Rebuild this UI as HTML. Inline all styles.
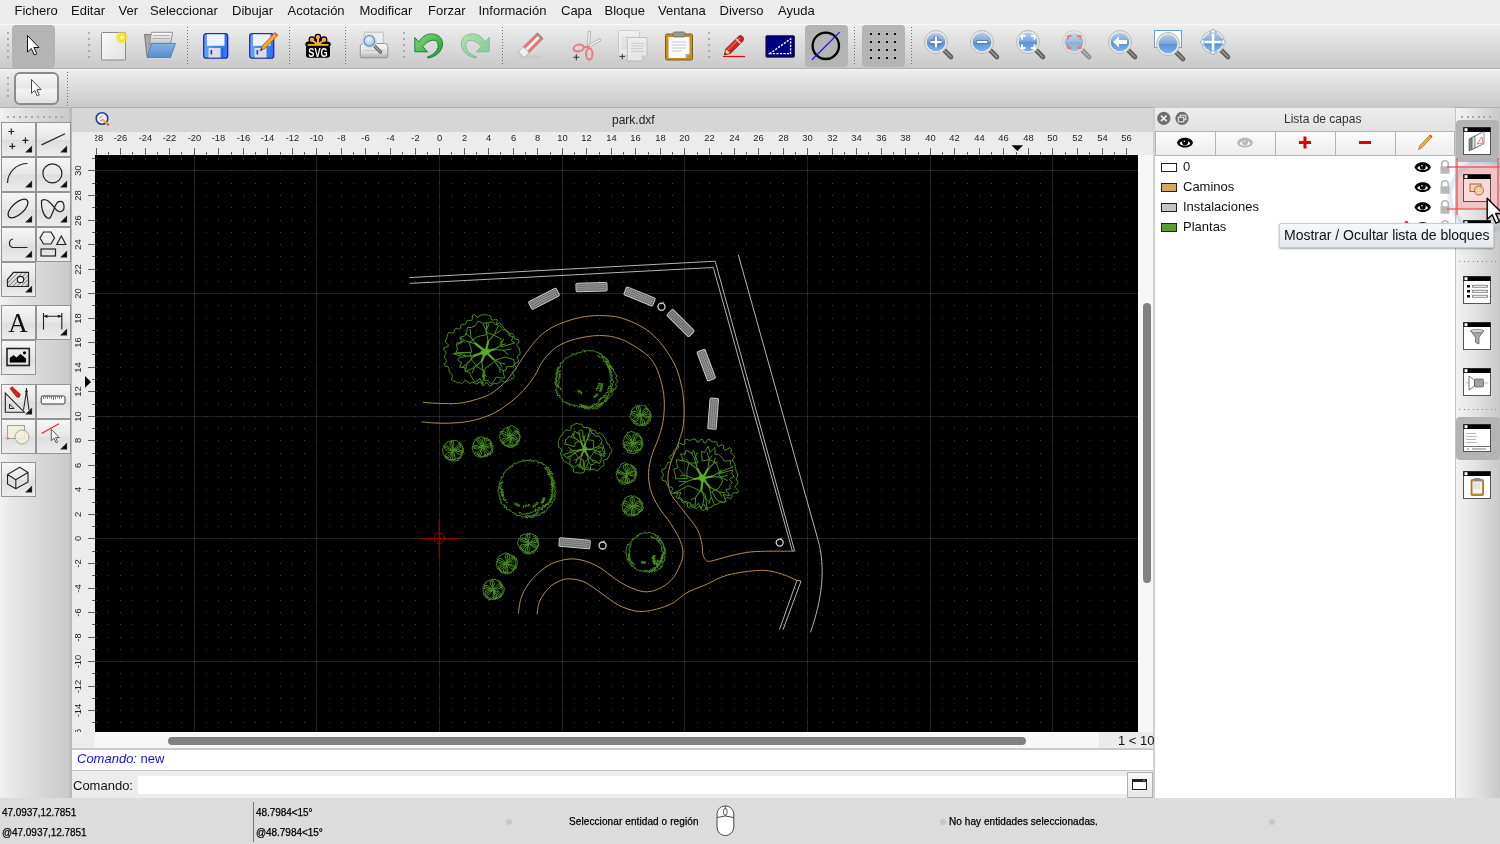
<!DOCTYPE html><html><head><meta charset="utf-8"><style>
*{margin:0;padding:0;box-sizing:border-box}
html,body{width:1500px;height:844px;overflow:hidden;background:#ececec;font-family:"Liberation Sans",sans-serif;color:#222;-webkit-font-smoothing:antialiased}
body{will-change:transform}
.a{position:absolute}
svg{position:absolute;overflow:visible}
.menu{left:0;top:0;width:1500px;height:24px;background:#ececec}
.menu span{position:absolute;top:3px;font-size:13px;line-height:16px;color:#111}
.tb1{left:0;top:24px;width:1500px;height:45px;background:linear-gradient(#eeeeee,#dedede 40%,#c9c9c9);border-top:1px solid #f8f8f8;border-bottom:1px solid #b0b0b0}
.tb2{left:0;top:69px;width:1500px;height:39px;background:linear-gradient(#eeeeee,#dedede 40%,#cacaca);border-top:1px solid #f4f4f4;border-bottom:1px solid #b4b4b4}
.tool{left:0;top:108px;width:72px;height:690px;background:linear-gradient(90deg,#f2f2f2,#e8e8e8 15%,#d8d8d8 55%,#cacaca 96%,#bababa 97%)}
.tbtn{position:absolute;width:35px;height:35px;border:1px solid #949494;background:linear-gradient(#f6f6f6,#e6e6e6 50%,#dedede 52%,#ececec)}
.title{left:72px;top:108px;width:1083px;height:24px;background:#d6d6d6}
.rul{background:#ececec}
.canvas{left:95px;top:155px;width:1043px;height:577px;background:#000;overflow:hidden}
.layers{left:1155px;top:108px;width:300px;height:690px;background:#fff}
.status{left:0;top:798px;width:1500px;height:46px;background:#dcdcdc}
.st{position:absolute;font-size:10px;line-height:12px;color:#000;letter-spacing:-0.05px;white-space:nowrap;-webkit-text-stroke:0.25px #000}
</style></head><body>
<div class="a menu">
<span style="left:14.5px">Fichero</span>
<span style="left:71px">Editar</span>
<span style="left:118.5px">Ver</span>
<span style="left:150px">Seleccionar</span>
<span style="left:232px">Dibujar</span>
<span style="left:287.5px">Acotación</span>
<span style="left:359.5px">Modificar</span>
<span style="left:428px">Forzar</span>
<span style="left:478.5px">Información</span>
<span style="left:561px">Capa</span>
<span style="left:604.5px">Bloque</span>
<span style="left:658px">Ventana</span>
<span style="left:719.5px">Diverso</span>
<span style="left:778px">Ayuda</span>
</div>
<div class="a tb1"></div>
<div class="a tb2"></div>
<div class="a" style="left:7px;top:32px;width:2px;height:2px;background:#9a9a9a;border-radius:1px"></div><div class="a" style="left:7px;top:38px;width:2px;height:2px;background:#9a9a9a;border-radius:1px"></div><div class="a" style="left:7px;top:44px;width:2px;height:2px;background:#9a9a9a;border-radius:1px"></div><div class="a" style="left:7px;top:50px;width:2px;height:2px;background:#9a9a9a;border-radius:1px"></div><div class="a" style="left:7px;top:56px;width:2px;height:2px;background:#9a9a9a;border-radius:1px"></div>
<div class="a" style="left:12px;top:25px;width:43px;height:43px;background:#b4b4b4;border-radius:4px"></div>
<svg class="a" style="left:27px;top:35px" width="14" height="22"><path d="M0 0L0 16.5L3.8 13L6.8 19.5L9.3 18.3L6.4 12L11.5 12z" transform="translate(0.5 0.5)" fill="#fff" stroke="#111" stroke-width="1"/></svg>
<div class="a" style="left:88px;top:32px;width:2px;height:2px;background:#9a9a9a;border-radius:1px"></div><div class="a" style="left:88px;top:38px;width:2px;height:2px;background:#9a9a9a;border-radius:1px"></div><div class="a" style="left:88px;top:44px;width:2px;height:2px;background:#9a9a9a;border-radius:1px"></div><div class="a" style="left:88px;top:50px;width:2px;height:2px;background:#9a9a9a;border-radius:1px"></div><div class="a" style="left:88px;top:56px;width:2px;height:2px;background:#9a9a9a;border-radius:1px"></div>
<svg class="a" style="left:100px;top:30px" width="30" height="32"><defs><linearGradient id="gp" x1="0" y1="0" x2="1" y2="1"><stop offset="0" stop-color="#fafafa"/><stop offset="1" stop-color="#e2e2e2"/></linearGradient><radialGradient id="gy"><stop offset="0" stop-color="#fffbd0"/><stop offset=".45" stop-color="#f2e21a"/><stop offset="1" stop-color="#f2e21a" stop-opacity="0"/></radialGradient></defs><rect x="1.5" y="2.5" width="24" height="27.5" rx="1" fill="url(#gp)" stroke="#8a8a8a"/><circle cx="21.8" cy="7.5" r="7" fill="url(#gy)"/></svg>
<svg class="a" style="left:140px;top:28px" width="40" height="34"><defs><linearGradient id="gf" x1="0" y1="0" x2="0" y2="1"><stop offset="0" stop-color="#86b2e2"/><stop offset="1" stop-color="#5a8ed0"/></linearGradient><linearGradient id="gpp" x1="0" y1="0" x2="0" y2="1"><stop offset="0" stop-color="#fafafa"/><stop offset="1" stop-color="#c4c4c4"/></linearGradient></defs><path d="M4.5 6.5H12.5L10 28.5H7z" fill="#a8a8a8" stroke="#6e6e6e" stroke-width="0.9"/><path d="M11.5 4.3H32.7L30.5 16H9.5z" fill="url(#gpp)" stroke="#8a8a8a" stroke-width="0.9"/><path d="M13 7.5H30M12.5 10.5H29.5" stroke="#b0b0b0" stroke-width="1.2"/><path d="M11.4 15.4H35.5L30.5 29.4H7C9 25 10 19 11.4 15.4z" fill="url(#gf)" stroke="#4a7cc0" stroke-width="0.9"/></svg>
<div class="a" style="left:187px;top:27px;width:1px;height:39px;background:linear-gradient(#707070 50%,transparent 50%);background-size:1px 3px"></div>
<svg class="a" style="left:203px;top:33px" width="26" height="26"><defs><linearGradient id="gs" x1="0" x2="1"><stop offset="0" stop-color="#69a6f8"/><stop offset=".5" stop-color="#3f85ef"/><stop offset="1" stop-color="#2f74f2"/></linearGradient></defs><rect x="0.7" y="0.7" width="24" height="24.5" rx="2.5" fill="url(#gs)" stroke="#2626a6" stroke-width="1.3"/><rect x="4" y="1.3" width="17.5" height="11.5" fill="#eef2ff"/><rect x="5.5" y="15" width="12" height="9.5" fill="#dcdce4"/><rect x="7.5" y="17" width="1.7" height="4.5" fill="#1a3ad8"/><rect x="18.5" y="15" width="2" height="9.5" fill="#1f5ef0"/></svg>
<svg class="a" style="left:249px;top:31px" width="30" height="29"><rect x="0.7" y="2.7" width="24" height="24.5" rx="2.5" fill="url(#gs)" stroke="#2626a6" stroke-width="1.3"/><rect x="4" y="3.3" width="17.5" height="11.5" fill="#eef2ff"/><rect x="5.5" y="17" width="12" height="9.5" fill="#dcdce4"/><rect x="7.5" y="19" width="1.7" height="4.5" fill="#1a3ad8"/><path d="M11 20l3-6 12-12.5 2.8 2.8L16.5 17z" fill="#f5a623" stroke="#b05a10" stroke-width="0.8"/><path d="M25 2.5l2.8 2.8 1-1-2.8-2.8z" fill="#e05050"/><path d="M11 20l1.5-3 1.5 1.5z" fill="#333"/></svg>
<div class="a" style="left:289px;top:27px;width:1px;height:39px;background:linear-gradient(#707070 50%,transparent 50%);background-size:1px 3px"></div>
<svg class="a" style="left:300px;top:28px" width="40" height="34"><g stroke="#000" stroke-width="2.2" stroke-linecap="round"><path d="M18 17L11.9 11.7M18 17V9.1M18 17L24 11.7M18 17L8 16.2M18 17L28 16.2" stroke-width="5.5"/></g><circle cx="11.9" cy="11.7" r="3.4" fill="#000"/><circle cx="17.9" cy="9.1" r="3.4" fill="#000"/><circle cx="24" cy="11.7" r="3.4" fill="#000"/><g stroke="#f7ac2f" stroke-linecap="round"><path d="M18 17L11.9 11.7M18 17V9.1M18 17L24 11.7" stroke-width="2"/><path d="M8.5 16.8H27.5" stroke-width="1.8"/></g><circle cx="11.9" cy="11.7" r="2.2" fill="#f7ac2f"/><circle cx="17.9" cy="9.1" r="2.2" fill="#f7ac2f"/><circle cx="24" cy="11.7" r="2.2" fill="#f7ac2f"/><rect x="6" y="17.5" width="24" height="12.3" rx="2.8" fill="#000"/><path d="M7.5 17H28.5" stroke="#f7ac2f" stroke-width="1.4"/><text transform="translate(18 29) scale(0.68 1)" text-anchor="middle" font-family="Liberation Sans" font-weight="bold" font-size="13.5" fill="#fff">SVG</text></svg>
<div class="a" style="left:345px;top:27px;width:1px;height:39px;background:linear-gradient(#707070 50%,transparent 50%);background-size:1px 3px"></div>
<svg class="a" style="left:355px;top:26px" width="40" height="38"><defs><linearGradient id="gpr" x1="0" y1="0" x2="0" y2="1"><stop offset="0" stop-color="#fafafa"/><stop offset=".6" stop-color="#e0e0e0"/><stop offset="1" stop-color="#b0b0b0"/></linearGradient><radialGradient id="glens" cx=".45" cy=".35" r=".7"><stop offset="0" stop-color="#eef4fb"/><stop offset="1" stop-color="#9ab8d8"/></radialGradient></defs><rect x="9.3" y="6.2" width="19" height="13" rx="1" fill="#ececec" stroke="#b8b8b8" stroke-width="0.9"/><path d="M5.3 20.5Q5.3 17.5 8.3 17.5H29.8Q32.8 17.5 32.8 20.5V30.5Q32.8 31.8 31.5 31.8H6.6Q5.3 31.8 5.3 30.5z" fill="url(#gpr)" stroke="#8c8c8c" stroke-width="0.9"/><path d="M8 24.5H30" stroke="#c8c8c8" stroke-width="1.2"/><path d="M19 19.5L25.5 26" stroke="#555" stroke-width="3.2" stroke-linecap="round"/><path d="M19 19.5L25.5 26" stroke="#aaa" stroke-width="1.4" stroke-linecap="round"/><circle cx="14.4" cy="14.9" r="6.8" fill="#f4f4f4" stroke="#c8c8c8" stroke-width="0.7"/><circle cx="14.4" cy="14.9" r="5.4" fill="url(#glens)" stroke="#4a80c8" stroke-width="1.1"/></svg>
<div class="a" style="left:403px;top:32px;width:2px;height:2px;background:#9a9a9a;border-radius:1px"></div><div class="a" style="left:403px;top:38px;width:2px;height:2px;background:#9a9a9a;border-radius:1px"></div><div class="a" style="left:403px;top:44px;width:2px;height:2px;background:#9a9a9a;border-radius:1px"></div><div class="a" style="left:403px;top:50px;width:2px;height:2px;background:#9a9a9a;border-radius:1px"></div><div class="a" style="left:403px;top:56px;width:2px;height:2px;background:#9a9a9a;border-radius:1px"></div>
<svg class="a" style="left:0;top:0" width="500" height="70"><defs><linearGradient id="gu" x1="0" y1="0" x2="1" y2="1"><stop offset="0" stop-color="#8ad67a"/><stop offset="1" stop-color="#22983a"/></linearGradient><linearGradient id="gr" x1="1" y1="0" x2="0" y2="1"><stop offset="0" stop-color="#b8e2b0"/><stop offset="1" stop-color="#80c49a"/></linearGradient></defs><path d="M414.7 37.4L414.9 51.8L427.6 51.8L422.7 46.5C426 43 429 40.3 433.8 40.3C438 40.5 438.5 45 437.9 47.6C437 52 432 55.5 427.4 57L428 58C436 57 442.6 51 442.6 43.8C442.6 37 437 33.9 431.5 33.9C426 33.9 421.5 37 418.9 42.1Z" fill="url(#gu)" stroke="#0b7a2a" stroke-width="0.9" stroke-linejoin="round"/><path d="M414.7 37.4L414.9 51.8L427.6 51.8L422.7 46.5C426 43 429 40.3 433.8 40.3C438 40.5 438.5 45 437.9 47.6C437 52 432 55.5 427.4 57L428 58C436 57 442.6 51 442.6 43.8C442.6 37 437 33.9 431.5 33.9C426 33.9 421.5 37 418.9 42.1Z" transform="translate(904 0) scale(-1 1)" fill="url(#gr)" stroke="#7ab890" stroke-width="0.9" stroke-linejoin="round"/></svg>
<div class="a" style="left:502px;top:27px;width:1px;height:39px;background:linear-gradient(#707070 50%,transparent 50%);background-size:1px 3px"></div>
<svg class="a" style="left:512px;top:26px" width="36" height="36"><ellipse cx="19" cy="31" rx="12" ry="1.6" fill="#c4c4c4" opacity="0.7"/><g transform="translate(18.8 19.2) rotate(-45)"><rect x="-13.5" y="-4.2" width="27" height="8.4" rx="1" fill="#e07c7c" stroke="#b86a6a" stroke-width="0.6"/><rect x="-13.5" y="-1.4" width="25" height="2.8" fill="#f2f2f2"/><rect x="-13.5" y="-4.2" width="7" height="8.4" fill="#f0f0f0" stroke="#a8a8a8" stroke-width="0.6"/><rect x="11.5" y="-4.2" width="2" height="8.4" fill="#909090"/></g></svg>
<svg class="a" style="left:570px;top:28px" width="34" height="34"><path d="M17.5 17.5L18.3 3L20.8 3.3L19.5 18.5z" fill="#f2f2f2" stroke="#a0a0a0" stroke-width="0.7"/><path d="M18.5 17L30 10.5L30.7 12.8L19.5 19z" fill="#f2f2f2" stroke="#a0a0a0" stroke-width="0.7"/><ellipse cx="8.7" cy="20" rx="5.2" ry="3.3" fill="none" stroke="#e68080" stroke-width="2.1" transform="rotate(-12 8.7 20)"/><ellipse cx="19.3" cy="26" rx="3.2" ry="5.6" fill="none" stroke="#e68080" stroke-width="2.1"/><path d="M13.5 19.5L18 18.5L19 21" fill="none" stroke="#e68080" stroke-width="2"/><path d="M3.3 29.3H9.3M6.3 26.3V32.3" stroke="#333" stroke-width="1.1"/></svg>
<svg class="a" style="left:612px;top:26px" width="40" height="38"><g opacity="0.6"><rect x="6.5" y="4.5" width="21" height="25" rx="1.2" fill="#f4f4f4" stroke="#b4b4b4" stroke-width="0.8"/><path d="M10 11.3h13M10 14h13M10 16.7h13M10 19.4h13M10 22h13" stroke="#c8c8c8" stroke-width="0.9"/><path d="M15.3 11.5H35V29.5L29.5 35H15.3z" fill="#f6f6f6" stroke="#a0a0a0" stroke-width="0.8"/><path d="M19 17.3h13.5M19 20h13M19 22.7h12M19 25.4h13.5" stroke="#b8b8b8" stroke-width="0.9"/><path d="M29.5 35V29.5H35z" fill="#c8c8c8"/></g><path d="M7.5 30.5H13M10.3 27.7V33.3" stroke="#444" stroke-width="1.1"/></svg>
<svg class="a" style="left:664px;top:31px" width="30" height="30"><rect x="1.5" y="3" width="27" height="26" rx="1.5" fill="#c98a2a" stroke="#8a5a10"/><path d="M4.5 6h21v17l-4 4h-17z" fill="#fafafa"/><path d="M8 11h14M8 14h14M8 17h14M8 20h10" stroke="#c8c8c8"/><path d="M21.5 27l4-4h-4z" fill="#a8a8a8"/><rect x="9" y="1" width="12" height="5" rx="1.5" fill="#9a9a8a" stroke="#6a6a5a" stroke-width="0.8"/></svg>
<div class="a" style="left:708px;top:32px;width:2px;height:2px;background:#9a9a9a;border-radius:1px"></div><div class="a" style="left:708px;top:38px;width:2px;height:2px;background:#9a9a9a;border-radius:1px"></div><div class="a" style="left:708px;top:44px;width:2px;height:2px;background:#9a9a9a;border-radius:1px"></div><div class="a" style="left:708px;top:50px;width:2px;height:2px;background:#9a9a9a;border-radius:1px"></div><div class="a" style="left:708px;top:56px;width:2px;height:2px;background:#9a9a9a;border-radius:1px"></div>
<svg class="a" style="left:716px;top:26px" width="36" height="36"><g transform="translate(8.5 28.8) rotate(-45)"><path d="M0 0L5.5 -3.2H22.5A3.2 3.2 0 0 1 22.5 3.2H5.5z" fill="#d8202a" stroke="#6a3410" stroke-width="0.8"/><path d="M5.5 -1H22.5" stroke="#f07070" stroke-width="1"/><rect x="18.5" y="-3.2" width="1.8" height="6.4" fill="#c8c8c8"/><path d="M0 0L5.5 -3.2V3.2z" fill="#f0d0a0" stroke="#6a3410" stroke-width="0.6"/><path d="M0 0L2 -1.2V1.2z" fill="#222"/></g><path d="M7 30.5H29" stroke="#f00000" stroke-width="1.2"/></svg>
<svg class="a" style="left:765px;top:35px" width="31" height="24"><rect x="0.9" y="0.7" width="28.5" height="21.5" rx="1" fill="#00007e" stroke="#1a1a1a" stroke-width="0.9"/><path d="M4.6 18.7L25.6 3.9V18.7z" fill="none" stroke="#ffffff" stroke-width="1.3" stroke-dasharray="2.2 1.3"/></svg>
<div class="a" style="left:805px;top:25px;width:43px;height:42px;background:#b4b4b4;border-radius:4px"></div>
<svg class="a" style="left:805px;top:25px" width="43" height="42"><circle cx="20.8" cy="20.8" r="13.2" fill="none" stroke="#000" stroke-width="2.3"/><path d="M7 34.75L34.7 7.1" stroke="#1010f0" stroke-width="1.1"/></svg>
<div class="a" style="left:854px;top:27px;width:1px;height:39px;background:linear-gradient(#707070 50%,transparent 50%);background-size:1px 3px"></div>
<div class="a" style="left:862px;top:25px;width:43px;height:42px;background:#b4b4b4;border-radius:4px"></div>
<svg class="a" style="left:0;top:0" width="1" height="1"><rect x="870" y="33" width="2" height="2" fill="#111"/><rect x="870" y="41" width="2" height="2" fill="#111"/><rect x="870" y="49" width="2" height="2" fill="#111"/><rect x="870" y="57" width="2" height="2" fill="#111"/><rect x="878" y="33" width="2" height="2" fill="#111"/><rect x="878" y="41" width="2" height="2" fill="#111"/><rect x="878" y="49" width="2" height="2" fill="#111"/><rect x="878" y="57" width="2" height="2" fill="#111"/><rect x="886" y="33" width="2" height="2" fill="#111"/><rect x="886" y="41" width="2" height="2" fill="#111"/><rect x="886" y="49" width="2" height="2" fill="#111"/><rect x="886" y="57" width="2" height="2" fill="#111"/><rect x="894" y="33" width="2" height="2" fill="#111"/><rect x="894" y="41" width="2" height="2" fill="#111"/><rect x="894" y="49" width="2" height="2" fill="#111"/><rect x="894" y="57" width="2" height="2" fill="#111"/></svg>
<div class="a" style="left:911px;top:27px;width:1px;height:39px;background:linear-gradient(#707070 50%,transparent 50%);background-size:1px 3px"></div>
<svg class="a" width="0" height="0"><defs><linearGradient id="gmag" x1="0" y1="0" x2="0" y2="1"><stop offset="0" stop-color="#b4cdea"/><stop offset=".48" stop-color="#7aa4d8"/><stop offset=".52" stop-color="#5b8fd2"/><stop offset="1" stop-color="#7ab4ee"/></linearGradient></defs></svg>
<svg class="a" style="left:921px;top:27px" width="34" height="34"><path d="M23 23L30 30" stroke="#5e5e5e" stroke-width="4.6" stroke-linecap="round"/><path d="M23 23L30 30" stroke="#9a9a9a" stroke-width="1.4" stroke-linecap="round"/><circle cx="15" cy="15" r="11.5" fill="#e8e8e2" stroke="#b8b8b0" stroke-width="1"/><circle cx="15" cy="15" r="9.3" fill="url(#gmag)"/><path d="M15 9.5v11M9.5 15h11" stroke="#2a5aa0" stroke-width="4.4"/><path d="M15 9.5v11M9.5 15h11" stroke="#fff" stroke-width="2.6"/></svg>
<svg class="a" style="left:966.5px;top:27px" width="34" height="34"><path d="M23 23L30 30" stroke="#5e5e5e" stroke-width="4.6" stroke-linecap="round"/><path d="M23 23L30 30" stroke="#9a9a9a" stroke-width="1.4" stroke-linecap="round"/><circle cx="15" cy="15" r="11.5" fill="#e8e8e2" stroke="#b8b8b0" stroke-width="1"/><circle cx="15" cy="15" r="9.3" fill="url(#gmag)"/><path d="M9.5 15h11" stroke="#2a5aa0" stroke-width="4"/><path d="M9.8 15h10.4" stroke="#fff" stroke-width="2.4"/></svg>
<svg class="a" style="left:1013px;top:27px" width="34" height="34"><path d="M23 23L30 30" stroke="#5e5e5e" stroke-width="4.6" stroke-linecap="round"/><path d="M23 23L30 30" stroke="#9a9a9a" stroke-width="1.4" stroke-linecap="round"/><circle cx="15" cy="15" r="11.5" fill="#e8e8e2" stroke="#b8b8b0" stroke-width="1"/><circle cx="15" cy="15" r="9.3" fill="url(#gmag)"/><path d="M9 12.5V9h3.5M18 9h3.5v3.5M21.5 17.5V21h-3.5M12.5 21H9v-3.5" fill="none" stroke="#fff" stroke-width="2"/></svg>
<svg class="a" style="left:1059px;top:27px" width="34" height="34" opacity="0.6"><path d="M23 23L30 30" stroke="#5e5e5e" stroke-width="4.6" stroke-linecap="round"/><path d="M23 23L30 30" stroke="#9a9a9a" stroke-width="1.4" stroke-linecap="round"/><circle cx="15" cy="15" r="11.5" fill="#e8e8e2" stroke="#b8b8b0" stroke-width="1"/><circle cx="15" cy="15" r="9.3" fill="url(#gmag)"/><path d="M9 12.5V9h3.5M18 9h3.5v3.5M21.5 17.5V21h-3.5M12.5 21H9v-3.5" fill="none" stroke="#e84040" stroke-width="2"/></svg>
<svg class="a" style="left:1105px;top:27px" width="34" height="34"><path d="M23 23L30 30" stroke="#5e5e5e" stroke-width="4.6" stroke-linecap="round"/><path d="M23 23L30 30" stroke="#9a9a9a" stroke-width="1.4" stroke-linecap="round"/><circle cx="15" cy="15" r="11.5" fill="#e8e8e2" stroke="#b8b8b0" stroke-width="1"/><circle cx="15" cy="15" r="9.3" fill="url(#gmag)"/><path d="M8 15l6-5.5v3.5h8v4h-8v3.5z" fill="#fff"/></svg>
<div class="a" style="left:1154px;top:30px;width:28px;height:18px;background:#fff;border:1px solid #6a9ad8"></div>
<svg class="a" style="left:1153px;top:29px" width="34" height="34"><path d="M23 23L30 30" stroke="#5e5e5e" stroke-width="4.6" stroke-linecap="round"/><path d="M23 23L30 30" stroke="#9a9a9a" stroke-width="1.4" stroke-linecap="round"/><circle cx="15" cy="15" r="11.5" fill="#e8e8e2" stroke="#b8b8b0" stroke-width="1"/><circle cx="15" cy="15" r="9.3" fill="url(#gmag)"/></svg>
<svg class="a" style="left:1198px;top:27px" width="34" height="34"><path d="M23 23L30 30" stroke="#5e5e5e" stroke-width="4.6" stroke-linecap="round"/><path d="M23 23L30 30" stroke="#9a9a9a" stroke-width="1.4" stroke-linecap="round"/><circle cx="15" cy="15" r="11.5" fill="#e8e8e2" stroke="#b8b8b0" stroke-width="1"/><circle cx="15" cy="15" r="9.3" fill="url(#gmag)"/><path d="M15 4v22M4 15h22" stroke="#fff" stroke-width="2.5"/><path d="M15 2l-3.5 4h7zM15 28l-3.5-4h7zM2 15l4-3.5v7zM28 15l-4-3.5v7z" fill="#fff" stroke="#4a80d0" stroke-width="0.6"/></svg>
<div class="a" style="left:7px;top:77px;width:2px;height:2px;background:#9a9a9a;border-radius:1px"></div><div class="a" style="left:7px;top:83px;width:2px;height:2px;background:#9a9a9a;border-radius:1px"></div><div class="a" style="left:7px;top:89px;width:2px;height:2px;background:#9a9a9a;border-radius:1px"></div><div class="a" style="left:7px;top:95px;width:2px;height:2px;background:#9a9a9a;border-radius:1px"></div>
<div class="a" style="left:14px;top:72px;width:45px;height:33px;border:2px solid #8c8c8c;border-radius:6px;background:linear-gradient(#f8f8f8,#e6e6e6 45%,#f4f4f4 55%,#e2e2e2)"></div>
<svg class="a" style="left:31px;top:79px" width="12" height="19"><path d="M0 0L0 13.8L3.2 10.9L5.7 16.4L7.8 15.4L5.4 10.1L9.6 10.1z" transform="translate(0.5 0.5)" fill="#fff" stroke="#333" stroke-width="0.9"/></svg>
<div class="a" style="left:67px;top:72px;width:1px;height:34px;background:linear-gradient(#707070 50%,transparent 50%);background-size:1px 3px"></div>
<div class="a tool"></div>
<div class="a" style="left:7px;top:116px;width:2px;height:2px;background:#a8a8a8"></div><div class="a" style="left:13px;top:116px;width:2px;height:2px;background:#a8a8a8"></div><div class="a" style="left:19px;top:116px;width:2px;height:2px;background:#a8a8a8"></div><div class="a" style="left:25px;top:116px;width:2px;height:2px;background:#a8a8a8"></div><div class="a" style="left:31px;top:116px;width:2px;height:2px;background:#a8a8a8"></div><div class="a" style="left:37px;top:116px;width:2px;height:2px;background:#a8a8a8"></div><div class="a" style="left:43px;top:116px;width:2px;height:2px;background:#a8a8a8"></div><div class="a" style="left:49px;top:116px;width:2px;height:2px;background:#a8a8a8"></div><div class="a" style="left:55px;top:116px;width:2px;height:2px;background:#a8a8a8"></div><div class="a" style="left:61px;top:116px;width:2px;height:2px;background:#a8a8a8"></div>
<div class="tbtn" style="left:1px;top:122px"></div>
<div class="tbtn" style="left:36px;top:122px"></div>
<div class="tbtn" style="left:1px;top:157px"></div>
<div class="tbtn" style="left:36px;top:157px"></div>
<div class="tbtn" style="left:1px;top:192px"></div>
<div class="tbtn" style="left:36px;top:192px"></div>
<div class="tbtn" style="left:1px;top:227px"></div>
<div class="tbtn" style="left:36px;top:227px"></div>
<div class="tbtn" style="left:1px;top:262px"></div>
<div class="tbtn" style="left:1px;top:305px"></div>
<div class="tbtn" style="left:36px;top:305px"></div>
<div class="tbtn" style="left:1px;top:340px"></div>
<div class="tbtn" style="left:1px;top:384px"></div>
<div class="tbtn" style="left:36px;top:384px"></div>
<div class="tbtn" style="left:1px;top:419px"></div>
<div class="tbtn" style="left:36px;top:419px"></div>
<div class="tbtn" style="left:1px;top:462px"></div>
<svg class="a" style="left:0;top:0" width="72" height="500" fill="none" stroke="#222" stroke-width="1.2"><path d="M8.3 131.5h6M11.3 128.5v6M22.4 140.4h6M25.4 137.4v6M9.3 146.3h6M12.3 143.3v6"/><path d="M26.5 152h5v-5z" fill="#000"/><path d="M61.5 152h5v-5z" fill="#000"/><path d="M41.5 144.9L65 133.8"/><path d="M7.5 183A20 20 0 0 1 27.5 163.5"/><circle cx="52.4" cy="173.4" r="9.5"/><path d="M26.5 187h5v-5z" fill="#000"/><path d="M61.5 187h5v-5z" fill="#000"/><ellipse cx="18" cy="208.5" rx="12.3" ry="5.8" transform="rotate(-42 18 208.5)"/><path d="M41.5 200.5C47 197 52 205 56 209.5C60 214 64.5 211 64 206C63.5 200 58 200 55.5 205.5C52 213 51 220 47.5 218C43 215.5 41 207 41.5 200.5z"/><path d="M26.5 222h5v-5z" fill="#000"/><path d="M61.5 222h5v-5z" fill="#000"/><path d="M13.2 239A4.3 4.3 0 0 0 13 247.5H27.5"/><path d="M43.5 232h7.5l3.5 6-3.5 6h-7.5l-3.5-6z"/><path d="M61.3 236l4.5 8.5h-9z"/><rect x="41" y="249" width="14.5" height="7"/><path d="M26.5 257h5v-5z" fill="#000"/><path d="M61.5 257h5v-5z" fill="#000"/><defs><pattern id="hp" width="3" height="3" patternUnits="userSpaceOnUse" patternTransform="rotate(-45)"><path d="M0 1.5h3" stroke="#666" stroke-width="0.7"/></pattern></defs><path d="M7.5 286.5V279.5L13.5 272.3H28.5V286.5z" fill="url(#hp)"/><circle cx="20.5" cy="279.5" r="3.2" fill="#eee"/><path d="M26.5 292h5v-5z" fill="#000"/><text x="18" y="331.5" font-family="Liberation Serif" font-size="27" fill="#111" stroke="none" text-anchor="middle">A</text><path d="M43.5 313V329.5M61.8 313V329.5M43.5 316.3H61.8" stroke-width="1.1"/><path d="M43.5 316.3l4-1.8v3.6zM61.8 316.3l-4-1.8v3.6z" fill="#222" stroke="none"/><path d="M61.5 335h5v-5z" fill="#000"/><rect x="7" y="348.5" width="22.3" height="17" stroke-width="1.6"/><path d="M9.8 362.5V358L13.5 355l3 2.5 4-3.5 5.5 4.5v4z" fill="#000" stroke="none"/><circle cx="24.5" cy="352.8" r="1.6" fill="#000" stroke="none"/><path d="M5.3 393V412.2H24.3z" stroke-width="1.1"/><path d="M9.5 404V408.5H14z" stroke-width="1"/><path d="M10 388.5L12 386.5L20.5 394.5L19 397.5L16.5 397z" fill="#d82020" stroke="#801010" stroke-width="0.5"/><path d="M26.5 388V391M26.5 391L23.5 410M26.5 391L29 410" stroke-width="1.1"/><circle cx="26.5" cy="391.5" r="1.3" fill="#222" stroke="none"/><path d="M26.5 414h5v-5z" fill="#000"/><rect x="41.2" y="396" width="23.8" height="8" rx="1.5" fill="#fafafa" stroke="#333" stroke-width="1"/><path d="M43.5 396.5v2.5M45.5 396.5v1.8M47.5 396.5v2.5M49.5 396.5v1.8M51.5 396.5v2.5M53.5 396.5v3.5M55.5 396.5v2.5M57.5 396.5v1.8M59.5 396.5v2.5M61.5 396.5v1.8" stroke-width="0.6"/><rect x="7.5" y="425.5" width="17" height="13" fill="#f2efdc" stroke="#a0a0a0" stroke-width="1"/><circle cx="22" cy="437" r="7" fill="#f2efdc" fill-opacity="0.85" stroke="#a8a8a0" stroke-width="1"/><circle cx="7.8" cy="438.2" r="1.3" fill="#f07070" stroke="none"/><path d="M41.5 433.5L59 423.8" stroke="#e82020" stroke-width="1.1"/><path d="M51.3 429.2v11.5l2.7-2.5l2 4.5l1.6-0.8l-2-4.3h3.6z" fill="#fff" stroke="#333" stroke-width="0.8"/><path d="M61.5 449h5v-5z" fill="#000"/><path d="M7.5 474.5L19.7 467.3L28 472.5L15.8 479.8zM7.5 474.5V484L15.8 488.7V479.8M28 472.5V482L15.8 488.7" stroke-width="1.1" stroke-linejoin="round"/><path d="M26.5 492h5v-5z" fill="#000"/></svg>
<div class="a title"></div>
<div class="a" style="left:72px;top:132px;width:1083px;height:23px;background:#ececec"></div>
<div class="a" style="left:72px;top:155px;width:23px;height:593px;background:#ececec"></div>
<div class="a" style="left:95px;top:732px;width:1060px;height:16px;background:#f7f7f7"></div>
<div class="a" style="left:1138px;top:155px;width:17px;height:577px;background:#f7f7f7"></div>
<div class="a" style="left:1099px;top:732px;width:55px;height:16px;background:#ebebeb"></div>
<div class="a canvas"></div>
<svg class="a" style="left:95px;top:155px" width="1043" height="577" viewBox="95 155 1043 577">
<path stroke="#202020" stroke-width="1" fill="none" d="M194.5 155V732M316.5 155V732M439.5 155V732M562.5 155V732M684.5 155V732M807.5 155V732M930.5 155V732M1052.5 155V732M95 661.5H1138M95 538.5H1138M95 416.5H1138M95 293.5H1138M95 170.5H1138"/>
<path fill="#404040" d="M96 722h1v1h-1zM96 710h1v1h-1zM96 698h1v1h-1zM96 686h1v1h-1zM96 673h1v1h-1zM96 661h1v1h-1zM96 649h1v1h-1zM96 637h1v1h-1zM96 624h1v1h-1zM96 612h1v1h-1zM96 600h1v1h-1zM96 588h1v1h-1zM96 575h1v1h-1zM96 563h1v1h-1zM96 551h1v1h-1zM96 538h1v1h-1zM96 526h1v1h-1zM96 514h1v1h-1zM96 502h1v1h-1zM96 489h1v1h-1zM96 477h1v1h-1zM96 465h1v1h-1zM96 453h1v1h-1zM96 440h1v1h-1zM96 428h1v1h-1zM96 416h1v1h-1zM96 404h1v1h-1zM96 391h1v1h-1zM96 379h1v1h-1zM96 367h1v1h-1zM96 354h1v1h-1zM96 342h1v1h-1zM96 330h1v1h-1zM96 318h1v1h-1zM96 305h1v1h-1zM96 293h1v1h-1zM96 281h1v1h-1zM96 269h1v1h-1zM96 256h1v1h-1zM96 244h1v1h-1zM96 232h1v1h-1zM96 220h1v1h-1zM96 207h1v1h-1zM96 195h1v1h-1zM96 183h1v1h-1zM96 170h1v1h-1zM96 158h1v1h-1zM108 722h1v1h-1zM108 710h1v1h-1zM108 698h1v1h-1zM108 686h1v1h-1zM108 673h1v1h-1zM108 661h1v1h-1zM108 649h1v1h-1zM108 637h1v1h-1zM108 624h1v1h-1zM108 612h1v1h-1zM108 600h1v1h-1zM108 588h1v1h-1zM108 575h1v1h-1zM108 563h1v1h-1zM108 551h1v1h-1zM108 538h1v1h-1zM108 526h1v1h-1zM108 514h1v1h-1zM108 502h1v1h-1zM108 489h1v1h-1zM108 477h1v1h-1zM108 465h1v1h-1zM108 453h1v1h-1zM108 440h1v1h-1zM108 428h1v1h-1zM108 416h1v1h-1zM108 404h1v1h-1zM108 391h1v1h-1zM108 379h1v1h-1zM108 367h1v1h-1zM108 354h1v1h-1zM108 342h1v1h-1zM108 330h1v1h-1zM108 318h1v1h-1zM108 305h1v1h-1zM108 293h1v1h-1zM108 281h1v1h-1zM108 269h1v1h-1zM108 256h1v1h-1zM108 244h1v1h-1zM108 232h1v1h-1zM108 220h1v1h-1zM108 207h1v1h-1zM108 195h1v1h-1zM108 183h1v1h-1zM108 170h1v1h-1zM108 158h1v1h-1zM120 722h1v1h-1zM120 710h1v1h-1zM120 698h1v1h-1zM120 686h1v1h-1zM120 673h1v1h-1zM120 661h1v1h-1zM120 649h1v1h-1zM120 637h1v1h-1zM120 624h1v1h-1zM120 612h1v1h-1zM120 600h1v1h-1zM120 588h1v1h-1zM120 575h1v1h-1zM120 563h1v1h-1zM120 551h1v1h-1zM120 538h1v1h-1zM120 526h1v1h-1zM120 514h1v1h-1zM120 502h1v1h-1zM120 489h1v1h-1zM120 477h1v1h-1zM120 465h1v1h-1zM120 453h1v1h-1zM120 440h1v1h-1zM120 428h1v1h-1zM120 416h1v1h-1zM120 404h1v1h-1zM120 391h1v1h-1zM120 379h1v1h-1zM120 367h1v1h-1zM120 354h1v1h-1zM120 342h1v1h-1zM120 330h1v1h-1zM120 318h1v1h-1zM120 305h1v1h-1zM120 293h1v1h-1zM120 281h1v1h-1zM120 269h1v1h-1zM120 256h1v1h-1zM120 244h1v1h-1zM120 232h1v1h-1zM120 220h1v1h-1zM120 207h1v1h-1zM120 195h1v1h-1zM120 183h1v1h-1zM120 170h1v1h-1zM120 158h1v1h-1zM132 722h1v1h-1zM132 710h1v1h-1zM132 698h1v1h-1zM132 686h1v1h-1zM132 673h1v1h-1zM132 661h1v1h-1zM132 649h1v1h-1zM132 637h1v1h-1zM132 624h1v1h-1zM132 612h1v1h-1zM132 600h1v1h-1zM132 588h1v1h-1zM132 575h1v1h-1zM132 563h1v1h-1zM132 551h1v1h-1zM132 538h1v1h-1zM132 526h1v1h-1zM132 514h1v1h-1zM132 502h1v1h-1zM132 489h1v1h-1zM132 477h1v1h-1zM132 465h1v1h-1zM132 453h1v1h-1zM132 440h1v1h-1zM132 428h1v1h-1zM132 416h1v1h-1zM132 404h1v1h-1zM132 391h1v1h-1zM132 379h1v1h-1zM132 367h1v1h-1zM132 354h1v1h-1zM132 342h1v1h-1zM132 330h1v1h-1zM132 318h1v1h-1zM132 305h1v1h-1zM132 293h1v1h-1zM132 281h1v1h-1zM132 269h1v1h-1zM132 256h1v1h-1zM132 244h1v1h-1zM132 232h1v1h-1zM132 220h1v1h-1zM132 207h1v1h-1zM132 195h1v1h-1zM132 183h1v1h-1zM132 170h1v1h-1zM132 158h1v1h-1zM145 722h1v1h-1zM145 710h1v1h-1zM145 698h1v1h-1zM145 686h1v1h-1zM145 673h1v1h-1zM145 661h1v1h-1zM145 649h1v1h-1zM145 637h1v1h-1zM145 624h1v1h-1zM145 612h1v1h-1zM145 600h1v1h-1zM145 588h1v1h-1zM145 575h1v1h-1zM145 563h1v1h-1zM145 551h1v1h-1zM145 538h1v1h-1zM145 526h1v1h-1zM145 514h1v1h-1zM145 502h1v1h-1zM145 489h1v1h-1zM145 477h1v1h-1zM145 465h1v1h-1zM145 453h1v1h-1zM145 440h1v1h-1zM145 428h1v1h-1zM145 416h1v1h-1zM145 404h1v1h-1zM145 391h1v1h-1zM145 379h1v1h-1zM145 367h1v1h-1zM145 354h1v1h-1zM145 342h1v1h-1zM145 330h1v1h-1zM145 318h1v1h-1zM145 305h1v1h-1zM145 293h1v1h-1zM145 281h1v1h-1zM145 269h1v1h-1zM145 256h1v1h-1zM145 244h1v1h-1zM145 232h1v1h-1zM145 220h1v1h-1zM145 207h1v1h-1zM145 195h1v1h-1zM145 183h1v1h-1zM145 170h1v1h-1zM145 158h1v1h-1zM157 722h1v1h-1zM157 710h1v1h-1zM157 698h1v1h-1zM157 686h1v1h-1zM157 673h1v1h-1zM157 661h1v1h-1zM157 649h1v1h-1zM157 637h1v1h-1zM157 624h1v1h-1zM157 612h1v1h-1zM157 600h1v1h-1zM157 588h1v1h-1zM157 575h1v1h-1zM157 563h1v1h-1zM157 551h1v1h-1zM157 538h1v1h-1zM157 526h1v1h-1zM157 514h1v1h-1zM157 502h1v1h-1zM157 489h1v1h-1zM157 477h1v1h-1zM157 465h1v1h-1zM157 453h1v1h-1zM157 440h1v1h-1zM157 428h1v1h-1zM157 416h1v1h-1zM157 404h1v1h-1zM157 391h1v1h-1zM157 379h1v1h-1zM157 367h1v1h-1zM157 354h1v1h-1zM157 342h1v1h-1zM157 330h1v1h-1zM157 318h1v1h-1zM157 305h1v1h-1zM157 293h1v1h-1zM157 281h1v1h-1zM157 269h1v1h-1zM157 256h1v1h-1zM157 244h1v1h-1zM157 232h1v1h-1zM157 220h1v1h-1zM157 207h1v1h-1zM157 195h1v1h-1zM157 183h1v1h-1zM157 170h1v1h-1zM157 158h1v1h-1zM169 722h1v1h-1zM169 710h1v1h-1zM169 698h1v1h-1zM169 686h1v1h-1zM169 673h1v1h-1zM169 661h1v1h-1zM169 649h1v1h-1zM169 637h1v1h-1zM169 624h1v1h-1zM169 612h1v1h-1zM169 600h1v1h-1zM169 588h1v1h-1zM169 575h1v1h-1zM169 563h1v1h-1zM169 551h1v1h-1zM169 538h1v1h-1zM169 526h1v1h-1zM169 514h1v1h-1zM169 502h1v1h-1zM169 489h1v1h-1zM169 477h1v1h-1zM169 465h1v1h-1zM169 453h1v1h-1zM169 440h1v1h-1zM169 428h1v1h-1zM169 416h1v1h-1zM169 404h1v1h-1zM169 391h1v1h-1zM169 379h1v1h-1zM169 367h1v1h-1zM169 354h1v1h-1zM169 342h1v1h-1zM169 330h1v1h-1zM169 318h1v1h-1zM169 305h1v1h-1zM169 293h1v1h-1zM169 281h1v1h-1zM169 269h1v1h-1zM169 256h1v1h-1zM169 244h1v1h-1zM169 232h1v1h-1zM169 220h1v1h-1zM169 207h1v1h-1zM169 195h1v1h-1zM169 183h1v1h-1zM169 170h1v1h-1zM169 158h1v1h-1zM181 722h1v1h-1zM181 710h1v1h-1zM181 698h1v1h-1zM181 686h1v1h-1zM181 673h1v1h-1zM181 661h1v1h-1zM181 649h1v1h-1zM181 637h1v1h-1zM181 624h1v1h-1zM181 612h1v1h-1zM181 600h1v1h-1zM181 588h1v1h-1zM181 575h1v1h-1zM181 563h1v1h-1zM181 551h1v1h-1zM181 538h1v1h-1zM181 526h1v1h-1zM181 514h1v1h-1zM181 502h1v1h-1zM181 489h1v1h-1zM181 477h1v1h-1zM181 465h1v1h-1zM181 453h1v1h-1zM181 440h1v1h-1zM181 428h1v1h-1zM181 416h1v1h-1zM181 404h1v1h-1zM181 391h1v1h-1zM181 379h1v1h-1zM181 367h1v1h-1zM181 354h1v1h-1zM181 342h1v1h-1zM181 330h1v1h-1zM181 318h1v1h-1zM181 305h1v1h-1zM181 293h1v1h-1zM181 281h1v1h-1zM181 269h1v1h-1zM181 256h1v1h-1zM181 244h1v1h-1zM181 232h1v1h-1zM181 220h1v1h-1zM181 207h1v1h-1zM181 195h1v1h-1zM181 183h1v1h-1zM181 170h1v1h-1zM181 158h1v1h-1zM194 722h1v1h-1zM194 710h1v1h-1zM194 698h1v1h-1zM194 686h1v1h-1zM194 673h1v1h-1zM194 661h1v1h-1zM194 649h1v1h-1zM194 637h1v1h-1zM194 624h1v1h-1zM194 612h1v1h-1zM194 600h1v1h-1zM194 588h1v1h-1zM194 575h1v1h-1zM194 563h1v1h-1zM194 551h1v1h-1zM194 538h1v1h-1zM194 526h1v1h-1zM194 514h1v1h-1zM194 502h1v1h-1zM194 489h1v1h-1zM194 477h1v1h-1zM194 465h1v1h-1zM194 453h1v1h-1zM194 440h1v1h-1zM194 428h1v1h-1zM194 416h1v1h-1zM194 404h1v1h-1zM194 391h1v1h-1zM194 379h1v1h-1zM194 367h1v1h-1zM194 354h1v1h-1zM194 342h1v1h-1zM194 330h1v1h-1zM194 318h1v1h-1zM194 305h1v1h-1zM194 293h1v1h-1zM194 281h1v1h-1zM194 269h1v1h-1zM194 256h1v1h-1zM194 244h1v1h-1zM194 232h1v1h-1zM194 220h1v1h-1zM194 207h1v1h-1zM194 195h1v1h-1zM194 183h1v1h-1zM194 170h1v1h-1zM194 158h1v1h-1zM206 722h1v1h-1zM206 710h1v1h-1zM206 698h1v1h-1zM206 686h1v1h-1zM206 673h1v1h-1zM206 661h1v1h-1zM206 649h1v1h-1zM206 637h1v1h-1zM206 624h1v1h-1zM206 612h1v1h-1zM206 600h1v1h-1zM206 588h1v1h-1zM206 575h1v1h-1zM206 563h1v1h-1zM206 551h1v1h-1zM206 538h1v1h-1zM206 526h1v1h-1zM206 514h1v1h-1zM206 502h1v1h-1zM206 489h1v1h-1zM206 477h1v1h-1zM206 465h1v1h-1zM206 453h1v1h-1zM206 440h1v1h-1zM206 428h1v1h-1zM206 416h1v1h-1zM206 404h1v1h-1zM206 391h1v1h-1zM206 379h1v1h-1zM206 367h1v1h-1zM206 354h1v1h-1zM206 342h1v1h-1zM206 330h1v1h-1zM206 318h1v1h-1zM206 305h1v1h-1zM206 293h1v1h-1zM206 281h1v1h-1zM206 269h1v1h-1zM206 256h1v1h-1zM206 244h1v1h-1zM206 232h1v1h-1zM206 220h1v1h-1zM206 207h1v1h-1zM206 195h1v1h-1zM206 183h1v1h-1zM206 170h1v1h-1zM206 158h1v1h-1zM218 722h1v1h-1zM218 710h1v1h-1zM218 698h1v1h-1zM218 686h1v1h-1zM218 673h1v1h-1zM218 661h1v1h-1zM218 649h1v1h-1zM218 637h1v1h-1zM218 624h1v1h-1zM218 612h1v1h-1zM218 600h1v1h-1zM218 588h1v1h-1zM218 575h1v1h-1zM218 563h1v1h-1zM218 551h1v1h-1zM218 538h1v1h-1zM218 526h1v1h-1zM218 514h1v1h-1zM218 502h1v1h-1zM218 489h1v1h-1zM218 477h1v1h-1zM218 465h1v1h-1zM218 453h1v1h-1zM218 440h1v1h-1zM218 428h1v1h-1zM218 416h1v1h-1zM218 404h1v1h-1zM218 391h1v1h-1zM218 379h1v1h-1zM218 367h1v1h-1zM218 354h1v1h-1zM218 342h1v1h-1zM218 330h1v1h-1zM218 318h1v1h-1zM218 305h1v1h-1zM218 293h1v1h-1zM218 281h1v1h-1zM218 269h1v1h-1zM218 256h1v1h-1zM218 244h1v1h-1zM218 232h1v1h-1zM218 220h1v1h-1zM218 207h1v1h-1zM218 195h1v1h-1zM218 183h1v1h-1zM218 170h1v1h-1zM218 158h1v1h-1zM231 722h1v1h-1zM231 710h1v1h-1zM231 698h1v1h-1zM231 686h1v1h-1zM231 673h1v1h-1zM231 661h1v1h-1zM231 649h1v1h-1zM231 637h1v1h-1zM231 624h1v1h-1zM231 612h1v1h-1zM231 600h1v1h-1zM231 588h1v1h-1zM231 575h1v1h-1zM231 563h1v1h-1zM231 551h1v1h-1zM231 538h1v1h-1zM231 526h1v1h-1zM231 514h1v1h-1zM231 502h1v1h-1zM231 489h1v1h-1zM231 477h1v1h-1zM231 465h1v1h-1zM231 453h1v1h-1zM231 440h1v1h-1zM231 428h1v1h-1zM231 416h1v1h-1zM231 404h1v1h-1zM231 391h1v1h-1zM231 379h1v1h-1zM231 367h1v1h-1zM231 354h1v1h-1zM231 342h1v1h-1zM231 330h1v1h-1zM231 318h1v1h-1zM231 305h1v1h-1zM231 293h1v1h-1zM231 281h1v1h-1zM231 269h1v1h-1zM231 256h1v1h-1zM231 244h1v1h-1zM231 232h1v1h-1zM231 220h1v1h-1zM231 207h1v1h-1zM231 195h1v1h-1zM231 183h1v1h-1zM231 170h1v1h-1zM231 158h1v1h-1zM243 722h1v1h-1zM243 710h1v1h-1zM243 698h1v1h-1zM243 686h1v1h-1zM243 673h1v1h-1zM243 661h1v1h-1zM243 649h1v1h-1zM243 637h1v1h-1zM243 624h1v1h-1zM243 612h1v1h-1zM243 600h1v1h-1zM243 588h1v1h-1zM243 575h1v1h-1zM243 563h1v1h-1zM243 551h1v1h-1zM243 538h1v1h-1zM243 526h1v1h-1zM243 514h1v1h-1zM243 502h1v1h-1zM243 489h1v1h-1zM243 477h1v1h-1zM243 465h1v1h-1zM243 453h1v1h-1zM243 440h1v1h-1zM243 428h1v1h-1zM243 416h1v1h-1zM243 404h1v1h-1zM243 391h1v1h-1zM243 379h1v1h-1zM243 367h1v1h-1zM243 354h1v1h-1zM243 342h1v1h-1zM243 330h1v1h-1zM243 318h1v1h-1zM243 305h1v1h-1zM243 293h1v1h-1zM243 281h1v1h-1zM243 269h1v1h-1zM243 256h1v1h-1zM243 244h1v1h-1zM243 232h1v1h-1zM243 220h1v1h-1zM243 207h1v1h-1zM243 195h1v1h-1zM243 183h1v1h-1zM243 170h1v1h-1zM243 158h1v1h-1zM255 722h1v1h-1zM255 710h1v1h-1zM255 698h1v1h-1zM255 686h1v1h-1zM255 673h1v1h-1zM255 661h1v1h-1zM255 649h1v1h-1zM255 637h1v1h-1zM255 624h1v1h-1zM255 612h1v1h-1zM255 600h1v1h-1zM255 588h1v1h-1zM255 575h1v1h-1zM255 563h1v1h-1zM255 551h1v1h-1zM255 538h1v1h-1zM255 526h1v1h-1zM255 514h1v1h-1zM255 502h1v1h-1zM255 489h1v1h-1zM255 477h1v1h-1zM255 465h1v1h-1zM255 453h1v1h-1zM255 440h1v1h-1zM255 428h1v1h-1zM255 416h1v1h-1zM255 404h1v1h-1zM255 391h1v1h-1zM255 379h1v1h-1zM255 367h1v1h-1zM255 354h1v1h-1zM255 342h1v1h-1zM255 330h1v1h-1zM255 318h1v1h-1zM255 305h1v1h-1zM255 293h1v1h-1zM255 281h1v1h-1zM255 269h1v1h-1zM255 256h1v1h-1zM255 244h1v1h-1zM255 232h1v1h-1zM255 220h1v1h-1zM255 207h1v1h-1zM255 195h1v1h-1zM255 183h1v1h-1zM255 170h1v1h-1zM255 158h1v1h-1zM267 722h1v1h-1zM267 710h1v1h-1zM267 698h1v1h-1zM267 686h1v1h-1zM267 673h1v1h-1zM267 661h1v1h-1zM267 649h1v1h-1zM267 637h1v1h-1zM267 624h1v1h-1zM267 612h1v1h-1zM267 600h1v1h-1zM267 588h1v1h-1zM267 575h1v1h-1zM267 563h1v1h-1zM267 551h1v1h-1zM267 538h1v1h-1zM267 526h1v1h-1zM267 514h1v1h-1zM267 502h1v1h-1zM267 489h1v1h-1zM267 477h1v1h-1zM267 465h1v1h-1zM267 453h1v1h-1zM267 440h1v1h-1zM267 428h1v1h-1zM267 416h1v1h-1zM267 404h1v1h-1zM267 391h1v1h-1zM267 379h1v1h-1zM267 367h1v1h-1zM267 354h1v1h-1zM267 342h1v1h-1zM267 330h1v1h-1zM267 318h1v1h-1zM267 305h1v1h-1zM267 293h1v1h-1zM267 281h1v1h-1zM267 269h1v1h-1zM267 256h1v1h-1zM267 244h1v1h-1zM267 232h1v1h-1zM267 220h1v1h-1zM267 207h1v1h-1zM267 195h1v1h-1zM267 183h1v1h-1zM267 170h1v1h-1zM267 158h1v1h-1zM280 722h1v1h-1zM280 710h1v1h-1zM280 698h1v1h-1zM280 686h1v1h-1zM280 673h1v1h-1zM280 661h1v1h-1zM280 649h1v1h-1zM280 637h1v1h-1zM280 624h1v1h-1zM280 612h1v1h-1zM280 600h1v1h-1zM280 588h1v1h-1zM280 575h1v1h-1zM280 563h1v1h-1zM280 551h1v1h-1zM280 538h1v1h-1zM280 526h1v1h-1zM280 514h1v1h-1zM280 502h1v1h-1zM280 489h1v1h-1zM280 477h1v1h-1zM280 465h1v1h-1zM280 453h1v1h-1zM280 440h1v1h-1zM280 428h1v1h-1zM280 416h1v1h-1zM280 404h1v1h-1zM280 391h1v1h-1zM280 379h1v1h-1zM280 367h1v1h-1zM280 354h1v1h-1zM280 342h1v1h-1zM280 330h1v1h-1zM280 318h1v1h-1zM280 305h1v1h-1zM280 293h1v1h-1zM280 281h1v1h-1zM280 269h1v1h-1zM280 256h1v1h-1zM280 244h1v1h-1zM280 232h1v1h-1zM280 220h1v1h-1zM280 207h1v1h-1zM280 195h1v1h-1zM280 183h1v1h-1zM280 170h1v1h-1zM280 158h1v1h-1zM292 722h1v1h-1zM292 710h1v1h-1zM292 698h1v1h-1zM292 686h1v1h-1zM292 673h1v1h-1zM292 661h1v1h-1zM292 649h1v1h-1zM292 637h1v1h-1zM292 624h1v1h-1zM292 612h1v1h-1zM292 600h1v1h-1zM292 588h1v1h-1zM292 575h1v1h-1zM292 563h1v1h-1zM292 551h1v1h-1zM292 538h1v1h-1zM292 526h1v1h-1zM292 514h1v1h-1zM292 502h1v1h-1zM292 489h1v1h-1zM292 477h1v1h-1zM292 465h1v1h-1zM292 453h1v1h-1zM292 440h1v1h-1zM292 428h1v1h-1zM292 416h1v1h-1zM292 404h1v1h-1zM292 391h1v1h-1zM292 379h1v1h-1zM292 367h1v1h-1zM292 354h1v1h-1zM292 342h1v1h-1zM292 330h1v1h-1zM292 318h1v1h-1zM292 305h1v1h-1zM292 293h1v1h-1zM292 281h1v1h-1zM292 269h1v1h-1zM292 256h1v1h-1zM292 244h1v1h-1zM292 232h1v1h-1zM292 220h1v1h-1zM292 207h1v1h-1zM292 195h1v1h-1zM292 183h1v1h-1zM292 170h1v1h-1zM292 158h1v1h-1zM304 722h1v1h-1zM304 710h1v1h-1zM304 698h1v1h-1zM304 686h1v1h-1zM304 673h1v1h-1zM304 661h1v1h-1zM304 649h1v1h-1zM304 637h1v1h-1zM304 624h1v1h-1zM304 612h1v1h-1zM304 600h1v1h-1zM304 588h1v1h-1zM304 575h1v1h-1zM304 563h1v1h-1zM304 551h1v1h-1zM304 538h1v1h-1zM304 526h1v1h-1zM304 514h1v1h-1zM304 502h1v1h-1zM304 489h1v1h-1zM304 477h1v1h-1zM304 465h1v1h-1zM304 453h1v1h-1zM304 440h1v1h-1zM304 428h1v1h-1zM304 416h1v1h-1zM304 404h1v1h-1zM304 391h1v1h-1zM304 379h1v1h-1zM304 367h1v1h-1zM304 354h1v1h-1zM304 342h1v1h-1zM304 330h1v1h-1zM304 318h1v1h-1zM304 305h1v1h-1zM304 293h1v1h-1zM304 281h1v1h-1zM304 269h1v1h-1zM304 256h1v1h-1zM304 244h1v1h-1zM304 232h1v1h-1zM304 220h1v1h-1zM304 207h1v1h-1zM304 195h1v1h-1zM304 183h1v1h-1zM304 170h1v1h-1zM304 158h1v1h-1zM316 722h1v1h-1zM316 710h1v1h-1zM316 698h1v1h-1zM316 686h1v1h-1zM316 673h1v1h-1zM316 661h1v1h-1zM316 649h1v1h-1zM316 637h1v1h-1zM316 624h1v1h-1zM316 612h1v1h-1zM316 600h1v1h-1zM316 588h1v1h-1zM316 575h1v1h-1zM316 563h1v1h-1zM316 551h1v1h-1zM316 538h1v1h-1zM316 526h1v1h-1zM316 514h1v1h-1zM316 502h1v1h-1zM316 489h1v1h-1zM316 477h1v1h-1zM316 465h1v1h-1zM316 453h1v1h-1zM316 440h1v1h-1zM316 428h1v1h-1zM316 416h1v1h-1zM316 404h1v1h-1zM316 391h1v1h-1zM316 379h1v1h-1zM316 367h1v1h-1zM316 354h1v1h-1zM316 342h1v1h-1zM316 330h1v1h-1zM316 318h1v1h-1zM316 305h1v1h-1zM316 293h1v1h-1zM316 281h1v1h-1zM316 269h1v1h-1zM316 256h1v1h-1zM316 244h1v1h-1zM316 232h1v1h-1zM316 220h1v1h-1zM316 207h1v1h-1zM316 195h1v1h-1zM316 183h1v1h-1zM316 170h1v1h-1zM316 158h1v1h-1zM329 722h1v1h-1zM329 710h1v1h-1zM329 698h1v1h-1zM329 686h1v1h-1zM329 673h1v1h-1zM329 661h1v1h-1zM329 649h1v1h-1zM329 637h1v1h-1zM329 624h1v1h-1zM329 612h1v1h-1zM329 600h1v1h-1zM329 588h1v1h-1zM329 575h1v1h-1zM329 563h1v1h-1zM329 551h1v1h-1zM329 538h1v1h-1zM329 526h1v1h-1zM329 514h1v1h-1zM329 502h1v1h-1zM329 489h1v1h-1zM329 477h1v1h-1zM329 465h1v1h-1zM329 453h1v1h-1zM329 440h1v1h-1zM329 428h1v1h-1zM329 416h1v1h-1zM329 404h1v1h-1zM329 391h1v1h-1zM329 379h1v1h-1zM329 367h1v1h-1zM329 354h1v1h-1zM329 342h1v1h-1zM329 330h1v1h-1zM329 318h1v1h-1zM329 305h1v1h-1zM329 293h1v1h-1zM329 281h1v1h-1zM329 269h1v1h-1zM329 256h1v1h-1zM329 244h1v1h-1zM329 232h1v1h-1zM329 220h1v1h-1zM329 207h1v1h-1zM329 195h1v1h-1zM329 183h1v1h-1zM329 170h1v1h-1zM329 158h1v1h-1zM341 722h1v1h-1zM341 710h1v1h-1zM341 698h1v1h-1zM341 686h1v1h-1zM341 673h1v1h-1zM341 661h1v1h-1zM341 649h1v1h-1zM341 637h1v1h-1zM341 624h1v1h-1zM341 612h1v1h-1zM341 600h1v1h-1zM341 588h1v1h-1zM341 575h1v1h-1zM341 563h1v1h-1zM341 551h1v1h-1zM341 538h1v1h-1zM341 526h1v1h-1zM341 514h1v1h-1zM341 502h1v1h-1zM341 489h1v1h-1zM341 477h1v1h-1zM341 465h1v1h-1zM341 453h1v1h-1zM341 440h1v1h-1zM341 428h1v1h-1zM341 416h1v1h-1zM341 404h1v1h-1zM341 391h1v1h-1zM341 379h1v1h-1zM341 367h1v1h-1zM341 354h1v1h-1zM341 342h1v1h-1zM341 330h1v1h-1zM341 318h1v1h-1zM341 305h1v1h-1zM341 293h1v1h-1zM341 281h1v1h-1zM341 269h1v1h-1zM341 256h1v1h-1zM341 244h1v1h-1zM341 232h1v1h-1zM341 220h1v1h-1zM341 207h1v1h-1zM341 195h1v1h-1zM341 183h1v1h-1zM341 170h1v1h-1zM341 158h1v1h-1zM353 722h1v1h-1zM353 710h1v1h-1zM353 698h1v1h-1zM353 686h1v1h-1zM353 673h1v1h-1zM353 661h1v1h-1zM353 649h1v1h-1zM353 637h1v1h-1zM353 624h1v1h-1zM353 612h1v1h-1zM353 600h1v1h-1zM353 588h1v1h-1zM353 575h1v1h-1zM353 563h1v1h-1zM353 551h1v1h-1zM353 538h1v1h-1zM353 526h1v1h-1zM353 514h1v1h-1zM353 502h1v1h-1zM353 489h1v1h-1zM353 477h1v1h-1zM353 465h1v1h-1zM353 453h1v1h-1zM353 440h1v1h-1zM353 428h1v1h-1zM353 416h1v1h-1zM353 404h1v1h-1zM353 391h1v1h-1zM353 379h1v1h-1zM353 367h1v1h-1zM353 354h1v1h-1zM353 342h1v1h-1zM353 330h1v1h-1zM353 318h1v1h-1zM353 305h1v1h-1zM353 293h1v1h-1zM353 281h1v1h-1zM353 269h1v1h-1zM353 256h1v1h-1zM353 244h1v1h-1zM353 232h1v1h-1zM353 220h1v1h-1zM353 207h1v1h-1zM353 195h1v1h-1zM353 183h1v1h-1zM353 170h1v1h-1zM353 158h1v1h-1zM365 722h1v1h-1zM365 710h1v1h-1zM365 698h1v1h-1zM365 686h1v1h-1zM365 673h1v1h-1zM365 661h1v1h-1zM365 649h1v1h-1zM365 637h1v1h-1zM365 624h1v1h-1zM365 612h1v1h-1zM365 600h1v1h-1zM365 588h1v1h-1zM365 575h1v1h-1zM365 563h1v1h-1zM365 551h1v1h-1zM365 538h1v1h-1zM365 526h1v1h-1zM365 514h1v1h-1zM365 502h1v1h-1zM365 489h1v1h-1zM365 477h1v1h-1zM365 465h1v1h-1zM365 453h1v1h-1zM365 440h1v1h-1zM365 428h1v1h-1zM365 416h1v1h-1zM365 404h1v1h-1zM365 391h1v1h-1zM365 379h1v1h-1zM365 367h1v1h-1zM365 354h1v1h-1zM365 342h1v1h-1zM365 330h1v1h-1zM365 318h1v1h-1zM365 305h1v1h-1zM365 293h1v1h-1zM365 281h1v1h-1zM365 269h1v1h-1zM365 256h1v1h-1zM365 244h1v1h-1zM365 232h1v1h-1zM365 220h1v1h-1zM365 207h1v1h-1zM365 195h1v1h-1zM365 183h1v1h-1zM365 170h1v1h-1zM365 158h1v1h-1zM378 722h1v1h-1zM378 710h1v1h-1zM378 698h1v1h-1zM378 686h1v1h-1zM378 673h1v1h-1zM378 661h1v1h-1zM378 649h1v1h-1zM378 637h1v1h-1zM378 624h1v1h-1zM378 612h1v1h-1zM378 600h1v1h-1zM378 588h1v1h-1zM378 575h1v1h-1zM378 563h1v1h-1zM378 551h1v1h-1zM378 538h1v1h-1zM378 526h1v1h-1zM378 514h1v1h-1zM378 502h1v1h-1zM378 489h1v1h-1zM378 477h1v1h-1zM378 465h1v1h-1zM378 453h1v1h-1zM378 440h1v1h-1zM378 428h1v1h-1zM378 416h1v1h-1zM378 404h1v1h-1zM378 391h1v1h-1zM378 379h1v1h-1zM378 367h1v1h-1zM378 354h1v1h-1zM378 342h1v1h-1zM378 330h1v1h-1zM378 318h1v1h-1zM378 305h1v1h-1zM378 293h1v1h-1zM378 281h1v1h-1zM378 269h1v1h-1zM378 256h1v1h-1zM378 244h1v1h-1zM378 232h1v1h-1zM378 220h1v1h-1zM378 207h1v1h-1zM378 195h1v1h-1zM378 183h1v1h-1zM378 170h1v1h-1zM378 158h1v1h-1zM390 722h1v1h-1zM390 710h1v1h-1zM390 698h1v1h-1zM390 686h1v1h-1zM390 673h1v1h-1zM390 661h1v1h-1zM390 649h1v1h-1zM390 637h1v1h-1zM390 624h1v1h-1zM390 612h1v1h-1zM390 600h1v1h-1zM390 588h1v1h-1zM390 575h1v1h-1zM390 563h1v1h-1zM390 551h1v1h-1zM390 538h1v1h-1zM390 526h1v1h-1zM390 514h1v1h-1zM390 502h1v1h-1zM390 489h1v1h-1zM390 477h1v1h-1zM390 465h1v1h-1zM390 453h1v1h-1zM390 440h1v1h-1zM390 428h1v1h-1zM390 416h1v1h-1zM390 404h1v1h-1zM390 391h1v1h-1zM390 379h1v1h-1zM390 367h1v1h-1zM390 354h1v1h-1zM390 342h1v1h-1zM390 330h1v1h-1zM390 318h1v1h-1zM390 305h1v1h-1zM390 293h1v1h-1zM390 281h1v1h-1zM390 269h1v1h-1zM390 256h1v1h-1zM390 244h1v1h-1zM390 232h1v1h-1zM390 220h1v1h-1zM390 207h1v1h-1zM390 195h1v1h-1zM390 183h1v1h-1zM390 170h1v1h-1zM390 158h1v1h-1zM402 722h1v1h-1zM402 710h1v1h-1zM402 698h1v1h-1zM402 686h1v1h-1zM402 673h1v1h-1zM402 661h1v1h-1zM402 649h1v1h-1zM402 637h1v1h-1zM402 624h1v1h-1zM402 612h1v1h-1zM402 600h1v1h-1zM402 588h1v1h-1zM402 575h1v1h-1zM402 563h1v1h-1zM402 551h1v1h-1zM402 538h1v1h-1zM402 526h1v1h-1zM402 514h1v1h-1zM402 502h1v1h-1zM402 489h1v1h-1zM402 477h1v1h-1zM402 465h1v1h-1zM402 453h1v1h-1zM402 440h1v1h-1zM402 428h1v1h-1zM402 416h1v1h-1zM402 404h1v1h-1zM402 391h1v1h-1zM402 379h1v1h-1zM402 367h1v1h-1zM402 354h1v1h-1zM402 342h1v1h-1zM402 330h1v1h-1zM402 318h1v1h-1zM402 305h1v1h-1zM402 293h1v1h-1zM402 281h1v1h-1zM402 269h1v1h-1zM402 256h1v1h-1zM402 244h1v1h-1zM402 232h1v1h-1zM402 220h1v1h-1zM402 207h1v1h-1zM402 195h1v1h-1zM402 183h1v1h-1zM402 170h1v1h-1zM402 158h1v1h-1zM415 722h1v1h-1zM415 710h1v1h-1zM415 698h1v1h-1zM415 686h1v1h-1zM415 673h1v1h-1zM415 661h1v1h-1zM415 649h1v1h-1zM415 637h1v1h-1zM415 624h1v1h-1zM415 612h1v1h-1zM415 600h1v1h-1zM415 588h1v1h-1zM415 575h1v1h-1zM415 563h1v1h-1zM415 551h1v1h-1zM415 538h1v1h-1zM415 526h1v1h-1zM415 514h1v1h-1zM415 502h1v1h-1zM415 489h1v1h-1zM415 477h1v1h-1zM415 465h1v1h-1zM415 453h1v1h-1zM415 440h1v1h-1zM415 428h1v1h-1zM415 416h1v1h-1zM415 404h1v1h-1zM415 391h1v1h-1zM415 379h1v1h-1zM415 367h1v1h-1zM415 354h1v1h-1zM415 342h1v1h-1zM415 330h1v1h-1zM415 318h1v1h-1zM415 305h1v1h-1zM415 293h1v1h-1zM415 281h1v1h-1zM415 269h1v1h-1zM415 256h1v1h-1zM415 244h1v1h-1zM415 232h1v1h-1zM415 220h1v1h-1zM415 207h1v1h-1zM415 195h1v1h-1zM415 183h1v1h-1zM415 170h1v1h-1zM415 158h1v1h-1zM427 722h1v1h-1zM427 710h1v1h-1zM427 698h1v1h-1zM427 686h1v1h-1zM427 673h1v1h-1zM427 661h1v1h-1zM427 649h1v1h-1zM427 637h1v1h-1zM427 624h1v1h-1zM427 612h1v1h-1zM427 600h1v1h-1zM427 588h1v1h-1zM427 575h1v1h-1zM427 563h1v1h-1zM427 551h1v1h-1zM427 538h1v1h-1zM427 526h1v1h-1zM427 514h1v1h-1zM427 502h1v1h-1zM427 489h1v1h-1zM427 477h1v1h-1zM427 465h1v1h-1zM427 453h1v1h-1zM427 440h1v1h-1zM427 428h1v1h-1zM427 416h1v1h-1zM427 404h1v1h-1zM427 391h1v1h-1zM427 379h1v1h-1zM427 367h1v1h-1zM427 354h1v1h-1zM427 342h1v1h-1zM427 330h1v1h-1zM427 318h1v1h-1zM427 305h1v1h-1zM427 293h1v1h-1zM427 281h1v1h-1zM427 269h1v1h-1zM427 256h1v1h-1zM427 244h1v1h-1zM427 232h1v1h-1zM427 220h1v1h-1zM427 207h1v1h-1zM427 195h1v1h-1zM427 183h1v1h-1zM427 170h1v1h-1zM427 158h1v1h-1zM439 722h1v1h-1zM439 710h1v1h-1zM439 698h1v1h-1zM439 686h1v1h-1zM439 673h1v1h-1zM439 661h1v1h-1zM439 649h1v1h-1zM439 637h1v1h-1zM439 624h1v1h-1zM439 612h1v1h-1zM439 600h1v1h-1zM439 588h1v1h-1zM439 575h1v1h-1zM439 563h1v1h-1zM439 551h1v1h-1zM439 538h1v1h-1zM439 526h1v1h-1zM439 514h1v1h-1zM439 502h1v1h-1zM439 489h1v1h-1zM439 477h1v1h-1zM439 465h1v1h-1zM439 453h1v1h-1zM439 440h1v1h-1zM439 428h1v1h-1zM439 416h1v1h-1zM439 404h1v1h-1zM439 391h1v1h-1zM439 379h1v1h-1zM439 367h1v1h-1zM439 354h1v1h-1zM439 342h1v1h-1zM439 330h1v1h-1zM439 318h1v1h-1zM439 305h1v1h-1zM439 293h1v1h-1zM439 281h1v1h-1zM439 269h1v1h-1zM439 256h1v1h-1zM439 244h1v1h-1zM439 232h1v1h-1zM439 220h1v1h-1zM439 207h1v1h-1zM439 195h1v1h-1zM439 183h1v1h-1zM439 170h1v1h-1zM439 158h1v1h-1zM451 722h1v1h-1zM451 710h1v1h-1zM451 698h1v1h-1zM451 686h1v1h-1zM451 673h1v1h-1zM451 661h1v1h-1zM451 649h1v1h-1zM451 637h1v1h-1zM451 624h1v1h-1zM451 612h1v1h-1zM451 600h1v1h-1zM451 588h1v1h-1zM451 575h1v1h-1zM451 563h1v1h-1zM451 551h1v1h-1zM451 538h1v1h-1zM451 526h1v1h-1zM451 514h1v1h-1zM451 502h1v1h-1zM451 489h1v1h-1zM451 477h1v1h-1zM451 465h1v1h-1zM451 453h1v1h-1zM451 440h1v1h-1zM451 428h1v1h-1zM451 416h1v1h-1zM451 404h1v1h-1zM451 391h1v1h-1zM451 379h1v1h-1zM451 367h1v1h-1zM451 354h1v1h-1zM451 342h1v1h-1zM451 330h1v1h-1zM451 318h1v1h-1zM451 305h1v1h-1zM451 293h1v1h-1zM451 281h1v1h-1zM451 269h1v1h-1zM451 256h1v1h-1zM451 244h1v1h-1zM451 232h1v1h-1zM451 220h1v1h-1zM451 207h1v1h-1zM451 195h1v1h-1zM451 183h1v1h-1zM451 170h1v1h-1zM451 158h1v1h-1zM464 722h1v1h-1zM464 710h1v1h-1zM464 698h1v1h-1zM464 686h1v1h-1zM464 673h1v1h-1zM464 661h1v1h-1zM464 649h1v1h-1zM464 637h1v1h-1zM464 624h1v1h-1zM464 612h1v1h-1zM464 600h1v1h-1zM464 588h1v1h-1zM464 575h1v1h-1zM464 563h1v1h-1zM464 551h1v1h-1zM464 538h1v1h-1zM464 526h1v1h-1zM464 514h1v1h-1zM464 502h1v1h-1zM464 489h1v1h-1zM464 477h1v1h-1zM464 465h1v1h-1zM464 453h1v1h-1zM464 440h1v1h-1zM464 428h1v1h-1zM464 416h1v1h-1zM464 404h1v1h-1zM464 391h1v1h-1zM464 379h1v1h-1zM464 367h1v1h-1zM464 354h1v1h-1zM464 342h1v1h-1zM464 330h1v1h-1zM464 318h1v1h-1zM464 305h1v1h-1zM464 293h1v1h-1zM464 281h1v1h-1zM464 269h1v1h-1zM464 256h1v1h-1zM464 244h1v1h-1zM464 232h1v1h-1zM464 220h1v1h-1zM464 207h1v1h-1zM464 195h1v1h-1zM464 183h1v1h-1zM464 170h1v1h-1zM464 158h1v1h-1zM476 722h1v1h-1zM476 710h1v1h-1zM476 698h1v1h-1zM476 686h1v1h-1zM476 673h1v1h-1zM476 661h1v1h-1zM476 649h1v1h-1zM476 637h1v1h-1zM476 624h1v1h-1zM476 612h1v1h-1zM476 600h1v1h-1zM476 588h1v1h-1zM476 575h1v1h-1zM476 563h1v1h-1zM476 551h1v1h-1zM476 538h1v1h-1zM476 526h1v1h-1zM476 514h1v1h-1zM476 502h1v1h-1zM476 489h1v1h-1zM476 477h1v1h-1zM476 465h1v1h-1zM476 453h1v1h-1zM476 440h1v1h-1zM476 428h1v1h-1zM476 416h1v1h-1zM476 404h1v1h-1zM476 391h1v1h-1zM476 379h1v1h-1zM476 367h1v1h-1zM476 354h1v1h-1zM476 342h1v1h-1zM476 330h1v1h-1zM476 318h1v1h-1zM476 305h1v1h-1zM476 293h1v1h-1zM476 281h1v1h-1zM476 269h1v1h-1zM476 256h1v1h-1zM476 244h1v1h-1zM476 232h1v1h-1zM476 220h1v1h-1zM476 207h1v1h-1zM476 195h1v1h-1zM476 183h1v1h-1zM476 170h1v1h-1zM476 158h1v1h-1zM488 722h1v1h-1zM488 710h1v1h-1zM488 698h1v1h-1zM488 686h1v1h-1zM488 673h1v1h-1zM488 661h1v1h-1zM488 649h1v1h-1zM488 637h1v1h-1zM488 624h1v1h-1zM488 612h1v1h-1zM488 600h1v1h-1zM488 588h1v1h-1zM488 575h1v1h-1zM488 563h1v1h-1zM488 551h1v1h-1zM488 538h1v1h-1zM488 526h1v1h-1zM488 514h1v1h-1zM488 502h1v1h-1zM488 489h1v1h-1zM488 477h1v1h-1zM488 465h1v1h-1zM488 453h1v1h-1zM488 440h1v1h-1zM488 428h1v1h-1zM488 416h1v1h-1zM488 404h1v1h-1zM488 391h1v1h-1zM488 379h1v1h-1zM488 367h1v1h-1zM488 354h1v1h-1zM488 342h1v1h-1zM488 330h1v1h-1zM488 318h1v1h-1zM488 305h1v1h-1zM488 293h1v1h-1zM488 281h1v1h-1zM488 269h1v1h-1zM488 256h1v1h-1zM488 244h1v1h-1zM488 232h1v1h-1zM488 220h1v1h-1zM488 207h1v1h-1zM488 195h1v1h-1zM488 183h1v1h-1zM488 170h1v1h-1zM488 158h1v1h-1zM500 722h1v1h-1zM500 710h1v1h-1zM500 698h1v1h-1zM500 686h1v1h-1zM500 673h1v1h-1zM500 661h1v1h-1zM500 649h1v1h-1zM500 637h1v1h-1zM500 624h1v1h-1zM500 612h1v1h-1zM500 600h1v1h-1zM500 588h1v1h-1zM500 575h1v1h-1zM500 563h1v1h-1zM500 551h1v1h-1zM500 538h1v1h-1zM500 526h1v1h-1zM500 514h1v1h-1zM500 502h1v1h-1zM500 489h1v1h-1zM500 477h1v1h-1zM500 465h1v1h-1zM500 453h1v1h-1zM500 440h1v1h-1zM500 428h1v1h-1zM500 416h1v1h-1zM500 404h1v1h-1zM500 391h1v1h-1zM500 379h1v1h-1zM500 367h1v1h-1zM500 354h1v1h-1zM500 342h1v1h-1zM500 330h1v1h-1zM500 318h1v1h-1zM500 305h1v1h-1zM500 293h1v1h-1zM500 281h1v1h-1zM500 269h1v1h-1zM500 256h1v1h-1zM500 244h1v1h-1zM500 232h1v1h-1zM500 220h1v1h-1zM500 207h1v1h-1zM500 195h1v1h-1zM500 183h1v1h-1zM500 170h1v1h-1zM500 158h1v1h-1zM513 722h1v1h-1zM513 710h1v1h-1zM513 698h1v1h-1zM513 686h1v1h-1zM513 673h1v1h-1zM513 661h1v1h-1zM513 649h1v1h-1zM513 637h1v1h-1zM513 624h1v1h-1zM513 612h1v1h-1zM513 600h1v1h-1zM513 588h1v1h-1zM513 575h1v1h-1zM513 563h1v1h-1zM513 551h1v1h-1zM513 538h1v1h-1zM513 526h1v1h-1zM513 514h1v1h-1zM513 502h1v1h-1zM513 489h1v1h-1zM513 477h1v1h-1zM513 465h1v1h-1zM513 453h1v1h-1zM513 440h1v1h-1zM513 428h1v1h-1zM513 416h1v1h-1zM513 404h1v1h-1zM513 391h1v1h-1zM513 379h1v1h-1zM513 367h1v1h-1zM513 354h1v1h-1zM513 342h1v1h-1zM513 330h1v1h-1zM513 318h1v1h-1zM513 305h1v1h-1zM513 293h1v1h-1zM513 281h1v1h-1zM513 269h1v1h-1zM513 256h1v1h-1zM513 244h1v1h-1zM513 232h1v1h-1zM513 220h1v1h-1zM513 207h1v1h-1zM513 195h1v1h-1zM513 183h1v1h-1zM513 170h1v1h-1zM513 158h1v1h-1zM525 722h1v1h-1zM525 710h1v1h-1zM525 698h1v1h-1zM525 686h1v1h-1zM525 673h1v1h-1zM525 661h1v1h-1zM525 649h1v1h-1zM525 637h1v1h-1zM525 624h1v1h-1zM525 612h1v1h-1zM525 600h1v1h-1zM525 588h1v1h-1zM525 575h1v1h-1zM525 563h1v1h-1zM525 551h1v1h-1zM525 538h1v1h-1zM525 526h1v1h-1zM525 514h1v1h-1zM525 502h1v1h-1zM525 489h1v1h-1zM525 477h1v1h-1zM525 465h1v1h-1zM525 453h1v1h-1zM525 440h1v1h-1zM525 428h1v1h-1zM525 416h1v1h-1zM525 404h1v1h-1zM525 391h1v1h-1zM525 379h1v1h-1zM525 367h1v1h-1zM525 354h1v1h-1zM525 342h1v1h-1zM525 330h1v1h-1zM525 318h1v1h-1zM525 305h1v1h-1zM525 293h1v1h-1zM525 281h1v1h-1zM525 269h1v1h-1zM525 256h1v1h-1zM525 244h1v1h-1zM525 232h1v1h-1zM525 220h1v1h-1zM525 207h1v1h-1zM525 195h1v1h-1zM525 183h1v1h-1zM525 170h1v1h-1zM525 158h1v1h-1zM537 722h1v1h-1zM537 710h1v1h-1zM537 698h1v1h-1zM537 686h1v1h-1zM537 673h1v1h-1zM537 661h1v1h-1zM537 649h1v1h-1zM537 637h1v1h-1zM537 624h1v1h-1zM537 612h1v1h-1zM537 600h1v1h-1zM537 588h1v1h-1zM537 575h1v1h-1zM537 563h1v1h-1zM537 551h1v1h-1zM537 538h1v1h-1zM537 526h1v1h-1zM537 514h1v1h-1zM537 502h1v1h-1zM537 489h1v1h-1zM537 477h1v1h-1zM537 465h1v1h-1zM537 453h1v1h-1zM537 440h1v1h-1zM537 428h1v1h-1zM537 416h1v1h-1zM537 404h1v1h-1zM537 391h1v1h-1zM537 379h1v1h-1zM537 367h1v1h-1zM537 354h1v1h-1zM537 342h1v1h-1zM537 330h1v1h-1zM537 318h1v1h-1zM537 305h1v1h-1zM537 293h1v1h-1zM537 281h1v1h-1zM537 269h1v1h-1zM537 256h1v1h-1zM537 244h1v1h-1zM537 232h1v1h-1zM537 220h1v1h-1zM537 207h1v1h-1zM537 195h1v1h-1zM537 183h1v1h-1zM537 170h1v1h-1zM537 158h1v1h-1zM550 722h1v1h-1zM550 710h1v1h-1zM550 698h1v1h-1zM550 686h1v1h-1zM550 673h1v1h-1zM550 661h1v1h-1zM550 649h1v1h-1zM550 637h1v1h-1zM550 624h1v1h-1zM550 612h1v1h-1zM550 600h1v1h-1zM550 588h1v1h-1zM550 575h1v1h-1zM550 563h1v1h-1zM550 551h1v1h-1zM550 538h1v1h-1zM550 526h1v1h-1zM550 514h1v1h-1zM550 502h1v1h-1zM550 489h1v1h-1zM550 477h1v1h-1zM550 465h1v1h-1zM550 453h1v1h-1zM550 440h1v1h-1zM550 428h1v1h-1zM550 416h1v1h-1zM550 404h1v1h-1zM550 391h1v1h-1zM550 379h1v1h-1zM550 367h1v1h-1zM550 354h1v1h-1zM550 342h1v1h-1zM550 330h1v1h-1zM550 318h1v1h-1zM550 305h1v1h-1zM550 293h1v1h-1zM550 281h1v1h-1zM550 269h1v1h-1zM550 256h1v1h-1zM550 244h1v1h-1zM550 232h1v1h-1zM550 220h1v1h-1zM550 207h1v1h-1zM550 195h1v1h-1zM550 183h1v1h-1zM550 170h1v1h-1zM550 158h1v1h-1zM562 722h1v1h-1zM562 710h1v1h-1zM562 698h1v1h-1zM562 686h1v1h-1zM562 673h1v1h-1zM562 661h1v1h-1zM562 649h1v1h-1zM562 637h1v1h-1zM562 624h1v1h-1zM562 612h1v1h-1zM562 600h1v1h-1zM562 588h1v1h-1zM562 575h1v1h-1zM562 563h1v1h-1zM562 551h1v1h-1zM562 538h1v1h-1zM562 526h1v1h-1zM562 514h1v1h-1zM562 502h1v1h-1zM562 489h1v1h-1zM562 477h1v1h-1zM562 465h1v1h-1zM562 453h1v1h-1zM562 440h1v1h-1zM562 428h1v1h-1zM562 416h1v1h-1zM562 404h1v1h-1zM562 391h1v1h-1zM562 379h1v1h-1zM562 367h1v1h-1zM562 354h1v1h-1zM562 342h1v1h-1zM562 330h1v1h-1zM562 318h1v1h-1zM562 305h1v1h-1zM562 293h1v1h-1zM562 281h1v1h-1zM562 269h1v1h-1zM562 256h1v1h-1zM562 244h1v1h-1zM562 232h1v1h-1zM562 220h1v1h-1zM562 207h1v1h-1zM562 195h1v1h-1zM562 183h1v1h-1zM562 170h1v1h-1zM562 158h1v1h-1zM574 722h1v1h-1zM574 710h1v1h-1zM574 698h1v1h-1zM574 686h1v1h-1zM574 673h1v1h-1zM574 661h1v1h-1zM574 649h1v1h-1zM574 637h1v1h-1zM574 624h1v1h-1zM574 612h1v1h-1zM574 600h1v1h-1zM574 588h1v1h-1zM574 575h1v1h-1zM574 563h1v1h-1zM574 551h1v1h-1zM574 538h1v1h-1zM574 526h1v1h-1zM574 514h1v1h-1zM574 502h1v1h-1zM574 489h1v1h-1zM574 477h1v1h-1zM574 465h1v1h-1zM574 453h1v1h-1zM574 440h1v1h-1zM574 428h1v1h-1zM574 416h1v1h-1zM574 404h1v1h-1zM574 391h1v1h-1zM574 379h1v1h-1zM574 367h1v1h-1zM574 354h1v1h-1zM574 342h1v1h-1zM574 330h1v1h-1zM574 318h1v1h-1zM574 305h1v1h-1zM574 293h1v1h-1zM574 281h1v1h-1zM574 269h1v1h-1zM574 256h1v1h-1zM574 244h1v1h-1zM574 232h1v1h-1zM574 220h1v1h-1zM574 207h1v1h-1zM574 195h1v1h-1zM574 183h1v1h-1zM574 170h1v1h-1zM574 158h1v1h-1zM586 722h1v1h-1zM586 710h1v1h-1zM586 698h1v1h-1zM586 686h1v1h-1zM586 673h1v1h-1zM586 661h1v1h-1zM586 649h1v1h-1zM586 637h1v1h-1zM586 624h1v1h-1zM586 612h1v1h-1zM586 600h1v1h-1zM586 588h1v1h-1zM586 575h1v1h-1zM586 563h1v1h-1zM586 551h1v1h-1zM586 538h1v1h-1zM586 526h1v1h-1zM586 514h1v1h-1zM586 502h1v1h-1zM586 489h1v1h-1zM586 477h1v1h-1zM586 465h1v1h-1zM586 453h1v1h-1zM586 440h1v1h-1zM586 428h1v1h-1zM586 416h1v1h-1zM586 404h1v1h-1zM586 391h1v1h-1zM586 379h1v1h-1zM586 367h1v1h-1zM586 354h1v1h-1zM586 342h1v1h-1zM586 330h1v1h-1zM586 318h1v1h-1zM586 305h1v1h-1zM586 293h1v1h-1zM586 281h1v1h-1zM586 269h1v1h-1zM586 256h1v1h-1zM586 244h1v1h-1zM586 232h1v1h-1zM586 220h1v1h-1zM586 207h1v1h-1zM586 195h1v1h-1zM586 183h1v1h-1zM586 170h1v1h-1zM586 158h1v1h-1zM599 722h1v1h-1zM599 710h1v1h-1zM599 698h1v1h-1zM599 686h1v1h-1zM599 673h1v1h-1zM599 661h1v1h-1zM599 649h1v1h-1zM599 637h1v1h-1zM599 624h1v1h-1zM599 612h1v1h-1zM599 600h1v1h-1zM599 588h1v1h-1zM599 575h1v1h-1zM599 563h1v1h-1zM599 551h1v1h-1zM599 538h1v1h-1zM599 526h1v1h-1zM599 514h1v1h-1zM599 502h1v1h-1zM599 489h1v1h-1zM599 477h1v1h-1zM599 465h1v1h-1zM599 453h1v1h-1zM599 440h1v1h-1zM599 428h1v1h-1zM599 416h1v1h-1zM599 404h1v1h-1zM599 391h1v1h-1zM599 379h1v1h-1zM599 367h1v1h-1zM599 354h1v1h-1zM599 342h1v1h-1zM599 330h1v1h-1zM599 318h1v1h-1zM599 305h1v1h-1zM599 293h1v1h-1zM599 281h1v1h-1zM599 269h1v1h-1zM599 256h1v1h-1zM599 244h1v1h-1zM599 232h1v1h-1zM599 220h1v1h-1zM599 207h1v1h-1zM599 195h1v1h-1zM599 183h1v1h-1zM599 170h1v1h-1zM599 158h1v1h-1zM611 722h1v1h-1zM611 710h1v1h-1zM611 698h1v1h-1zM611 686h1v1h-1zM611 673h1v1h-1zM611 661h1v1h-1zM611 649h1v1h-1zM611 637h1v1h-1zM611 624h1v1h-1zM611 612h1v1h-1zM611 600h1v1h-1zM611 588h1v1h-1zM611 575h1v1h-1zM611 563h1v1h-1zM611 551h1v1h-1zM611 538h1v1h-1zM611 526h1v1h-1zM611 514h1v1h-1zM611 502h1v1h-1zM611 489h1v1h-1zM611 477h1v1h-1zM611 465h1v1h-1zM611 453h1v1h-1zM611 440h1v1h-1zM611 428h1v1h-1zM611 416h1v1h-1zM611 404h1v1h-1zM611 391h1v1h-1zM611 379h1v1h-1zM611 367h1v1h-1zM611 354h1v1h-1zM611 342h1v1h-1zM611 330h1v1h-1zM611 318h1v1h-1zM611 305h1v1h-1zM611 293h1v1h-1zM611 281h1v1h-1zM611 269h1v1h-1zM611 256h1v1h-1zM611 244h1v1h-1zM611 232h1v1h-1zM611 220h1v1h-1zM611 207h1v1h-1zM611 195h1v1h-1zM611 183h1v1h-1zM611 170h1v1h-1zM611 158h1v1h-1zM623 722h1v1h-1zM623 710h1v1h-1zM623 698h1v1h-1zM623 686h1v1h-1zM623 673h1v1h-1zM623 661h1v1h-1zM623 649h1v1h-1zM623 637h1v1h-1zM623 624h1v1h-1zM623 612h1v1h-1zM623 600h1v1h-1zM623 588h1v1h-1zM623 575h1v1h-1zM623 563h1v1h-1zM623 551h1v1h-1zM623 538h1v1h-1zM623 526h1v1h-1zM623 514h1v1h-1zM623 502h1v1h-1zM623 489h1v1h-1zM623 477h1v1h-1zM623 465h1v1h-1zM623 453h1v1h-1zM623 440h1v1h-1zM623 428h1v1h-1zM623 416h1v1h-1zM623 404h1v1h-1zM623 391h1v1h-1zM623 379h1v1h-1zM623 367h1v1h-1zM623 354h1v1h-1zM623 342h1v1h-1zM623 330h1v1h-1zM623 318h1v1h-1zM623 305h1v1h-1zM623 293h1v1h-1zM623 281h1v1h-1zM623 269h1v1h-1zM623 256h1v1h-1zM623 244h1v1h-1zM623 232h1v1h-1zM623 220h1v1h-1zM623 207h1v1h-1zM623 195h1v1h-1zM623 183h1v1h-1zM623 170h1v1h-1zM623 158h1v1h-1zM635 722h1v1h-1zM635 710h1v1h-1zM635 698h1v1h-1zM635 686h1v1h-1zM635 673h1v1h-1zM635 661h1v1h-1zM635 649h1v1h-1zM635 637h1v1h-1zM635 624h1v1h-1zM635 612h1v1h-1zM635 600h1v1h-1zM635 588h1v1h-1zM635 575h1v1h-1zM635 563h1v1h-1zM635 551h1v1h-1zM635 538h1v1h-1zM635 526h1v1h-1zM635 514h1v1h-1zM635 502h1v1h-1zM635 489h1v1h-1zM635 477h1v1h-1zM635 465h1v1h-1zM635 453h1v1h-1zM635 440h1v1h-1zM635 428h1v1h-1zM635 416h1v1h-1zM635 404h1v1h-1zM635 391h1v1h-1zM635 379h1v1h-1zM635 367h1v1h-1zM635 354h1v1h-1zM635 342h1v1h-1zM635 330h1v1h-1zM635 318h1v1h-1zM635 305h1v1h-1zM635 293h1v1h-1zM635 281h1v1h-1zM635 269h1v1h-1zM635 256h1v1h-1zM635 244h1v1h-1zM635 232h1v1h-1zM635 220h1v1h-1zM635 207h1v1h-1zM635 195h1v1h-1zM635 183h1v1h-1zM635 170h1v1h-1zM635 158h1v1h-1zM648 722h1v1h-1zM648 710h1v1h-1zM648 698h1v1h-1zM648 686h1v1h-1zM648 673h1v1h-1zM648 661h1v1h-1zM648 649h1v1h-1zM648 637h1v1h-1zM648 624h1v1h-1zM648 612h1v1h-1zM648 600h1v1h-1zM648 588h1v1h-1zM648 575h1v1h-1zM648 563h1v1h-1zM648 551h1v1h-1zM648 538h1v1h-1zM648 526h1v1h-1zM648 514h1v1h-1zM648 502h1v1h-1zM648 489h1v1h-1zM648 477h1v1h-1zM648 465h1v1h-1zM648 453h1v1h-1zM648 440h1v1h-1zM648 428h1v1h-1zM648 416h1v1h-1zM648 404h1v1h-1zM648 391h1v1h-1zM648 379h1v1h-1zM648 367h1v1h-1zM648 354h1v1h-1zM648 342h1v1h-1zM648 330h1v1h-1zM648 318h1v1h-1zM648 305h1v1h-1zM648 293h1v1h-1zM648 281h1v1h-1zM648 269h1v1h-1zM648 256h1v1h-1zM648 244h1v1h-1zM648 232h1v1h-1zM648 220h1v1h-1zM648 207h1v1h-1zM648 195h1v1h-1zM648 183h1v1h-1zM648 170h1v1h-1zM648 158h1v1h-1zM660 722h1v1h-1zM660 710h1v1h-1zM660 698h1v1h-1zM660 686h1v1h-1zM660 673h1v1h-1zM660 661h1v1h-1zM660 649h1v1h-1zM660 637h1v1h-1zM660 624h1v1h-1zM660 612h1v1h-1zM660 600h1v1h-1zM660 588h1v1h-1zM660 575h1v1h-1zM660 563h1v1h-1zM660 551h1v1h-1zM660 538h1v1h-1zM660 526h1v1h-1zM660 514h1v1h-1zM660 502h1v1h-1zM660 489h1v1h-1zM660 477h1v1h-1zM660 465h1v1h-1zM660 453h1v1h-1zM660 440h1v1h-1zM660 428h1v1h-1zM660 416h1v1h-1zM660 404h1v1h-1zM660 391h1v1h-1zM660 379h1v1h-1zM660 367h1v1h-1zM660 354h1v1h-1zM660 342h1v1h-1zM660 330h1v1h-1zM660 318h1v1h-1zM660 305h1v1h-1zM660 293h1v1h-1zM660 281h1v1h-1zM660 269h1v1h-1zM660 256h1v1h-1zM660 244h1v1h-1zM660 232h1v1h-1zM660 220h1v1h-1zM660 207h1v1h-1zM660 195h1v1h-1zM660 183h1v1h-1zM660 170h1v1h-1zM660 158h1v1h-1zM672 722h1v1h-1zM672 710h1v1h-1zM672 698h1v1h-1zM672 686h1v1h-1zM672 673h1v1h-1zM672 661h1v1h-1zM672 649h1v1h-1zM672 637h1v1h-1zM672 624h1v1h-1zM672 612h1v1h-1zM672 600h1v1h-1zM672 588h1v1h-1zM672 575h1v1h-1zM672 563h1v1h-1zM672 551h1v1h-1zM672 538h1v1h-1zM672 526h1v1h-1zM672 514h1v1h-1zM672 502h1v1h-1zM672 489h1v1h-1zM672 477h1v1h-1zM672 465h1v1h-1zM672 453h1v1h-1zM672 440h1v1h-1zM672 428h1v1h-1zM672 416h1v1h-1zM672 404h1v1h-1zM672 391h1v1h-1zM672 379h1v1h-1zM672 367h1v1h-1zM672 354h1v1h-1zM672 342h1v1h-1zM672 330h1v1h-1zM672 318h1v1h-1zM672 305h1v1h-1zM672 293h1v1h-1zM672 281h1v1h-1zM672 269h1v1h-1zM672 256h1v1h-1zM672 244h1v1h-1zM672 232h1v1h-1zM672 220h1v1h-1zM672 207h1v1h-1zM672 195h1v1h-1zM672 183h1v1h-1zM672 170h1v1h-1zM672 158h1v1h-1zM684 722h1v1h-1zM684 710h1v1h-1zM684 698h1v1h-1zM684 686h1v1h-1zM684 673h1v1h-1zM684 661h1v1h-1zM684 649h1v1h-1zM684 637h1v1h-1zM684 624h1v1h-1zM684 612h1v1h-1zM684 600h1v1h-1zM684 588h1v1h-1zM684 575h1v1h-1zM684 563h1v1h-1zM684 551h1v1h-1zM684 538h1v1h-1zM684 526h1v1h-1zM684 514h1v1h-1zM684 502h1v1h-1zM684 489h1v1h-1zM684 477h1v1h-1zM684 465h1v1h-1zM684 453h1v1h-1zM684 440h1v1h-1zM684 428h1v1h-1zM684 416h1v1h-1zM684 404h1v1h-1zM684 391h1v1h-1zM684 379h1v1h-1zM684 367h1v1h-1zM684 354h1v1h-1zM684 342h1v1h-1zM684 330h1v1h-1zM684 318h1v1h-1zM684 305h1v1h-1zM684 293h1v1h-1zM684 281h1v1h-1zM684 269h1v1h-1zM684 256h1v1h-1zM684 244h1v1h-1zM684 232h1v1h-1zM684 220h1v1h-1zM684 207h1v1h-1zM684 195h1v1h-1zM684 183h1v1h-1zM684 170h1v1h-1zM684 158h1v1h-1zM697 722h1v1h-1zM697 710h1v1h-1zM697 698h1v1h-1zM697 686h1v1h-1zM697 673h1v1h-1zM697 661h1v1h-1zM697 649h1v1h-1zM697 637h1v1h-1zM697 624h1v1h-1zM697 612h1v1h-1zM697 600h1v1h-1zM697 588h1v1h-1zM697 575h1v1h-1zM697 563h1v1h-1zM697 551h1v1h-1zM697 538h1v1h-1zM697 526h1v1h-1zM697 514h1v1h-1zM697 502h1v1h-1zM697 489h1v1h-1zM697 477h1v1h-1zM697 465h1v1h-1zM697 453h1v1h-1zM697 440h1v1h-1zM697 428h1v1h-1zM697 416h1v1h-1zM697 404h1v1h-1zM697 391h1v1h-1zM697 379h1v1h-1zM697 367h1v1h-1zM697 354h1v1h-1zM697 342h1v1h-1zM697 330h1v1h-1zM697 318h1v1h-1zM697 305h1v1h-1zM697 293h1v1h-1zM697 281h1v1h-1zM697 269h1v1h-1zM697 256h1v1h-1zM697 244h1v1h-1zM697 232h1v1h-1zM697 220h1v1h-1zM697 207h1v1h-1zM697 195h1v1h-1zM697 183h1v1h-1zM697 170h1v1h-1zM697 158h1v1h-1zM709 722h1v1h-1zM709 710h1v1h-1zM709 698h1v1h-1zM709 686h1v1h-1zM709 673h1v1h-1zM709 661h1v1h-1zM709 649h1v1h-1zM709 637h1v1h-1zM709 624h1v1h-1zM709 612h1v1h-1zM709 600h1v1h-1zM709 588h1v1h-1zM709 575h1v1h-1zM709 563h1v1h-1zM709 551h1v1h-1zM709 538h1v1h-1zM709 526h1v1h-1zM709 514h1v1h-1zM709 502h1v1h-1zM709 489h1v1h-1zM709 477h1v1h-1zM709 465h1v1h-1zM709 453h1v1h-1zM709 440h1v1h-1zM709 428h1v1h-1zM709 416h1v1h-1zM709 404h1v1h-1zM709 391h1v1h-1zM709 379h1v1h-1zM709 367h1v1h-1zM709 354h1v1h-1zM709 342h1v1h-1zM709 330h1v1h-1zM709 318h1v1h-1zM709 305h1v1h-1zM709 293h1v1h-1zM709 281h1v1h-1zM709 269h1v1h-1zM709 256h1v1h-1zM709 244h1v1h-1zM709 232h1v1h-1zM709 220h1v1h-1zM709 207h1v1h-1zM709 195h1v1h-1zM709 183h1v1h-1zM709 170h1v1h-1zM709 158h1v1h-1zM721 722h1v1h-1zM721 710h1v1h-1zM721 698h1v1h-1zM721 686h1v1h-1zM721 673h1v1h-1zM721 661h1v1h-1zM721 649h1v1h-1zM721 637h1v1h-1zM721 624h1v1h-1zM721 612h1v1h-1zM721 600h1v1h-1zM721 588h1v1h-1zM721 575h1v1h-1zM721 563h1v1h-1zM721 551h1v1h-1zM721 538h1v1h-1zM721 526h1v1h-1zM721 514h1v1h-1zM721 502h1v1h-1zM721 489h1v1h-1zM721 477h1v1h-1zM721 465h1v1h-1zM721 453h1v1h-1zM721 440h1v1h-1zM721 428h1v1h-1zM721 416h1v1h-1zM721 404h1v1h-1zM721 391h1v1h-1zM721 379h1v1h-1zM721 367h1v1h-1zM721 354h1v1h-1zM721 342h1v1h-1zM721 330h1v1h-1zM721 318h1v1h-1zM721 305h1v1h-1zM721 293h1v1h-1zM721 281h1v1h-1zM721 269h1v1h-1zM721 256h1v1h-1zM721 244h1v1h-1zM721 232h1v1h-1zM721 220h1v1h-1zM721 207h1v1h-1zM721 195h1v1h-1zM721 183h1v1h-1zM721 170h1v1h-1zM721 158h1v1h-1zM734 722h1v1h-1zM734 710h1v1h-1zM734 698h1v1h-1zM734 686h1v1h-1zM734 673h1v1h-1zM734 661h1v1h-1zM734 649h1v1h-1zM734 637h1v1h-1zM734 624h1v1h-1zM734 612h1v1h-1zM734 600h1v1h-1zM734 588h1v1h-1zM734 575h1v1h-1zM734 563h1v1h-1zM734 551h1v1h-1zM734 538h1v1h-1zM734 526h1v1h-1zM734 514h1v1h-1zM734 502h1v1h-1zM734 489h1v1h-1zM734 477h1v1h-1zM734 465h1v1h-1zM734 453h1v1h-1zM734 440h1v1h-1zM734 428h1v1h-1zM734 416h1v1h-1zM734 404h1v1h-1zM734 391h1v1h-1zM734 379h1v1h-1zM734 367h1v1h-1zM734 354h1v1h-1zM734 342h1v1h-1zM734 330h1v1h-1zM734 318h1v1h-1zM734 305h1v1h-1zM734 293h1v1h-1zM734 281h1v1h-1zM734 269h1v1h-1zM734 256h1v1h-1zM734 244h1v1h-1zM734 232h1v1h-1zM734 220h1v1h-1zM734 207h1v1h-1zM734 195h1v1h-1zM734 183h1v1h-1zM734 170h1v1h-1zM734 158h1v1h-1zM746 722h1v1h-1zM746 710h1v1h-1zM746 698h1v1h-1zM746 686h1v1h-1zM746 673h1v1h-1zM746 661h1v1h-1zM746 649h1v1h-1zM746 637h1v1h-1zM746 624h1v1h-1zM746 612h1v1h-1zM746 600h1v1h-1zM746 588h1v1h-1zM746 575h1v1h-1zM746 563h1v1h-1zM746 551h1v1h-1zM746 538h1v1h-1zM746 526h1v1h-1zM746 514h1v1h-1zM746 502h1v1h-1zM746 489h1v1h-1zM746 477h1v1h-1zM746 465h1v1h-1zM746 453h1v1h-1zM746 440h1v1h-1zM746 428h1v1h-1zM746 416h1v1h-1zM746 404h1v1h-1zM746 391h1v1h-1zM746 379h1v1h-1zM746 367h1v1h-1zM746 354h1v1h-1zM746 342h1v1h-1zM746 330h1v1h-1zM746 318h1v1h-1zM746 305h1v1h-1zM746 293h1v1h-1zM746 281h1v1h-1zM746 269h1v1h-1zM746 256h1v1h-1zM746 244h1v1h-1zM746 232h1v1h-1zM746 220h1v1h-1zM746 207h1v1h-1zM746 195h1v1h-1zM746 183h1v1h-1zM746 170h1v1h-1zM746 158h1v1h-1zM758 722h1v1h-1zM758 710h1v1h-1zM758 698h1v1h-1zM758 686h1v1h-1zM758 673h1v1h-1zM758 661h1v1h-1zM758 649h1v1h-1zM758 637h1v1h-1zM758 624h1v1h-1zM758 612h1v1h-1zM758 600h1v1h-1zM758 588h1v1h-1zM758 575h1v1h-1zM758 563h1v1h-1zM758 551h1v1h-1zM758 538h1v1h-1zM758 526h1v1h-1zM758 514h1v1h-1zM758 502h1v1h-1zM758 489h1v1h-1zM758 477h1v1h-1zM758 465h1v1h-1zM758 453h1v1h-1zM758 440h1v1h-1zM758 428h1v1h-1zM758 416h1v1h-1zM758 404h1v1h-1zM758 391h1v1h-1zM758 379h1v1h-1zM758 367h1v1h-1zM758 354h1v1h-1zM758 342h1v1h-1zM758 330h1v1h-1zM758 318h1v1h-1zM758 305h1v1h-1zM758 293h1v1h-1zM758 281h1v1h-1zM758 269h1v1h-1zM758 256h1v1h-1zM758 244h1v1h-1zM758 232h1v1h-1zM758 220h1v1h-1zM758 207h1v1h-1zM758 195h1v1h-1zM758 183h1v1h-1zM758 170h1v1h-1zM758 158h1v1h-1zM770 722h1v1h-1zM770 710h1v1h-1zM770 698h1v1h-1zM770 686h1v1h-1zM770 673h1v1h-1zM770 661h1v1h-1zM770 649h1v1h-1zM770 637h1v1h-1zM770 624h1v1h-1zM770 612h1v1h-1zM770 600h1v1h-1zM770 588h1v1h-1zM770 575h1v1h-1zM770 563h1v1h-1zM770 551h1v1h-1zM770 538h1v1h-1zM770 526h1v1h-1zM770 514h1v1h-1zM770 502h1v1h-1zM770 489h1v1h-1zM770 477h1v1h-1zM770 465h1v1h-1zM770 453h1v1h-1zM770 440h1v1h-1zM770 428h1v1h-1zM770 416h1v1h-1zM770 404h1v1h-1zM770 391h1v1h-1zM770 379h1v1h-1zM770 367h1v1h-1zM770 354h1v1h-1zM770 342h1v1h-1zM770 330h1v1h-1zM770 318h1v1h-1zM770 305h1v1h-1zM770 293h1v1h-1zM770 281h1v1h-1zM770 269h1v1h-1zM770 256h1v1h-1zM770 244h1v1h-1zM770 232h1v1h-1zM770 220h1v1h-1zM770 207h1v1h-1zM770 195h1v1h-1zM770 183h1v1h-1zM770 170h1v1h-1zM770 158h1v1h-1zM783 722h1v1h-1zM783 710h1v1h-1zM783 698h1v1h-1zM783 686h1v1h-1zM783 673h1v1h-1zM783 661h1v1h-1zM783 649h1v1h-1zM783 637h1v1h-1zM783 624h1v1h-1zM783 612h1v1h-1zM783 600h1v1h-1zM783 588h1v1h-1zM783 575h1v1h-1zM783 563h1v1h-1zM783 551h1v1h-1zM783 538h1v1h-1zM783 526h1v1h-1zM783 514h1v1h-1zM783 502h1v1h-1zM783 489h1v1h-1zM783 477h1v1h-1zM783 465h1v1h-1zM783 453h1v1h-1zM783 440h1v1h-1zM783 428h1v1h-1zM783 416h1v1h-1zM783 404h1v1h-1zM783 391h1v1h-1zM783 379h1v1h-1zM783 367h1v1h-1zM783 354h1v1h-1zM783 342h1v1h-1zM783 330h1v1h-1zM783 318h1v1h-1zM783 305h1v1h-1zM783 293h1v1h-1zM783 281h1v1h-1zM783 269h1v1h-1zM783 256h1v1h-1zM783 244h1v1h-1zM783 232h1v1h-1zM783 220h1v1h-1zM783 207h1v1h-1zM783 195h1v1h-1zM783 183h1v1h-1zM783 170h1v1h-1zM783 158h1v1h-1zM795 722h1v1h-1zM795 710h1v1h-1zM795 698h1v1h-1zM795 686h1v1h-1zM795 673h1v1h-1zM795 661h1v1h-1zM795 649h1v1h-1zM795 637h1v1h-1zM795 624h1v1h-1zM795 612h1v1h-1zM795 600h1v1h-1zM795 588h1v1h-1zM795 575h1v1h-1zM795 563h1v1h-1zM795 551h1v1h-1zM795 538h1v1h-1zM795 526h1v1h-1zM795 514h1v1h-1zM795 502h1v1h-1zM795 489h1v1h-1zM795 477h1v1h-1zM795 465h1v1h-1zM795 453h1v1h-1zM795 440h1v1h-1zM795 428h1v1h-1zM795 416h1v1h-1zM795 404h1v1h-1zM795 391h1v1h-1zM795 379h1v1h-1zM795 367h1v1h-1zM795 354h1v1h-1zM795 342h1v1h-1zM795 330h1v1h-1zM795 318h1v1h-1zM795 305h1v1h-1zM795 293h1v1h-1zM795 281h1v1h-1zM795 269h1v1h-1zM795 256h1v1h-1zM795 244h1v1h-1zM795 232h1v1h-1zM795 220h1v1h-1zM795 207h1v1h-1zM795 195h1v1h-1zM795 183h1v1h-1zM795 170h1v1h-1zM795 158h1v1h-1zM807 722h1v1h-1zM807 710h1v1h-1zM807 698h1v1h-1zM807 686h1v1h-1zM807 673h1v1h-1zM807 661h1v1h-1zM807 649h1v1h-1zM807 637h1v1h-1zM807 624h1v1h-1zM807 612h1v1h-1zM807 600h1v1h-1zM807 588h1v1h-1zM807 575h1v1h-1zM807 563h1v1h-1zM807 551h1v1h-1zM807 538h1v1h-1zM807 526h1v1h-1zM807 514h1v1h-1zM807 502h1v1h-1zM807 489h1v1h-1zM807 477h1v1h-1zM807 465h1v1h-1zM807 453h1v1h-1zM807 440h1v1h-1zM807 428h1v1h-1zM807 416h1v1h-1zM807 404h1v1h-1zM807 391h1v1h-1zM807 379h1v1h-1zM807 367h1v1h-1zM807 354h1v1h-1zM807 342h1v1h-1zM807 330h1v1h-1zM807 318h1v1h-1zM807 305h1v1h-1zM807 293h1v1h-1zM807 281h1v1h-1zM807 269h1v1h-1zM807 256h1v1h-1zM807 244h1v1h-1zM807 232h1v1h-1zM807 220h1v1h-1zM807 207h1v1h-1zM807 195h1v1h-1zM807 183h1v1h-1zM807 170h1v1h-1zM807 158h1v1h-1zM819 722h1v1h-1zM819 710h1v1h-1zM819 698h1v1h-1zM819 686h1v1h-1zM819 673h1v1h-1zM819 661h1v1h-1zM819 649h1v1h-1zM819 637h1v1h-1zM819 624h1v1h-1zM819 612h1v1h-1zM819 600h1v1h-1zM819 588h1v1h-1zM819 575h1v1h-1zM819 563h1v1h-1zM819 551h1v1h-1zM819 538h1v1h-1zM819 526h1v1h-1zM819 514h1v1h-1zM819 502h1v1h-1zM819 489h1v1h-1zM819 477h1v1h-1zM819 465h1v1h-1zM819 453h1v1h-1zM819 440h1v1h-1zM819 428h1v1h-1zM819 416h1v1h-1zM819 404h1v1h-1zM819 391h1v1h-1zM819 379h1v1h-1zM819 367h1v1h-1zM819 354h1v1h-1zM819 342h1v1h-1zM819 330h1v1h-1zM819 318h1v1h-1zM819 305h1v1h-1zM819 293h1v1h-1zM819 281h1v1h-1zM819 269h1v1h-1zM819 256h1v1h-1zM819 244h1v1h-1zM819 232h1v1h-1zM819 220h1v1h-1zM819 207h1v1h-1zM819 195h1v1h-1zM819 183h1v1h-1zM819 170h1v1h-1zM819 158h1v1h-1zM832 722h1v1h-1zM832 710h1v1h-1zM832 698h1v1h-1zM832 686h1v1h-1zM832 673h1v1h-1zM832 661h1v1h-1zM832 649h1v1h-1zM832 637h1v1h-1zM832 624h1v1h-1zM832 612h1v1h-1zM832 600h1v1h-1zM832 588h1v1h-1zM832 575h1v1h-1zM832 563h1v1h-1zM832 551h1v1h-1zM832 538h1v1h-1zM832 526h1v1h-1zM832 514h1v1h-1zM832 502h1v1h-1zM832 489h1v1h-1zM832 477h1v1h-1zM832 465h1v1h-1zM832 453h1v1h-1zM832 440h1v1h-1zM832 428h1v1h-1zM832 416h1v1h-1zM832 404h1v1h-1zM832 391h1v1h-1zM832 379h1v1h-1zM832 367h1v1h-1zM832 354h1v1h-1zM832 342h1v1h-1zM832 330h1v1h-1zM832 318h1v1h-1zM832 305h1v1h-1zM832 293h1v1h-1zM832 281h1v1h-1zM832 269h1v1h-1zM832 256h1v1h-1zM832 244h1v1h-1zM832 232h1v1h-1zM832 220h1v1h-1zM832 207h1v1h-1zM832 195h1v1h-1zM832 183h1v1h-1zM832 170h1v1h-1zM832 158h1v1h-1zM844 722h1v1h-1zM844 710h1v1h-1zM844 698h1v1h-1zM844 686h1v1h-1zM844 673h1v1h-1zM844 661h1v1h-1zM844 649h1v1h-1zM844 637h1v1h-1zM844 624h1v1h-1zM844 612h1v1h-1zM844 600h1v1h-1zM844 588h1v1h-1zM844 575h1v1h-1zM844 563h1v1h-1zM844 551h1v1h-1zM844 538h1v1h-1zM844 526h1v1h-1zM844 514h1v1h-1zM844 502h1v1h-1zM844 489h1v1h-1zM844 477h1v1h-1zM844 465h1v1h-1zM844 453h1v1h-1zM844 440h1v1h-1zM844 428h1v1h-1zM844 416h1v1h-1zM844 404h1v1h-1zM844 391h1v1h-1zM844 379h1v1h-1zM844 367h1v1h-1zM844 354h1v1h-1zM844 342h1v1h-1zM844 330h1v1h-1zM844 318h1v1h-1zM844 305h1v1h-1zM844 293h1v1h-1zM844 281h1v1h-1zM844 269h1v1h-1zM844 256h1v1h-1zM844 244h1v1h-1zM844 232h1v1h-1zM844 220h1v1h-1zM844 207h1v1h-1zM844 195h1v1h-1zM844 183h1v1h-1zM844 170h1v1h-1zM844 158h1v1h-1zM856 722h1v1h-1zM856 710h1v1h-1zM856 698h1v1h-1zM856 686h1v1h-1zM856 673h1v1h-1zM856 661h1v1h-1zM856 649h1v1h-1zM856 637h1v1h-1zM856 624h1v1h-1zM856 612h1v1h-1zM856 600h1v1h-1zM856 588h1v1h-1zM856 575h1v1h-1zM856 563h1v1h-1zM856 551h1v1h-1zM856 538h1v1h-1zM856 526h1v1h-1zM856 514h1v1h-1zM856 502h1v1h-1zM856 489h1v1h-1zM856 477h1v1h-1zM856 465h1v1h-1zM856 453h1v1h-1zM856 440h1v1h-1zM856 428h1v1h-1zM856 416h1v1h-1zM856 404h1v1h-1zM856 391h1v1h-1zM856 379h1v1h-1zM856 367h1v1h-1zM856 354h1v1h-1zM856 342h1v1h-1zM856 330h1v1h-1zM856 318h1v1h-1zM856 305h1v1h-1zM856 293h1v1h-1zM856 281h1v1h-1zM856 269h1v1h-1zM856 256h1v1h-1zM856 244h1v1h-1zM856 232h1v1h-1zM856 220h1v1h-1zM856 207h1v1h-1zM856 195h1v1h-1zM856 183h1v1h-1zM856 170h1v1h-1zM856 158h1v1h-1zM868 722h1v1h-1zM868 710h1v1h-1zM868 698h1v1h-1zM868 686h1v1h-1zM868 673h1v1h-1zM868 661h1v1h-1zM868 649h1v1h-1zM868 637h1v1h-1zM868 624h1v1h-1zM868 612h1v1h-1zM868 600h1v1h-1zM868 588h1v1h-1zM868 575h1v1h-1zM868 563h1v1h-1zM868 551h1v1h-1zM868 538h1v1h-1zM868 526h1v1h-1zM868 514h1v1h-1zM868 502h1v1h-1zM868 489h1v1h-1zM868 477h1v1h-1zM868 465h1v1h-1zM868 453h1v1h-1zM868 440h1v1h-1zM868 428h1v1h-1zM868 416h1v1h-1zM868 404h1v1h-1zM868 391h1v1h-1zM868 379h1v1h-1zM868 367h1v1h-1zM868 354h1v1h-1zM868 342h1v1h-1zM868 330h1v1h-1zM868 318h1v1h-1zM868 305h1v1h-1zM868 293h1v1h-1zM868 281h1v1h-1zM868 269h1v1h-1zM868 256h1v1h-1zM868 244h1v1h-1zM868 232h1v1h-1zM868 220h1v1h-1zM868 207h1v1h-1zM868 195h1v1h-1zM868 183h1v1h-1zM868 170h1v1h-1zM868 158h1v1h-1zM881 722h1v1h-1zM881 710h1v1h-1zM881 698h1v1h-1zM881 686h1v1h-1zM881 673h1v1h-1zM881 661h1v1h-1zM881 649h1v1h-1zM881 637h1v1h-1zM881 624h1v1h-1zM881 612h1v1h-1zM881 600h1v1h-1zM881 588h1v1h-1zM881 575h1v1h-1zM881 563h1v1h-1zM881 551h1v1h-1zM881 538h1v1h-1zM881 526h1v1h-1zM881 514h1v1h-1zM881 502h1v1h-1zM881 489h1v1h-1zM881 477h1v1h-1zM881 465h1v1h-1zM881 453h1v1h-1zM881 440h1v1h-1zM881 428h1v1h-1zM881 416h1v1h-1zM881 404h1v1h-1zM881 391h1v1h-1zM881 379h1v1h-1zM881 367h1v1h-1zM881 354h1v1h-1zM881 342h1v1h-1zM881 330h1v1h-1zM881 318h1v1h-1zM881 305h1v1h-1zM881 293h1v1h-1zM881 281h1v1h-1zM881 269h1v1h-1zM881 256h1v1h-1zM881 244h1v1h-1zM881 232h1v1h-1zM881 220h1v1h-1zM881 207h1v1h-1zM881 195h1v1h-1zM881 183h1v1h-1zM881 170h1v1h-1zM881 158h1v1h-1zM893 722h1v1h-1zM893 710h1v1h-1zM893 698h1v1h-1zM893 686h1v1h-1zM893 673h1v1h-1zM893 661h1v1h-1zM893 649h1v1h-1zM893 637h1v1h-1zM893 624h1v1h-1zM893 612h1v1h-1zM893 600h1v1h-1zM893 588h1v1h-1zM893 575h1v1h-1zM893 563h1v1h-1zM893 551h1v1h-1zM893 538h1v1h-1zM893 526h1v1h-1zM893 514h1v1h-1zM893 502h1v1h-1zM893 489h1v1h-1zM893 477h1v1h-1zM893 465h1v1h-1zM893 453h1v1h-1zM893 440h1v1h-1zM893 428h1v1h-1zM893 416h1v1h-1zM893 404h1v1h-1zM893 391h1v1h-1zM893 379h1v1h-1zM893 367h1v1h-1zM893 354h1v1h-1zM893 342h1v1h-1zM893 330h1v1h-1zM893 318h1v1h-1zM893 305h1v1h-1zM893 293h1v1h-1zM893 281h1v1h-1zM893 269h1v1h-1zM893 256h1v1h-1zM893 244h1v1h-1zM893 232h1v1h-1zM893 220h1v1h-1zM893 207h1v1h-1zM893 195h1v1h-1zM893 183h1v1h-1zM893 170h1v1h-1zM893 158h1v1h-1zM905 722h1v1h-1zM905 710h1v1h-1zM905 698h1v1h-1zM905 686h1v1h-1zM905 673h1v1h-1zM905 661h1v1h-1zM905 649h1v1h-1zM905 637h1v1h-1zM905 624h1v1h-1zM905 612h1v1h-1zM905 600h1v1h-1zM905 588h1v1h-1zM905 575h1v1h-1zM905 563h1v1h-1zM905 551h1v1h-1zM905 538h1v1h-1zM905 526h1v1h-1zM905 514h1v1h-1zM905 502h1v1h-1zM905 489h1v1h-1zM905 477h1v1h-1zM905 465h1v1h-1zM905 453h1v1h-1zM905 440h1v1h-1zM905 428h1v1h-1zM905 416h1v1h-1zM905 404h1v1h-1zM905 391h1v1h-1zM905 379h1v1h-1zM905 367h1v1h-1zM905 354h1v1h-1zM905 342h1v1h-1zM905 330h1v1h-1zM905 318h1v1h-1zM905 305h1v1h-1zM905 293h1v1h-1zM905 281h1v1h-1zM905 269h1v1h-1zM905 256h1v1h-1zM905 244h1v1h-1zM905 232h1v1h-1zM905 220h1v1h-1zM905 207h1v1h-1zM905 195h1v1h-1zM905 183h1v1h-1zM905 170h1v1h-1zM905 158h1v1h-1zM918 722h1v1h-1zM918 710h1v1h-1zM918 698h1v1h-1zM918 686h1v1h-1zM918 673h1v1h-1zM918 661h1v1h-1zM918 649h1v1h-1zM918 637h1v1h-1zM918 624h1v1h-1zM918 612h1v1h-1zM918 600h1v1h-1zM918 588h1v1h-1zM918 575h1v1h-1zM918 563h1v1h-1zM918 551h1v1h-1zM918 538h1v1h-1zM918 526h1v1h-1zM918 514h1v1h-1zM918 502h1v1h-1zM918 489h1v1h-1zM918 477h1v1h-1zM918 465h1v1h-1zM918 453h1v1h-1zM918 440h1v1h-1zM918 428h1v1h-1zM918 416h1v1h-1zM918 404h1v1h-1zM918 391h1v1h-1zM918 379h1v1h-1zM918 367h1v1h-1zM918 354h1v1h-1zM918 342h1v1h-1zM918 330h1v1h-1zM918 318h1v1h-1zM918 305h1v1h-1zM918 293h1v1h-1zM918 281h1v1h-1zM918 269h1v1h-1zM918 256h1v1h-1zM918 244h1v1h-1zM918 232h1v1h-1zM918 220h1v1h-1zM918 207h1v1h-1zM918 195h1v1h-1zM918 183h1v1h-1zM918 170h1v1h-1zM918 158h1v1h-1zM930 722h1v1h-1zM930 710h1v1h-1zM930 698h1v1h-1zM930 686h1v1h-1zM930 673h1v1h-1zM930 661h1v1h-1zM930 649h1v1h-1zM930 637h1v1h-1zM930 624h1v1h-1zM930 612h1v1h-1zM930 600h1v1h-1zM930 588h1v1h-1zM930 575h1v1h-1zM930 563h1v1h-1zM930 551h1v1h-1zM930 538h1v1h-1zM930 526h1v1h-1zM930 514h1v1h-1zM930 502h1v1h-1zM930 489h1v1h-1zM930 477h1v1h-1zM930 465h1v1h-1zM930 453h1v1h-1zM930 440h1v1h-1zM930 428h1v1h-1zM930 416h1v1h-1zM930 404h1v1h-1zM930 391h1v1h-1zM930 379h1v1h-1zM930 367h1v1h-1zM930 354h1v1h-1zM930 342h1v1h-1zM930 330h1v1h-1zM930 318h1v1h-1zM930 305h1v1h-1zM930 293h1v1h-1zM930 281h1v1h-1zM930 269h1v1h-1zM930 256h1v1h-1zM930 244h1v1h-1zM930 232h1v1h-1zM930 220h1v1h-1zM930 207h1v1h-1zM930 195h1v1h-1zM930 183h1v1h-1zM930 170h1v1h-1zM930 158h1v1h-1zM942 722h1v1h-1zM942 710h1v1h-1zM942 698h1v1h-1zM942 686h1v1h-1zM942 673h1v1h-1zM942 661h1v1h-1zM942 649h1v1h-1zM942 637h1v1h-1zM942 624h1v1h-1zM942 612h1v1h-1zM942 600h1v1h-1zM942 588h1v1h-1zM942 575h1v1h-1zM942 563h1v1h-1zM942 551h1v1h-1zM942 538h1v1h-1zM942 526h1v1h-1zM942 514h1v1h-1zM942 502h1v1h-1zM942 489h1v1h-1zM942 477h1v1h-1zM942 465h1v1h-1zM942 453h1v1h-1zM942 440h1v1h-1zM942 428h1v1h-1zM942 416h1v1h-1zM942 404h1v1h-1zM942 391h1v1h-1zM942 379h1v1h-1zM942 367h1v1h-1zM942 354h1v1h-1zM942 342h1v1h-1zM942 330h1v1h-1zM942 318h1v1h-1zM942 305h1v1h-1zM942 293h1v1h-1zM942 281h1v1h-1zM942 269h1v1h-1zM942 256h1v1h-1zM942 244h1v1h-1zM942 232h1v1h-1zM942 220h1v1h-1zM942 207h1v1h-1zM942 195h1v1h-1zM942 183h1v1h-1zM942 170h1v1h-1zM942 158h1v1h-1zM954 722h1v1h-1zM954 710h1v1h-1zM954 698h1v1h-1zM954 686h1v1h-1zM954 673h1v1h-1zM954 661h1v1h-1zM954 649h1v1h-1zM954 637h1v1h-1zM954 624h1v1h-1zM954 612h1v1h-1zM954 600h1v1h-1zM954 588h1v1h-1zM954 575h1v1h-1zM954 563h1v1h-1zM954 551h1v1h-1zM954 538h1v1h-1zM954 526h1v1h-1zM954 514h1v1h-1zM954 502h1v1h-1zM954 489h1v1h-1zM954 477h1v1h-1zM954 465h1v1h-1zM954 453h1v1h-1zM954 440h1v1h-1zM954 428h1v1h-1zM954 416h1v1h-1zM954 404h1v1h-1zM954 391h1v1h-1zM954 379h1v1h-1zM954 367h1v1h-1zM954 354h1v1h-1zM954 342h1v1h-1zM954 330h1v1h-1zM954 318h1v1h-1zM954 305h1v1h-1zM954 293h1v1h-1zM954 281h1v1h-1zM954 269h1v1h-1zM954 256h1v1h-1zM954 244h1v1h-1zM954 232h1v1h-1zM954 220h1v1h-1zM954 207h1v1h-1zM954 195h1v1h-1zM954 183h1v1h-1zM954 170h1v1h-1zM954 158h1v1h-1zM967 722h1v1h-1zM967 710h1v1h-1zM967 698h1v1h-1zM967 686h1v1h-1zM967 673h1v1h-1zM967 661h1v1h-1zM967 649h1v1h-1zM967 637h1v1h-1zM967 624h1v1h-1zM967 612h1v1h-1zM967 600h1v1h-1zM967 588h1v1h-1zM967 575h1v1h-1zM967 563h1v1h-1zM967 551h1v1h-1zM967 538h1v1h-1zM967 526h1v1h-1zM967 514h1v1h-1zM967 502h1v1h-1zM967 489h1v1h-1zM967 477h1v1h-1zM967 465h1v1h-1zM967 453h1v1h-1zM967 440h1v1h-1zM967 428h1v1h-1zM967 416h1v1h-1zM967 404h1v1h-1zM967 391h1v1h-1zM967 379h1v1h-1zM967 367h1v1h-1zM967 354h1v1h-1zM967 342h1v1h-1zM967 330h1v1h-1zM967 318h1v1h-1zM967 305h1v1h-1zM967 293h1v1h-1zM967 281h1v1h-1zM967 269h1v1h-1zM967 256h1v1h-1zM967 244h1v1h-1zM967 232h1v1h-1zM967 220h1v1h-1zM967 207h1v1h-1zM967 195h1v1h-1zM967 183h1v1h-1zM967 170h1v1h-1zM967 158h1v1h-1zM979 722h1v1h-1zM979 710h1v1h-1zM979 698h1v1h-1zM979 686h1v1h-1zM979 673h1v1h-1zM979 661h1v1h-1zM979 649h1v1h-1zM979 637h1v1h-1zM979 624h1v1h-1zM979 612h1v1h-1zM979 600h1v1h-1zM979 588h1v1h-1zM979 575h1v1h-1zM979 563h1v1h-1zM979 551h1v1h-1zM979 538h1v1h-1zM979 526h1v1h-1zM979 514h1v1h-1zM979 502h1v1h-1zM979 489h1v1h-1zM979 477h1v1h-1zM979 465h1v1h-1zM979 453h1v1h-1zM979 440h1v1h-1zM979 428h1v1h-1zM979 416h1v1h-1zM979 404h1v1h-1zM979 391h1v1h-1zM979 379h1v1h-1zM979 367h1v1h-1zM979 354h1v1h-1zM979 342h1v1h-1zM979 330h1v1h-1zM979 318h1v1h-1zM979 305h1v1h-1zM979 293h1v1h-1zM979 281h1v1h-1zM979 269h1v1h-1zM979 256h1v1h-1zM979 244h1v1h-1zM979 232h1v1h-1zM979 220h1v1h-1zM979 207h1v1h-1zM979 195h1v1h-1zM979 183h1v1h-1zM979 170h1v1h-1zM979 158h1v1h-1zM991 722h1v1h-1zM991 710h1v1h-1zM991 698h1v1h-1zM991 686h1v1h-1zM991 673h1v1h-1zM991 661h1v1h-1zM991 649h1v1h-1zM991 637h1v1h-1zM991 624h1v1h-1zM991 612h1v1h-1zM991 600h1v1h-1zM991 588h1v1h-1zM991 575h1v1h-1zM991 563h1v1h-1zM991 551h1v1h-1zM991 538h1v1h-1zM991 526h1v1h-1zM991 514h1v1h-1zM991 502h1v1h-1zM991 489h1v1h-1zM991 477h1v1h-1zM991 465h1v1h-1zM991 453h1v1h-1zM991 440h1v1h-1zM991 428h1v1h-1zM991 416h1v1h-1zM991 404h1v1h-1zM991 391h1v1h-1zM991 379h1v1h-1zM991 367h1v1h-1zM991 354h1v1h-1zM991 342h1v1h-1zM991 330h1v1h-1zM991 318h1v1h-1zM991 305h1v1h-1zM991 293h1v1h-1zM991 281h1v1h-1zM991 269h1v1h-1zM991 256h1v1h-1zM991 244h1v1h-1zM991 232h1v1h-1zM991 220h1v1h-1zM991 207h1v1h-1zM991 195h1v1h-1zM991 183h1v1h-1zM991 170h1v1h-1zM991 158h1v1h-1zM1003 722h1v1h-1zM1003 710h1v1h-1zM1003 698h1v1h-1zM1003 686h1v1h-1zM1003 673h1v1h-1zM1003 661h1v1h-1zM1003 649h1v1h-1zM1003 637h1v1h-1zM1003 624h1v1h-1zM1003 612h1v1h-1zM1003 600h1v1h-1zM1003 588h1v1h-1zM1003 575h1v1h-1zM1003 563h1v1h-1zM1003 551h1v1h-1zM1003 538h1v1h-1zM1003 526h1v1h-1zM1003 514h1v1h-1zM1003 502h1v1h-1zM1003 489h1v1h-1zM1003 477h1v1h-1zM1003 465h1v1h-1zM1003 453h1v1h-1zM1003 440h1v1h-1zM1003 428h1v1h-1zM1003 416h1v1h-1zM1003 404h1v1h-1zM1003 391h1v1h-1zM1003 379h1v1h-1zM1003 367h1v1h-1zM1003 354h1v1h-1zM1003 342h1v1h-1zM1003 330h1v1h-1zM1003 318h1v1h-1zM1003 305h1v1h-1zM1003 293h1v1h-1zM1003 281h1v1h-1zM1003 269h1v1h-1zM1003 256h1v1h-1zM1003 244h1v1h-1zM1003 232h1v1h-1zM1003 220h1v1h-1zM1003 207h1v1h-1zM1003 195h1v1h-1zM1003 183h1v1h-1zM1003 170h1v1h-1zM1003 158h1v1h-1zM1016 722h1v1h-1zM1016 710h1v1h-1zM1016 698h1v1h-1zM1016 686h1v1h-1zM1016 673h1v1h-1zM1016 661h1v1h-1zM1016 649h1v1h-1zM1016 637h1v1h-1zM1016 624h1v1h-1zM1016 612h1v1h-1zM1016 600h1v1h-1zM1016 588h1v1h-1zM1016 575h1v1h-1zM1016 563h1v1h-1zM1016 551h1v1h-1zM1016 538h1v1h-1zM1016 526h1v1h-1zM1016 514h1v1h-1zM1016 502h1v1h-1zM1016 489h1v1h-1zM1016 477h1v1h-1zM1016 465h1v1h-1zM1016 453h1v1h-1zM1016 440h1v1h-1zM1016 428h1v1h-1zM1016 416h1v1h-1zM1016 404h1v1h-1zM1016 391h1v1h-1zM1016 379h1v1h-1zM1016 367h1v1h-1zM1016 354h1v1h-1zM1016 342h1v1h-1zM1016 330h1v1h-1zM1016 318h1v1h-1zM1016 305h1v1h-1zM1016 293h1v1h-1zM1016 281h1v1h-1zM1016 269h1v1h-1zM1016 256h1v1h-1zM1016 244h1v1h-1zM1016 232h1v1h-1zM1016 220h1v1h-1zM1016 207h1v1h-1zM1016 195h1v1h-1zM1016 183h1v1h-1zM1016 170h1v1h-1zM1016 158h1v1h-1zM1028 722h1v1h-1zM1028 710h1v1h-1zM1028 698h1v1h-1zM1028 686h1v1h-1zM1028 673h1v1h-1zM1028 661h1v1h-1zM1028 649h1v1h-1zM1028 637h1v1h-1zM1028 624h1v1h-1zM1028 612h1v1h-1zM1028 600h1v1h-1zM1028 588h1v1h-1zM1028 575h1v1h-1zM1028 563h1v1h-1zM1028 551h1v1h-1zM1028 538h1v1h-1zM1028 526h1v1h-1zM1028 514h1v1h-1zM1028 502h1v1h-1zM1028 489h1v1h-1zM1028 477h1v1h-1zM1028 465h1v1h-1zM1028 453h1v1h-1zM1028 440h1v1h-1zM1028 428h1v1h-1zM1028 416h1v1h-1zM1028 404h1v1h-1zM1028 391h1v1h-1zM1028 379h1v1h-1zM1028 367h1v1h-1zM1028 354h1v1h-1zM1028 342h1v1h-1zM1028 330h1v1h-1zM1028 318h1v1h-1zM1028 305h1v1h-1zM1028 293h1v1h-1zM1028 281h1v1h-1zM1028 269h1v1h-1zM1028 256h1v1h-1zM1028 244h1v1h-1zM1028 232h1v1h-1zM1028 220h1v1h-1zM1028 207h1v1h-1zM1028 195h1v1h-1zM1028 183h1v1h-1zM1028 170h1v1h-1zM1028 158h1v1h-1zM1040 722h1v1h-1zM1040 710h1v1h-1zM1040 698h1v1h-1zM1040 686h1v1h-1zM1040 673h1v1h-1zM1040 661h1v1h-1zM1040 649h1v1h-1zM1040 637h1v1h-1zM1040 624h1v1h-1zM1040 612h1v1h-1zM1040 600h1v1h-1zM1040 588h1v1h-1zM1040 575h1v1h-1zM1040 563h1v1h-1zM1040 551h1v1h-1zM1040 538h1v1h-1zM1040 526h1v1h-1zM1040 514h1v1h-1zM1040 502h1v1h-1zM1040 489h1v1h-1zM1040 477h1v1h-1zM1040 465h1v1h-1zM1040 453h1v1h-1zM1040 440h1v1h-1zM1040 428h1v1h-1zM1040 416h1v1h-1zM1040 404h1v1h-1zM1040 391h1v1h-1zM1040 379h1v1h-1zM1040 367h1v1h-1zM1040 354h1v1h-1zM1040 342h1v1h-1zM1040 330h1v1h-1zM1040 318h1v1h-1zM1040 305h1v1h-1zM1040 293h1v1h-1zM1040 281h1v1h-1zM1040 269h1v1h-1zM1040 256h1v1h-1zM1040 244h1v1h-1zM1040 232h1v1h-1zM1040 220h1v1h-1zM1040 207h1v1h-1zM1040 195h1v1h-1zM1040 183h1v1h-1zM1040 170h1v1h-1zM1040 158h1v1h-1zM1052 722h1v1h-1zM1052 710h1v1h-1zM1052 698h1v1h-1zM1052 686h1v1h-1zM1052 673h1v1h-1zM1052 661h1v1h-1zM1052 649h1v1h-1zM1052 637h1v1h-1zM1052 624h1v1h-1zM1052 612h1v1h-1zM1052 600h1v1h-1zM1052 588h1v1h-1zM1052 575h1v1h-1zM1052 563h1v1h-1zM1052 551h1v1h-1zM1052 538h1v1h-1zM1052 526h1v1h-1zM1052 514h1v1h-1zM1052 502h1v1h-1zM1052 489h1v1h-1zM1052 477h1v1h-1zM1052 465h1v1h-1zM1052 453h1v1h-1zM1052 440h1v1h-1zM1052 428h1v1h-1zM1052 416h1v1h-1zM1052 404h1v1h-1zM1052 391h1v1h-1zM1052 379h1v1h-1zM1052 367h1v1h-1zM1052 354h1v1h-1zM1052 342h1v1h-1zM1052 330h1v1h-1zM1052 318h1v1h-1zM1052 305h1v1h-1zM1052 293h1v1h-1zM1052 281h1v1h-1zM1052 269h1v1h-1zM1052 256h1v1h-1zM1052 244h1v1h-1zM1052 232h1v1h-1zM1052 220h1v1h-1zM1052 207h1v1h-1zM1052 195h1v1h-1zM1052 183h1v1h-1zM1052 170h1v1h-1zM1052 158h1v1h-1zM1065 722h1v1h-1zM1065 710h1v1h-1zM1065 698h1v1h-1zM1065 686h1v1h-1zM1065 673h1v1h-1zM1065 661h1v1h-1zM1065 649h1v1h-1zM1065 637h1v1h-1zM1065 624h1v1h-1zM1065 612h1v1h-1zM1065 600h1v1h-1zM1065 588h1v1h-1zM1065 575h1v1h-1zM1065 563h1v1h-1zM1065 551h1v1h-1zM1065 538h1v1h-1zM1065 526h1v1h-1zM1065 514h1v1h-1zM1065 502h1v1h-1zM1065 489h1v1h-1zM1065 477h1v1h-1zM1065 465h1v1h-1zM1065 453h1v1h-1zM1065 440h1v1h-1zM1065 428h1v1h-1zM1065 416h1v1h-1zM1065 404h1v1h-1zM1065 391h1v1h-1zM1065 379h1v1h-1zM1065 367h1v1h-1zM1065 354h1v1h-1zM1065 342h1v1h-1zM1065 330h1v1h-1zM1065 318h1v1h-1zM1065 305h1v1h-1zM1065 293h1v1h-1zM1065 281h1v1h-1zM1065 269h1v1h-1zM1065 256h1v1h-1zM1065 244h1v1h-1zM1065 232h1v1h-1zM1065 220h1v1h-1zM1065 207h1v1h-1zM1065 195h1v1h-1zM1065 183h1v1h-1zM1065 170h1v1h-1zM1065 158h1v1h-1zM1077 722h1v1h-1zM1077 710h1v1h-1zM1077 698h1v1h-1zM1077 686h1v1h-1zM1077 673h1v1h-1zM1077 661h1v1h-1zM1077 649h1v1h-1zM1077 637h1v1h-1zM1077 624h1v1h-1zM1077 612h1v1h-1zM1077 600h1v1h-1zM1077 588h1v1h-1zM1077 575h1v1h-1zM1077 563h1v1h-1zM1077 551h1v1h-1zM1077 538h1v1h-1zM1077 526h1v1h-1zM1077 514h1v1h-1zM1077 502h1v1h-1zM1077 489h1v1h-1zM1077 477h1v1h-1zM1077 465h1v1h-1zM1077 453h1v1h-1zM1077 440h1v1h-1zM1077 428h1v1h-1zM1077 416h1v1h-1zM1077 404h1v1h-1zM1077 391h1v1h-1zM1077 379h1v1h-1zM1077 367h1v1h-1zM1077 354h1v1h-1zM1077 342h1v1h-1zM1077 330h1v1h-1zM1077 318h1v1h-1zM1077 305h1v1h-1zM1077 293h1v1h-1zM1077 281h1v1h-1zM1077 269h1v1h-1zM1077 256h1v1h-1zM1077 244h1v1h-1zM1077 232h1v1h-1zM1077 220h1v1h-1zM1077 207h1v1h-1zM1077 195h1v1h-1zM1077 183h1v1h-1zM1077 170h1v1h-1zM1077 158h1v1h-1zM1089 722h1v1h-1zM1089 710h1v1h-1zM1089 698h1v1h-1zM1089 686h1v1h-1zM1089 673h1v1h-1zM1089 661h1v1h-1zM1089 649h1v1h-1zM1089 637h1v1h-1zM1089 624h1v1h-1zM1089 612h1v1h-1zM1089 600h1v1h-1zM1089 588h1v1h-1zM1089 575h1v1h-1zM1089 563h1v1h-1zM1089 551h1v1h-1zM1089 538h1v1h-1zM1089 526h1v1h-1zM1089 514h1v1h-1zM1089 502h1v1h-1zM1089 489h1v1h-1zM1089 477h1v1h-1zM1089 465h1v1h-1zM1089 453h1v1h-1zM1089 440h1v1h-1zM1089 428h1v1h-1zM1089 416h1v1h-1zM1089 404h1v1h-1zM1089 391h1v1h-1zM1089 379h1v1h-1zM1089 367h1v1h-1zM1089 354h1v1h-1zM1089 342h1v1h-1zM1089 330h1v1h-1zM1089 318h1v1h-1zM1089 305h1v1h-1zM1089 293h1v1h-1zM1089 281h1v1h-1zM1089 269h1v1h-1zM1089 256h1v1h-1zM1089 244h1v1h-1zM1089 232h1v1h-1zM1089 220h1v1h-1zM1089 207h1v1h-1zM1089 195h1v1h-1zM1089 183h1v1h-1zM1089 170h1v1h-1zM1089 158h1v1h-1zM1102 722h1v1h-1zM1102 710h1v1h-1zM1102 698h1v1h-1zM1102 686h1v1h-1zM1102 673h1v1h-1zM1102 661h1v1h-1zM1102 649h1v1h-1zM1102 637h1v1h-1zM1102 624h1v1h-1zM1102 612h1v1h-1zM1102 600h1v1h-1zM1102 588h1v1h-1zM1102 575h1v1h-1zM1102 563h1v1h-1zM1102 551h1v1h-1zM1102 538h1v1h-1zM1102 526h1v1h-1zM1102 514h1v1h-1zM1102 502h1v1h-1zM1102 489h1v1h-1zM1102 477h1v1h-1zM1102 465h1v1h-1zM1102 453h1v1h-1zM1102 440h1v1h-1zM1102 428h1v1h-1zM1102 416h1v1h-1zM1102 404h1v1h-1zM1102 391h1v1h-1zM1102 379h1v1h-1zM1102 367h1v1h-1zM1102 354h1v1h-1zM1102 342h1v1h-1zM1102 330h1v1h-1zM1102 318h1v1h-1zM1102 305h1v1h-1zM1102 293h1v1h-1zM1102 281h1v1h-1zM1102 269h1v1h-1zM1102 256h1v1h-1zM1102 244h1v1h-1zM1102 232h1v1h-1zM1102 220h1v1h-1zM1102 207h1v1h-1zM1102 195h1v1h-1zM1102 183h1v1h-1zM1102 170h1v1h-1zM1102 158h1v1h-1zM1114 722h1v1h-1zM1114 710h1v1h-1zM1114 698h1v1h-1zM1114 686h1v1h-1zM1114 673h1v1h-1zM1114 661h1v1h-1zM1114 649h1v1h-1zM1114 637h1v1h-1zM1114 624h1v1h-1zM1114 612h1v1h-1zM1114 600h1v1h-1zM1114 588h1v1h-1zM1114 575h1v1h-1zM1114 563h1v1h-1zM1114 551h1v1h-1zM1114 538h1v1h-1zM1114 526h1v1h-1zM1114 514h1v1h-1zM1114 502h1v1h-1zM1114 489h1v1h-1zM1114 477h1v1h-1zM1114 465h1v1h-1zM1114 453h1v1h-1zM1114 440h1v1h-1zM1114 428h1v1h-1zM1114 416h1v1h-1zM1114 404h1v1h-1zM1114 391h1v1h-1zM1114 379h1v1h-1zM1114 367h1v1h-1zM1114 354h1v1h-1zM1114 342h1v1h-1zM1114 330h1v1h-1zM1114 318h1v1h-1zM1114 305h1v1h-1zM1114 293h1v1h-1zM1114 281h1v1h-1zM1114 269h1v1h-1zM1114 256h1v1h-1zM1114 244h1v1h-1zM1114 232h1v1h-1zM1114 220h1v1h-1zM1114 207h1v1h-1zM1114 195h1v1h-1zM1114 183h1v1h-1zM1114 170h1v1h-1zM1114 158h1v1h-1zM1126 722h1v1h-1zM1126 710h1v1h-1zM1126 698h1v1h-1zM1126 686h1v1h-1zM1126 673h1v1h-1zM1126 661h1v1h-1zM1126 649h1v1h-1zM1126 637h1v1h-1zM1126 624h1v1h-1zM1126 612h1v1h-1zM1126 600h1v1h-1zM1126 588h1v1h-1zM1126 575h1v1h-1zM1126 563h1v1h-1zM1126 551h1v1h-1zM1126 538h1v1h-1zM1126 526h1v1h-1zM1126 514h1v1h-1zM1126 502h1v1h-1zM1126 489h1v1h-1zM1126 477h1v1h-1zM1126 465h1v1h-1zM1126 453h1v1h-1zM1126 440h1v1h-1zM1126 428h1v1h-1zM1126 416h1v1h-1zM1126 404h1v1h-1zM1126 391h1v1h-1zM1126 379h1v1h-1zM1126 367h1v1h-1zM1126 354h1v1h-1zM1126 342h1v1h-1zM1126 330h1v1h-1zM1126 318h1v1h-1zM1126 305h1v1h-1zM1126 293h1v1h-1zM1126 281h1v1h-1zM1126 269h1v1h-1zM1126 256h1v1h-1zM1126 244h1v1h-1zM1126 232h1v1h-1zM1126 220h1v1h-1zM1126 207h1v1h-1zM1126 195h1v1h-1zM1126 183h1v1h-1zM1126 170h1v1h-1zM1126 158h1v1h-1z"/>
<g fill="none" stroke="#b4b4b4" stroke-width="1">
<path d="M409.2 277.6L715.2 261.2L794.6 550.9L792.4 551.2L713.3 267.5L409.8 283.4"/>
<path d="M738.3 254.8L818 540C826 568 822 600 810.4 632.4"/>
<path d="M797 580.2L779.5 629.5M801 581.2L783 629.8M797 580.2L801 581.2"/>
</g>
<g fill="none" stroke="#b48c4e" stroke-width="1">
<path d="M423 402.4C425.8 402.6 433.7 403.2 439.5 403.4C445.3 403.6 451.9 403.9 457.6 403.4C463.3 402.9 468.3 401.7 473.6 400.2C478.9 398.7 484.6 397.1 489.6 394.4C494.6 391.6 499.4 387.6 503.5 383.7C507.6 379.8 510.6 375.7 514.1 370.9C517.6 366.1 521.3 359.7 524.8 354.8C528.3 349.9 531.5 345.4 535 341.5C538.5 337.6 541.4 334.4 545.5 331.5C549.6 328.6 554 326.1 559.7 323.8C565.4 321.5 573 319 579.6 317.6C586.2 316.2 592.6 315.6 599.5 315.6C606.4 315.6 613.7 315.9 620.8 317.8C627.9 319.7 636.2 323.6 642.1 327C648 330.4 652.1 334.1 656.4 338.4C660.7 342.7 664.4 347.6 667.7 352.6C671 357.6 673.9 362.3 676.3 368.2C678.7 374.1 680.7 381.6 682 388.1C683.3 394.6 683.8 400.5 684 407C684.2 413.5 684.1 420.5 683 427C681.9 433.5 679.3 440 677.3 446C675.2 452 672.3 457.6 670.7 463C669.1 468.4 667.9 473.1 667.9 478.2C667.9 483.2 668.7 488.6 670.7 493.3C672.8 498 676.9 502.2 680.2 506.6C683.5 511 687.6 515.7 690.6 519.8C693.6 523.9 696.3 527.1 698.2 531.2C700.1 535.3 701.2 540.5 702 544.5C702.8 548.5 702.2 552.3 703 555C703.8 557.7 705.1 559.6 706.5 560.6C707.9 561.6 707.8 561.7 711.4 561C715 560.3 722 557.9 727.9 556.5C733.8 555.1 740.6 553.3 746.9 552.4C753.2 551.5 758.2 551.4 765.8 551.2C773.4 551 788 551.2 792.4 551.2"/>
<path d="M421.4 421.9C424.4 422.1 433.1 423.1 439.5 423.2C445.9 423.3 453.2 423.3 459.8 422.6C466.4 421.9 473 420.7 479 418.9C485 417.1 490.7 414.9 496 412C501.3 409.1 506.4 405.4 511 401.8C515.6 398.2 519.8 394.4 523.7 390.1C527.6 385.8 531.1 381.2 534.4 376.2C537.7 371.2 539.8 364.9 543.5 360C547.2 355.1 551.6 350.4 556.9 346.9C562.2 343.4 568.2 341 575.3 339.1C582.4 337.2 591.9 335.5 599.5 335.5C607.1 335.5 613.7 336.5 620.8 339.1C627.9 341.7 636.6 347.3 642.1 351.2C647.6 355.1 650.4 357.8 653.5 362.5C656.6 367.2 658.8 373.4 660.6 379.6C662.4 385.8 663.8 392.5 664.2 399.5C664.6 406.5 664.1 414.9 663.1 421.4C662.1 427.9 660.3 432.7 658.4 438.4C656.5 444.1 653.4 449.8 651.8 455.5C650.2 461.2 648.8 466.8 648.6 472.5C648.4 478.2 648.9 483.8 650.5 489.5C652.1 495.2 655 500.9 658.4 506.6C661.8 512.3 667.1 517.9 670.7 523.6C674.3 529.3 678.2 535.7 680.2 540.7C682.2 545.8 683.1 549.7 683 553.9C682.9 558.1 681.6 561.7 679.7 566C677.8 570.3 675.3 575.9 671.7 579.7C668.1 583.5 663 587 658.3 589C653.6 591 648.8 592.2 643.7 591.7C638.6 591.2 632.6 588.5 627.7 586.3C622.8 584.1 618.8 581.3 614.3 578.3C609.8 575.3 605.9 571.2 601 568.3C596.1 565.4 590.3 562.5 585 561C579.7 559.5 574.5 558.5 569 559C563.5 559.5 556.8 561.4 551.7 563.7C546.6 566 542.3 569.5 538.3 573C534.3 576.5 530.6 580.8 527.7 585C524.8 589.2 522.6 593.5 521 598.3C519.4 603.1 518.8 611.1 518.3 613.7"/>
<path d="M537 614.3C537.5 612.1 537.7 605.4 539.7 601C541.7 596.6 545.5 591.2 549 587.7C552.5 584.2 557.2 581.8 561 580.3C564.8 578.8 567.7 578.7 571.7 579C575.7 579.3 580.1 580 585 582.3C589.9 584.6 595.5 589.2 601 593C606.5 596.8 612.5 602 618.3 605C624.1 608 630.1 610.1 635.7 611C641.3 611.9 645.7 611.5 651.7 610.3C657.7 609.1 665.9 606.6 671.7 603.7C677.5 600.8 680.8 596.1 686.3 593C691.8 589.9 698.1 588 705 585C711.9 582 718.7 577.4 727.9 575C737.1 572.6 751.4 570.6 760.1 570.4C768.8 570.1 773.7 571.8 780 573.5C786.3 575.2 795 579.6 798 580.8"/>
</g>
<g transform="translate(544 298.7) rotate(-27.4)"><rect x="-15.5" y="-4.2" width="31" height="8.5" rx="1.2" fill="#5c5c5c" stroke="#d0d0d0" stroke-width="1"/><path d="M-14.5 -2H14.5M-14.5 0H14.5M-14.5 2H14.5" stroke="#b0b0b0" stroke-width="0.6"/><path d="M-13.5 -4.2V4.2M-11.5 -4.2V4.2M-9.5 -4.2V4.2M-7.5 -4.2V4.2M-5.5 -4.2V4.2M-3.5 -4.2V4.2M-1.5 -4.2V4.2M0.5 -4.2V4.2M2.5 -4.2V4.2M4.5 -4.2V4.2M6.5 -4.2V4.2M8.5 -4.2V4.2M10.5 -4.2V4.2M12.5 -4.2V4.2" stroke="#a8a8a8" stroke-width="0.5"/></g>
<g transform="translate(591.5 287) rotate(-1.5)"><rect x="-15.5" y="-4.2" width="31" height="8.5" rx="1.2" fill="#5c5c5c" stroke="#d0d0d0" stroke-width="1"/><path d="M-14.5 -2H14.5M-14.5 0H14.5M-14.5 2H14.5" stroke="#b0b0b0" stroke-width="0.6"/><path d="M-13.5 -4.2V4.2M-11.5 -4.2V4.2M-9.5 -4.2V4.2M-7.5 -4.2V4.2M-5.5 -4.2V4.2M-3.5 -4.2V4.2M-1.5 -4.2V4.2M0.5 -4.2V4.2M2.5 -4.2V4.2M4.5 -4.2V4.2M6.5 -4.2V4.2M8.5 -4.2V4.2M10.5 -4.2V4.2M12.5 -4.2V4.2" stroke="#a8a8a8" stroke-width="0.5"/></g>
<g transform="translate(639.6 296.4) rotate(22)"><rect x="-15.5" y="-4.2" width="31" height="8.5" rx="1.2" fill="#5c5c5c" stroke="#d0d0d0" stroke-width="1"/><path d="M-14.5 -2H14.5M-14.5 0H14.5M-14.5 2H14.5" stroke="#b0b0b0" stroke-width="0.6"/><path d="M-13.5 -4.2V4.2M-11.5 -4.2V4.2M-9.5 -4.2V4.2M-7.5 -4.2V4.2M-5.5 -4.2V4.2M-3.5 -4.2V4.2M-1.5 -4.2V4.2M0.5 -4.2V4.2M2.5 -4.2V4.2M4.5 -4.2V4.2M6.5 -4.2V4.2M8.5 -4.2V4.2M10.5 -4.2V4.2M12.5 -4.2V4.2" stroke="#a8a8a8" stroke-width="0.5"/></g>
<g transform="translate(680.6 323) rotate(45)"><rect x="-15.5" y="-4.2" width="31" height="8.5" rx="1.2" fill="#5c5c5c" stroke="#d0d0d0" stroke-width="1"/><path d="M-14.5 -2H14.5M-14.5 0H14.5M-14.5 2H14.5" stroke="#b0b0b0" stroke-width="0.6"/><path d="M-13.5 -4.2V4.2M-11.5 -4.2V4.2M-9.5 -4.2V4.2M-7.5 -4.2V4.2M-5.5 -4.2V4.2M-3.5 -4.2V4.2M-1.5 -4.2V4.2M0.5 -4.2V4.2M2.5 -4.2V4.2M4.5 -4.2V4.2M6.5 -4.2V4.2M8.5 -4.2V4.2M10.5 -4.2V4.2M12.5 -4.2V4.2" stroke="#a8a8a8" stroke-width="0.5"/></g>
<g transform="translate(706.3 365.1) rotate(69.5)"><rect x="-15.5" y="-4.2" width="31" height="8.5" rx="1.2" fill="#5c5c5c" stroke="#d0d0d0" stroke-width="1"/><path d="M-14.5 -2H14.5M-14.5 0H14.5M-14.5 2H14.5" stroke="#b0b0b0" stroke-width="0.6"/><path d="M-13.5 -4.2V4.2M-11.5 -4.2V4.2M-9.5 -4.2V4.2M-7.5 -4.2V4.2M-5.5 -4.2V4.2M-3.5 -4.2V4.2M-1.5 -4.2V4.2M0.5 -4.2V4.2M2.5 -4.2V4.2M4.5 -4.2V4.2M6.5 -4.2V4.2M8.5 -4.2V4.2M10.5 -4.2V4.2M12.5 -4.2V4.2" stroke="#a8a8a8" stroke-width="0.5"/></g>
<g transform="translate(713.2 413.6) rotate(94.5)"><rect x="-15.5" y="-4.2" width="31" height="8.5" rx="1.2" fill="#5c5c5c" stroke="#d0d0d0" stroke-width="1"/><path d="M-14.5 -2H14.5M-14.5 0H14.5M-14.5 2H14.5" stroke="#b0b0b0" stroke-width="0.6"/><path d="M-13.5 -4.2V4.2M-11.5 -4.2V4.2M-9.5 -4.2V4.2M-7.5 -4.2V4.2M-5.5 -4.2V4.2M-3.5 -4.2V4.2M-1.5 -4.2V4.2M0.5 -4.2V4.2M2.5 -4.2V4.2M4.5 -4.2V4.2M6.5 -4.2V4.2M8.5 -4.2V4.2M10.5 -4.2V4.2M12.5 -4.2V4.2" stroke="#a8a8a8" stroke-width="0.5"/></g>
<g transform="translate(574.6 543.2) rotate(5)"><rect x="-15.5" y="-4.2" width="31" height="8.5" rx="1.2" fill="#5c5c5c" stroke="#d0d0d0" stroke-width="1"/><path d="M-14.5 -2H14.5M-14.5 0H14.5M-14.5 2H14.5" stroke="#b0b0b0" stroke-width="0.6"/><path d="M-13.5 -4.2V4.2M-11.5 -4.2V4.2M-9.5 -4.2V4.2M-7.5 -4.2V4.2M-5.5 -4.2V4.2M-3.5 -4.2V4.2M-1.5 -4.2V4.2M0.5 -4.2V4.2M2.5 -4.2V4.2M4.5 -4.2V4.2M6.5 -4.2V4.2M8.5 -4.2V4.2M10.5 -4.2V4.2M12.5 -4.2V4.2" stroke="#a8a8a8" stroke-width="0.5"/></g>
<g fill="none" stroke="#d8d8d8" stroke-width="1.3">
<circle cx="661.5" cy="306.7" r="3.5"/><path stroke-width="0.8" d="M662.5 303.2l1 -1.5"/>
<circle cx="602.6" cy="545.5" r="3.5"/><path stroke-width="0.8" d="M603.6 542.0l1 -1.5"/>
<circle cx="779.7" cy="542.6" r="3.5"/><path stroke-width="0.8" d="M780.7 539.1l1 -1.5"/>
</g>
<g fill="none" stroke="#4b8e1e" stroke-width="1">
<path d="M520.1 352 520 354.3 517.5 355.9 517.2 358 518.6 360 518.1 362.2 515.2 363.2 514.5 365.1 516.4 367.8 515.4 369.9 513.5 370.9 512.4 372.7 514.3 376.4 512.8 378.2 510.7 378.9 509 380.6 506.9 381 505.2 382.5 501.4 380.3 499.7 381.4 498.7 383 496.8 383.9 494.7 383.2 492.8 383.9 491.6 385.6 489.7 386.2 487.3 382.7 485.5 383 484.2 385.3 482.2 385.4 480.7 382.1 478.9 382 477.2 384 475.4 383.7 474 382.6 472.2 382.1 470.2 383.4 468.3 382.7 467.4 381.1 465.7 380.2 461.6 383.8 459.8 382.6 457.3 382.9 455.5 381.4 453.2 381 451.6 379.3 452.7 375.8 451.4 374.1 450.1 372.8 449 370.9 449.1 368.8 448.2 366.9 445.1 366.2 444.4 364.1 446.6 361.5 446.1 359.5 444.5 358 444.2 355.8 446 353.9 446 351.8 443.7 350 443.9 347.8 448 346.6 448.3 344.6 445.1 342.1 445.7 340 446.6 338.3 447.4 336.3 447.6 334.4 448.7 332.5 453.1 333.2 454.3 331.5 454.5 329.6 455.8 328.1 459.4 329.3 460.8 328.1 460.6 325.3 462.2 324.1 464.4 324.7 466 323.7 466.5 321.1 468.3 320.2 470.2 320.7 472.1 320.1 472.5 315.2 474.7 314.7 476.8 317 478.9 316.8 480.5 315 482.7 315 484.5 314.5 486.7 314.7 488.4 315.5 490.5 316 491.3 319.6 493.1 320.3 495.4 319.1 497.3 320 496.5 325 498 325.9 499.8 326 501.3 327.1 501.9 328.7 503.2 329.9 505.6 329.7 506.9 331.2 507.7 332.5 508.8 334.1 512.7 333.6 513.7 335.5 514.3 337.1 515.1 339.1 518.4 339.8 519.1 342 516.8 344.4 517.2 346.4 519.2 348 519.4 350.2z"/>
<path stroke-width="1.1" d="M494.1 349.5L500.4 345.5"/>
<path d="M500.4 345.5L503.7 338.9"/>
<path d="M500.4 345.5L505.8 343.8"/>
<path stroke-width="1.1" d="M494.1 349.5L503 350.3"/>
<path d="M503 350.3L511.5 349"/>
<path d="M503 350.3L508.2 354.5"/>
<path stroke-width="1.1" d="M493 358.7L499.7 362.8"/>
<path d="M499.7 362.8L505.3 364"/>
<path d="M499.7 362.8L502.2 367.4"/>
<path stroke-width="1.1" d="M493 358.7L499.5 368.4"/>
<path d="M499.5 368.4L503.8 371.2"/>
<path d="M499.5 368.4L500.2 372.9"/>
<path stroke-width="1.1" d="M481.7 361.2L483.3 372.3"/>
<path d="M483.3 372.3L486.6 376.9"/>
<path d="M483.3 372.3L482.3 377.4"/>
<path stroke-width="1.1" d="M481.7 361.2L474.2 367.5"/>
<path d="M474.2 367.5L472.1 373.2"/>
<path d="M474.2 367.5L466.6 370.9"/>
<path stroke-width="1.1" d="M474 355.9L466.8 364.2"/>
<path d="M466.8 364.2L465.3 372"/>
<path d="M466.8 364.2L460.9 367.9"/>
<path stroke-width="1.1" d="M474 355.9L466.5 356.1"/>
<path d="M466.5 356.1L460.8 357.5"/>
<path d="M466.5 356.1L459 354.1"/>
<path stroke-width="1.1" d="M475.8 344L464.7 340.7"/>
<path d="M464.7 340.7L456.1 343.4"/>
<path d="M464.7 340.7L460.3 337.4"/>
<path stroke-width="1.1" d="M475.8 344L470.9 337.4"/>
<path d="M470.9 337.4L464.9 332.9"/>
<path d="M470.9 337.4L470.1 329"/>
<path stroke-width="1.1" d="M488.2 341.5L486.2 330.8"/>
<path d="M486.2 330.8L483.1 323.8"/>
<path d="M486.2 330.8L489.2 323.2"/>
<path stroke-width="1.1" d="M488.2 341.5L494.4 334.3"/>
<path d="M494.4 334.3L497.8 326.8"/>
<path d="M494.4 334.3L501.5 330.1"/>
<path d="M513.8 359.7 514.4 363.5 513.2 366.7 506.8 366.5 506.2 369.8 502.9 370.7 504.7 378.1 500.4 377.9 496.4 377 494.2 380.6 491.4 384.2 487.5 380.6 484.3 380.4 484.9 368.5 491.1 364.3 495.4 360.2 505 357.1z"/>
<path d="M482.8 384.2 480 378.6 475.3 382.2 472.7 378.9 470.8 375.2 469.1 372.1 465.2 371.5 464.8 367.6 459.5 367.1 461.5 362.3 457.6 360.2 460.5 356.2 453.1 353.6 470.2 352.5 471.7 359.9 476.5 366.1 483.9 371.1z"/>
<path d="M455.8 352.9 457.5 349 456.3 344.7 462.4 342.6 459.8 337.3 464.8 336 466.7 332.8 467.3 327.6 471.9 327.4 475.3 325.6 478.1 321 482.7 323.2 486.6 322.7 486.2 334.7 477.3 336.7 469.3 342.5 472 352.2z"/>
<path d="M486.7 323 489.9 321.9 493 322.4 495.4 324.7 499.6 323 502 325.3 503.9 328.1 505.7 330.7 508.6 332.1 509 335.6 513.2 336.7 511.4 340.9 514.7 343 501.5 346.9 500.9 338.6 493.6 335.2 486.4 332.1z"/>
<path stroke="#5ea826" stroke-width="2.2" stroke-linecap="round" d="M485.7 351.5L494.1 349.5M485.7 351.5L493 358.7M485.7 351.5L481.7 361.2M485.7 351.5L474 355.9M485.7 351.5L475.8 344M485.7 351.5L488.2 341.5"/>
<path fill="#5ea826" stroke="none" d="M491.1 351.5 488.1 353.9 485.7 355.7 481.9 355.3 480.6 351.5 483.6 349.4 485.7 348.5 488.5 348.7z"/>
<path d="M737.7 474 737.6 476.1 736.5 477.8 736.2 479.8 738 481.9 737.5 484.1 735.7 485.4 735 487.3 738.5 490.8 737.4 493 733.2 492.7 732 494.6 732.1 496.8 730.7 498.6 726.7 497.4 725.3 498.8 725.4 501.4 723.7 502.7 720.9 501.8 719.3 502.9 717.9 503.7 716.1 504.6 714.4 504.9 712.6 505.6 711.5 507.4 709.5 507.9 707.8 507.9 705.8 508.3 704.3 510.2 702.2 510.3 700.5 506.6 698.6 506.5 696.8 508.4 694.8 508.1 693.8 505.1 692 504.6 689.2 507.7 687.3 506.9 687.8 502 686.2 501.2 683.3 503 681.6 501.9 682 498.8 680.5 497.6 677.5 498.5 676.1 497.1 678 493.4 676.9 492 672.1 493.4 671 491.7 672.7 488.9 671.9 487.2 668.4 486.9 667.7 485 666.6 483.5 666.1 481.4 662.2 480.3 661.9 478 663.3 476 663.2 473.8 661.7 471.9 661.9 469.6 665.6 468.2 666 466.2 667.2 464.7 667.8 462.7 670.6 462 671.4 460.2 669.5 457.4 670.6 455.6 672.6 454.9 673.7 453.2 673.7 451 675.1 449.4 677.1 449.1 678.6 447.7 678.1 444.3 679.9 443 683.1 444.8 684.9 443.8 684.9 440 686.9 439.1 689.3 440.5 691.3 439.8 692.9 439.3 695 438.8 697.1 442.1 699 441.9 700.5 439.5 702.5 439.5 703.9 442.7 705.7 442.9 708 439.1 710 439.5 711.3 441.3 713.1 442 715.1 441.6 717 442.4 717.3 445.4 718.9 446.4 722.1 444.5 723.8 445.8 723.4 448.9 724.8 450.2 730 447.6 731.5 449.3 730.8 452.1 732.1 453.9 733.6 455 734.7 456.9 732.3 460 733.1 461.8 734.5 463.1 735.1 465 735.1 466.7 735.5 468.7 736.1 470.3 736.3 472.3z"/>
<path stroke-width="1.1" d="M711.7 476.6L718.1 472.9"/>
<path d="M718.1 472.9L721.4 469.3"/>
<path d="M718.1 472.9L722.7 472.1"/>
<path stroke-width="1.1" d="M711.7 476.6L720.5 477.1"/>
<path d="M720.5 477.1L727.5 475.4"/>
<path d="M720.5 477.1L727.7 480.7"/>
<path stroke-width="1.1" d="M709.4 486.9L719.4 492.1"/>
<path d="M719.4 492.1L725.4 492.9"/>
<path d="M719.4 492.1L721.9 496.7"/>
<path stroke-width="1.1" d="M709.4 486.9L711.3 497"/>
<path d="M711.3 497L714.6 504.7"/>
<path d="M711.3 497L708.6 503.9"/>
<path stroke-width="1.1" d="M701.4 489.3L704.2 496.8"/>
<path d="M704.2 496.8L709 501.7"/>
<path d="M704.2 496.8L702.8 505"/>
<path stroke-width="1.1" d="M701.4 489.3L695.6 497.5"/>
<path d="M695.6 497.5L695.2 505.2"/>
<path d="M695.6 497.5L690.7 500"/>
<path stroke-width="1.1" d="M694.6 478.8L686.1 481.8"/>
<path d="M686.1 481.8L679 486.5"/>
<path d="M686.1 481.8L678.6 481.2"/>
<path stroke-width="1.1" d="M694.6 478.8L684.7 475.5"/>
<path d="M684.7 475.5L680.2 475.8"/>
<path d="M684.7 475.5L679.3 469.5"/>
<path stroke-width="1.1" d="M697.4 469.1L689.1 463"/>
<path d="M689.1 463L681.8 459.8"/>
<path d="M689.1 463L686.3 459.1"/>
<path stroke-width="1.1" d="M697.4 469.1L694.8 458.8"/>
<path d="M694.8 458.8L690.7 451.9"/>
<path d="M694.8 458.8L697.1 452.4"/>
<path stroke-width="1.1" d="M707.7 469.5L709.4 459.2"/>
<path d="M709.4 459.2L706.9 452.2"/>
<path d="M709.4 459.2L712.2 455.3"/>
<path stroke-width="1.1" d="M707.7 469.5L713.7 463.4"/>
<path d="M713.7 463.4L715.4 457.7"/>
<path d="M713.7 463.4L717.9 461.8"/>
<path d="M732.8 469.9 731.8 473.4 733.9 476.3 729.5 479.4 732.5 482.7 729.7 485.2 730.6 488.7 725.6 489.6 730.1 495.8 723.1 494.5 726.2 501.5 722.3 502.2 717.3 500.5 711.7 491.7 718.7 488.4 722.7 481.1 718.5 473.8z"/>
<path d="M707.4 510.6 703.8 504.2 700.8 508.4 698.5 503.4 694.8 507 691.5 507 690.2 502.5 686.3 503.4 684 501.4 681.2 499.8 678.6 497.9 680.9 492.6 673.9 493.2 688.2 485.7 694.6 488.2 699.3 490.5 705.1 494.4z"/>
<path d="M675.2 478.8 675.8 475.9 674.5 472.7 673.7 469.3 678.2 467.7 676.7 463.6 676.4 459.5 683.5 461.2 680.5 453.9 685.2 454.3 686.2 449.9 691.8 453.7 693.7 450.4 697.8 462.9 689 463.1 686.8 471.3 687.2 478.5z"/>
<path d="M701.6 451.1 704.4 452.6 708.2 446.3 710 452.3 714.9 447.5 715.1 454.6 718.6 454.4 720.9 456.3 722.8 458.6 724.3 461.2 730.8 460.5 730.4 464.5 732.9 467 719.4 472 716.9 464.3 710.2 459.5 702.1 461z"/>
<path stroke="#5ea826" stroke-width="2.2" stroke-linecap="round" d="M702.8 478L711.7 476.6M702.8 478L709.4 486.9M702.8 478L701.4 489.3M702.8 478L694.6 478.8M702.8 478L697.4 469.1M702.8 478L707.7 469.5"/>
<path fill="#5ea826" stroke="none" d="M707.5 478 704.7 479.9 702.8 482.8 700 480.8 698 478 699.6 474.8 702.8 474.6 704.7 476.1z"/>
<path d="M611.9 449.2 611.8 451.6 609.8 453.3 609.4 455.6 608.2 457.2 607.4 459.2 604.3 459.7 603.3 461.4 604.4 464.3 603 466 601.4 466.9 599.8 468.3 598.7 469.9 596.8 471.1 593.7 468.9 592 469.6 590.4 469.7 588.5 470.2 586.9 469.6 585.1 469.7 583.4 473 581.3 472.8 579.5 473.2 577.4 472.7 575.5 472.6 573.5 471.7 573.3 468.4 571.7 467.3 571 465.6 569.6 464.3 567.9 463.8 566.7 462.3 564.4 461.8 563.4 460 562.2 458.6 561.5 456.6 560.9 455 560.5 452.9 561.7 451 561.6 449 558.4 447.1 558.7 444.8 558 442.7 558.7 440.4 559.5 438.6 560.5 436.4 562 435 563.3 433.1 564.4 431.5 566 429.8 569.3 430.7 571 429.5 571 426.1 573.1 425 574.9 424.1 577.1 423.3 579.3 424.3 581.5 423.9 583.5 427.5 585.4 427.5 587 427.4 589 427.8 589.8 430.6 591.4 431.2 593.6 429.8 595.3 430.7 595.9 432.5 597.3 433.6 600.2 432.7 601.6 434.2 602.7 435.4 603.9 437.1 605.2 438.3 606.1 440.2 606.7 441.7 607.3 443.8 609.5 445.1 609.7 447.4z"/>
<path stroke-width="1.1" d="M590.7 449.3L597.9 446.7"/>
<path d="M597.9 446.7L602 442.6"/>
<path d="M597.9 446.7L601.6 446.9"/>
<path stroke-width="1.1" d="M590.7 449.3L598 451.6"/>
<path d="M598 451.6L601.9 451"/>
<path d="M598 451.6L602 453.9"/>
<path stroke-width="1.1" d="M587.7 455.8L591.7 459.7"/>
<path d="M591.7 459.7L597.4 461.5"/>
<path d="M591.7 459.7L593.2 462.4"/>
<path stroke-width="1.1" d="M587.7 455.8L588.5 461.9"/>
<path d="M588.5 461.9L590.6 464.8"/>
<path d="M588.5 461.9L586.5 466.8"/>
<path stroke-width="1.1" d="M581.5 455.4L580.3 463.1"/>
<path d="M580.3 463.1L581.2 468.6"/>
<path d="M580.3 463.1L578.7 466.4"/>
<path stroke-width="1.1" d="M581.5 455.4L577 459"/>
<path d="M577 459L575.6 463.3"/>
<path d="M577 459L573.6 460.4"/>
<path stroke-width="1.1" d="M577.9 450.7L571.8 455.3"/>
<path d="M571.8 455.3L569.3 458.6"/>
<path d="M571.8 455.3L566.2 457.5"/>
<path stroke-width="1.1" d="M577.9 450.7L572.9 450.5"/>
<path d="M572.9 450.5L568.8 451.3"/>
<path d="M572.9 450.5L568.1 447.3"/>
<path stroke-width="1.1" d="M581.2 442.4L574.8 438.2"/>
<path d="M574.8 438.2L571.4 437.3"/>
<path d="M574.8 438.2L572.6 433.3"/>
<path stroke-width="1.1" d="M581.2 442.4L579.6 435.7"/>
<path d="M579.6 435.7L577.3 432.3"/>
<path d="M579.6 435.7L579.9 432.3"/>
<path stroke-width="1.1" d="M585.1 443.8L584.1 438"/>
<path d="M584.1 438L581.9 435.6"/>
<path d="M584.1 438L585.6 434.7"/>
<path stroke-width="1.1" d="M585.1 443.8L588.3 437.3"/>
<path d="M588.3 437.3L588 433"/>
<path d="M588.3 437.3L591.1 433.8"/>
<path d="M602.8 447.8 602.4 450.3 605.6 453.5 600 454.7 601.7 458.1 600.8 460.7 599.8 463.5 594.9 462.1 593.6 464.4 591 464.5 590.2 470.1 586.7 466.6 584.3 470.1 584.3 462.2 589.7 457.9 593.2 453.7 597.6 448.2z"/>
<path d="M582.9 469.9 581.3 466.7 579.2 467.3 578.2 464.4 574.5 467.7 572.9 466.2 571.3 464.8 569.6 463.5 570.4 460.1 569.6 458.4 566.7 457.8 565 456.2 563.2 454.5 574.2 451.7 576.7 455.2 579.4 458.6 583.6 460.2z"/>
<path d="M563.9 443.8 566 442.3 565.3 439.8 567.6 438.7 568.4 436.7 571.5 436.9 572 434.7 574.1 434.4 574.2 430.8 577.8 433.8 578.8 431.5 580.4 429.9 582.5 430.6 583.5 440.4 580.2 441.6 575.5 442.3 574.6 446.6z"/>
<path d="M590.7 428.1 591.6 433.2 594 433.9 595.2 436.3 599.1 435.8 600.5 438.1 601.9 440.4 600.9 443.5 603.5 445.4 603.5 448.1 605 450.8 603.7 453.3 604.5 456.5 595.5 453.2 593.4 447.4 593.8 440.6 587.2 439.6z"/>
<path stroke="#5ea826" stroke-width="1.8" stroke-linecap="round" d="M584.4 449.2L590.7 449.3M584.4 449.2L587.7 455.8M584.4 449.2L581.5 455.4M584.4 449.2L577.9 450.7M584.4 449.2L581.2 442.4M584.4 449.2L585.1 443.8"/>
<path fill="#5ea826" stroke="none" d="M587.2 449.2 586.1 450.9 584.4 452.4 582.9 450.7 582.2 449.2 582.8 447.6 584.4 447.2 586.8 446.8z"/>
<path d="M616.8 379.8 617.3 381.1 617.1 382.4 615.9 383.6 615.6 384.9 616.8 386.4 615.6 387.5 616.1 389 613 389.3 613.7 390.9 612 391.5 612.2 393 612.1 394.3 611.4 395.4 610.5 396.3 609.5 397.1 608.7 398.1 607.9 399 606.1 399 606.6 401.2 605.3 401.6 603.8 401.7 603 402.6 602.5 404 600.6 403.3 600.2 404.9 598.5 404.3 597.9 405.7 596.5 405.4 595.9 407.3 594.5 406.9 593.3 407.2 591.9 406.2 591 407.8 589.8 407.8 588.6 407.7 587.4 407 586.3 407.7 585.1 407.9 583.9 408.2 582.9 406.1 581.7 406.9 580.6 406.4 579.2 407.4 578.2 406.5 577.2 406 576.3 405.1 574.4 406.7 573.8 405 572.4 405.2 571.6 404.2 569.3 405.6 569.3 403.4 567.3 404 567 402.4 565.2 402.5 564.1 401.9 562.2 401.9 562.8 399.6 561.4 399 560.4 398.2 559.7 397.1 560.1 395.3 557.1 395.5 558.2 393.5 556.1 393 557.3 391 555.2 390.4 556.6 388.6 556.2 387.4 557.2 385.9 555.2 385 555.9 383.6 554.5 382.4 557.1 381 555.3 379.8 556.8 378.6 555.8 377.3 557.6 376.3 556.7 374.9 557.4 373.8 556 372.2 558.8 371.7 557.6 370 558.2 368.9 557.6 367.3 560.4 367.2 560.3 365.8 560.2 364.4 560.1 362.8 562.4 362.9 563.2 362 563.3 360.5 564.4 359.8 565.2 358.8 565.9 357.9 567.3 357.5 568.6 357.2 569.4 356.3 570.6 356 571.9 355.9 572.1 353.8 573.6 354.1 574.9 354.1 576.3 354.4 576.9 352.8 578.2 353.1 579.2 352.1 580.6 353.2 581.6 351.7 582.7 351.3 583.8 349.8 585.1 352.3 586.3 350.1 587.5 350.5 588.7 351.1 590.1 350.3 591.2 351 592.4 351 593.9 350.5 594.9 351.5 596.1 351.7 597.1 352.8 598.7 352.2 599.2 353.9 601 353.4 601.3 355.2 602.7 355.3 602.6 357.5 604.8 356.7 604.9 358.4 606 359.1 607 359.8 608.4 360.2 608 362.1 609 362.9 609.5 364 610.3 364.9 610.2 366.3 612.2 366.6 611.4 368.3 613.5 368.8 613.4 370.2 613.9 371.3 614.7 372.4 614.9 373.6 615.8 374.7 617.1 375.8 615.9 377.3 616 378.5z"/>
<path d="M604.2 356.6 605 357.4 605.5 358.6 607.1 358.6 605.3 361.9 608 360.9 607.7 362.6 607.5 364 607.4 365.4 609.8 365.1 607.8 367.5 611 367 608.7 369.2 611.6 369.1 609.1 371.2 611.6 371.4 611.7 372.5 611.6 373.6 610.7 374.8 612.9 375.5 611.3 376.7 612.1 377.7 611.2 378.7 612.6 379.7 613.2 380.8 613.9 381.9 613 382.9 612.4 383.9 612.4 385 611.9 386 611.3 386.9 612.5 388.4 610.2 388.7 612.3 390.6 609.8 390.7 610.7 392.3 609.6 393 608.7 393.6 608.9 395 608.7 396.2 606.6 396 607.9 398.4 605.3 397.6 607 400.7 604.7 399.9 604.6 401.5 603.6 402.1 603.2 403.4 601.3 402.6 602 405.7 599.5 403.8 600.2 407.4 598 405.6 597.9 408.3 596.7 408.3 595.7 409.1 594.2 408.3 593.2 409.1 591.5 407.1 590.7 408.6 589.4 407.4 588.5 409.9 587.3 407.8 586.2 409.1 585.1 408.3 584 407.4 583.1 405.8 581.8 407.8 581.3 404.4 580.1 405.2 579.3 404.2"/>
<path d="M597.4 354.6 598.3 355.4 598.6 357.2 600.1 356.8 601 357.5 603 356.8 603 358.8 604 359.3 603.6 361.4 604.8 361.7 605.6 362.5 607 362.8 606.2 364.9 608.3 364.7 607.3 366.7 609.9 366.5 608.8 368.3 609.3 369.3 609.9 370.2 609.6 371.5 609.7 372.6 610.9 373.3 609.5 374.7 610.6 375.6 611.1 376.6 610.7 377.7 610.7 378.8 613 379.9 609.8 380.9 611.1 382 610.6 383 611.4 384.2 610.1 385.1 611.5 386.5 608.4 386.7 609.5 388.2 607.8 388.7 608 389.8 608 391 608.4 392.4 606.5 392.6 605.6 393.2 605.6 394.4 605.8 395.9 603.6 395.5 604.4 397.6 602.3 397 602.1 398.3 600.4 397.9 600.7 399.9 598.9 399.2 599.3 401.6 598.3 402 597.9 403.7 596.6 403.5 596 405.1 594.2 403.4 593.9 405.8 592.4 404.7 591.8 407.2 590.3 405.6 589.4 406.5 588.2 406.3 587.2 408.4 585.9 405.4 584.8 408.2 583.8 404.7 582.6 406.4 581.7 404.8 580.2 407 579.2 405.8"/>
<path d="M558.7 388 558.3 387.2 558.1 386.4 556.9 385.8 557.3 384.9 556.7 384.1 556.9 383.2 555.8 382.5 557.3 381.5 556.2 380.7 556.2 379.9 556.2 379 555.4 378.1 555.9 377.3 557.3 376.5 556.2 375.5 555.6 374.6 556 373.7 557.7 373.2 557.2 372.2 558.6 371.7 556.5 370.2 558.1 369.8 557.4 368.6 558.8 368.3 559.7 367.7"/>
<path d="M562 389.5 560.3 389.3 561.2 388.1 560 387.7 559.1 387.1 557.8 386.5 559.1 385.4 557.4 384.8 558.8 383.7 558.4 383 559.9 382 558.8 381.3 558.5 380.5 558.7 379.7 559.7 378.9 558.5 378 560.6 377.4 559.1 376.4 560.4 375.8 558.5 374.7 560.6 374.3 559.8 373.3 559.7 372.4 559.9 371.6 560.4 371 560.1 370"/>
<path d="M602.8 384.3 600.2 385.1 602.3 386.8 599.7 387.6 601.8 389.4 599.2 390.2 601.3 391.9"/>
<path d="M598.7 395 596.5 393.7 597.3 396.1 595.2 394.8 596 397.2 593.8 395.9 594.6 398.3"/>
<path d="M581.3 394.3 582 391.8 579.9 393.3 580.5 390.8 578.5 392.3 579.1 389.9 577.1 391.4"/>
<path d="M601.3 383.3 598.5 383.5 600 385.9 597.2 386.1 598.7 388.5 595.9 388.7 597.4 391.1"/>
<path d="M603.6 383.6 601 384.4 603.1 386.2 600.5 387 602.6 388.8 600 389.6 602.1 391.3"/>
<path d="M554.4 488.9 555.2 490.1 555.3 491.2 555.7 492.5 554 493.4 555.7 494.9 553.6 495.6 555.6 497.4 554.3 498.3 554.8 499.8 553.3 500.4 553.1 501.7 551.9 502.4 552 503.8 551.5 504.9 550.2 505.5 550 506.8 548.6 507.2 547.4 507.7 547.3 509.2 546.6 510.3 545.7 511.1 544.1 510.9 544.2 513.1 542 512 541.7 513.7 540.3 513.6 539.8 515.3 538.4 515 537.5 516.1 535.9 515.1 535 516.3 533.6 515.4 532.9 517.9 531.5 516.9 530.5 518.1 529.1 516.2 528 517.6 526.8 517.4 525.6 517.8 524.6 516 523.2 517.3 522 517 521 516.3 520.1 515.1 518.7 515.7 517.6 515.3 516.1 515.8 515.9 513.3 514.5 513.5 513.8 512.4 512.3 512.7 511.6 511.6 510.6 511.1 509.9 510 508.6 509.7 507.2 509.5 506.1 508.9 506.8 506.7 503.9 507.5 505.2 505.1 503.2 505 502.2 504.2 501.1 503.4 501.3 501.9 500.5 500.9 501.2 499.3 499.1 498.8 500.5 497 499.1 496.2 499.4 494.9 499 493.7 499 492.5 497.4 491.4 498.4 490.1 498 488.9 498.8 487.7 498.5 486.5 500.2 485.5 498.7 484.1 500.3 483.1 499.2 481.7 500.2 480.7 500.7 479.6 501.8 478.7 501.2 477.2 503.1 476.8 503.2 475.6 503.7 474.6 503.4 473 504.9 472.6 505.1 471.2 506.2 470.6 506.6 469.4 508.1 469.2 508.6 468 510.2 468.1 510.1 466.2 512.2 467 512.3 465.1 513.3 464.5 514 463.3 515.5 463.7 516.6 463.1 517.8 463.1 518.6 461.9 519.9 462 520.9 461.3 522.1 461.3 523.1 459.7 524.6 461.9 525.6 460 526.8 460.5 528 460.3 529.2 461 530.5 459.2 531.4 461.9 532.9 460.2 533.7 461.9 535.4 460.1 536.5 460.9 537.7 461.2 538.2 463.2 540.1 462 540.8 463.3 542.5 462.8 542.9 464.5 544.5 464.3 545.3 465.4 546.4 466 546.5 467.6 548.7 467.1 547.8 469.7 549.9 469.5 549.5 471.4 551.4 471.5 550.2 473.7 552.9 473.4 551.6 475.6 552.3 476.6 552.3 477.8 553.6 478.5 552.4 480.2 554.3 480.8 553.7 482.1 555.4 483 554 484.4 554.9 485.4 554.1 486.7 556.1 487.7z"/>
<path d="M548.5 473.3 549.8 473.6 549.4 475 550.3 475.6 551.1 476.3 551.3 477.2 551 478.4 552.8 478.7 551.9 480.1 552.5 480.9 551.1 482.3 553 482.8 550.9 484.2 553.8 484.6 551.6 485.8 554 486.5 551.4 487.6 553 488.5 551.4 489.4 553.1 490.4 551.2 491.1 552 492.1 552.3 493.1 552.4 494 551 494.7 552.1 495.9 551.1 496.5 551.9 497.8 550.9 498.4 551.7 499.8 549.5 499.8 551.3 501.8 549.5 501.9 548.5 502.3 548.3 503.3 548.8 504.8 546.9 504.5 546 505 545.5 505.7 545.3 506.8 542.7 505.3 542.7 506.7 542.5 507.7 542 508.6 539.9 507.1 539.7 508.2 538.3 507.5 538.3 509.1 537.5 509.4 536.8 510 535.4 508.7 535.7 511.8 534.4 510.7 533.6 510.9 532.9 511.6 532.2 512.5 531.2 512 530.5 513.3 529.6 512.8 528.8 514.1 527.9 513.2 527 513.3 526.1 513.3 525.1 514.3 524.2 513.7 523.2 514.3 522.3 514 521.3 514.4 520.8 512.4 519.6 513.4 519.2 511.8"/>
<path d="M544.2 467.5 545.3 467.8 545.3 469.3 547 468.9 547 470.3 547.8 470.9 547.4 472.5 549.9 471.8 547.6 474.6 550.2 474.1 549.4 475.6 549.7 476.6 550 477.4 551.6 477.7 551.2 478.9 551.4 479.9 551.8 480.7 552.2 481.6 551.2 482.8 553.6 483.2 550.5 484.7 553.5 485.2 552.2 486.3 553 487.1 553 488 553.2 489 552.3 489.9 553.7 490.9 553 491.8 552.9 492.7 552 493.5 553.1 494.6 551.9 495.3 553.4 496.8 550.7 496.9 552.7 498.6 550.2 498.6 551.1 500 549 500 550 501.6 549.3 502.2 549.1 503.2 547.7 503.4 547.2 504.1 545.5 503.9 545.8 505.3 544.7 505.5 545 507.1 543.7 507 542.8 507.3 542.3 508.1 542.6 510 540.8 508.9 540.2 509.6 539.1 509.6 538.7 510.7 537.6 510.5 538.1 513.7 536.6 512.5 536.2 514.3 535.1 513.9 534.6 515.8 533.3 514.4 532.6 516 531.4 515.1 530.7 516.7 529.5 515.4 528.7 517 527.6 514.7 526.6 517 525.7 515.1"/>
<path d="M502.7 496.1 501.9 495.7 503.2 494.8 501.9 494.5 502.5 493.8 501.5 493.3 502.1 492.6 500.5 492.3 500.8 491.6 501.4 490.9 501.3 490.4 501.3 489.8 502.1 489.2 499.7 488.5 501.1 488 499.5 487.3 501.5 486.8 501.4 486.2 501.7 485.6 500.4 484.8 500.9 484.3 499.9 483.5 502.1 483.3 501.4 482.5 503.2 482.4 501.4 481.2"/>
<path d="M507.9 502.6 506.9 502.6 506.2 502.3 505.9 501.8 505.6 501.3 505.3 500.7 506.2 499.6 503.7 500.2 504.5 499.1 503 499.1 504 498 504 497.4 503.7 496.8 502.4 496.6 503.7 495.6 501.6 495.5 503.8 494.3 501.3 494.2 502.7 493.3 503 492.7 503.9 492 501.6 491.6 502.2 490.9 502.6 490.3 503.2 489.7 501.3 489.1"/>
<path d="M545.3 499 542.9 498.5 544.6 500.3 542.1 499.9 543.9 501.7 541.4 501.2 543.1 503"/>
<path d="M538.9 503.2 536.4 502.3 537.1 504.8 534.7 503.8 535.4 506.4 532.9 505.4 533.6 508"/>
<path d="M545.3 497.9 542.7 498.2 544.6 500.1 541.9 500.5 543.8 502.4 541.1 502.7 543 504.6"/>
<path d="M530.5 505.8 528.6 503.9 528.1 506.5 526.2 504.6 525.7 507.2 523.8 505.3 523.2 508"/>
<path d="M519.1 507.1 519.4 504.5 517.5 506.2 517.8 503.7 515.9 505.4 516.2 502.8 514.2 504.5"/>
<path d="M665.3 552.7 665.7 553.5 664.7 554.3 664.9 555.1 664.4 555.8 665.5 556.8 664.2 557.3 665.1 558.4 664.3 559 665 560.2 664.2 560.7 663.8 561.5 662.7 561.8 663.3 563 662.6 563.6 662.9 564.8 662.2 565.4 662.3 566.6 660.4 566.1 661.1 567.9 660 568 659.8 569.1 658.5 568.9 657.8 569.5 657.2 570 656.7 570.9 655.5 570.5 655.1 571.6 653.7 570.6 653 571 652.2 571.2 651.7 572.2 650.5 571 649.9 572.3 649.1 572 648.2 571.7 647.4 571.6 646.6 572.2 645.8 571.3 645 571.5 644.3 570.9 643.3 572 642.6 571.4 641.8 571.3 641.3 570.1 640.1 571.4 639.6 570.6 638.9 570.2 638.2 569.8 637 570.3 636.5 569.4 635.8 569.1 635.5 568.2 634.4 568.3 634.4 566.9 633.4 566.9 633.2 565.9 631.7 566.3 631.9 565 630.7 565 630.9 563.8 629.8 563.6 630.2 562.4 629.4 562 628.3 561.6 628.1 560.8 628.6 559.7 627 559.4 627.1 558.5 627 557.6 626.8 556.8 626.3 556.1 626.5 555.2 626.4 554.4 626.9 553.5 625 552.7 625.8 551.8 625.8 551 626.4 550.2 626.4 549.3 626.5 548.5 626.7 547.7 626.9 546.9 626.9 546 627.8 545.4 627.5 544.4 629.4 544.4 629.6 543.6 630.4 543.1 630.5 542.3 631.6 542.1 631.7 541.2 632.2 540.6 632 539.4 633.4 539.6 633.1 538.2 634.1 538.1 635.1 538.1 635.6 537.5 636.1 536.7 637.2 537.1 637 535.1 638.3 536 638.6 534.7 639.5 534.7 639.9 533.4 641 534 641.7 533.4 642.6 533.7 643.3 533.3 644.1 532.6 644.9 531.8 645.8 533.4 646.6 533 647.4 533.3 648.3 532.6 649.2 532.6 650.1 532.2 650.8 533 651.5 533.7 652.4 533.6 653.4 533.5 653.9 534.4 655.1 533.9 655 535.9 656 535.7 656.8 536 658 535.8 658.1 537.1 658.7 537.5 659.2 538.2 660.4 538.2 659.9 539.9 661 539.9 661 541 661.8 541.4 662.1 542.1 662.6 542.7 662.6 543.7 663.3 544.2 663.7 544.9 663.6 545.8 664.2 546.4 664.3 547.2 663.6 548.2 665.5 548.6 664.1 549.7 665.7 550.2 665.1 551.1 665.7 551.9z"/>
<path d="M650.3 537 651.3 536.2 651.4 537.9 652.4 537.3 652.6 538.5 654.1 537.1 654.2 538.4 654.9 538.6 655.7 538.7 656.3 539.1 656.5 540 657.3 540.1 657.4 541.1 659.1 540.4 658.4 542 659.3 542.2 659.4 543 660.3 543.2 660.7 543.9 660.7 544.7 661.4 545.1 661.1 546 661.7 546.5 662.4 547.1 661 548.2 662.4 548.6 661.4 549.5 662.2 550 661.4 550.8 662.5 551.4 662.6 552.1 663.5 552.8 662.5 553.5 662.1 554.1 661.5 554.8 663.2 555.7 661 556 662.7 557.1 661.1 557.4 662.7 558.7 660.4 558.5 662.1 560 660.4 560 660.6 560.9 659.4 561 660.8 562.8 659.4 562.6 659.2 563.4 658.5 563.7 659.2 565.3 657.3 564.5 657.8 566.1 656.3 565.4 656.3 566.6 655.8 567.1 655.6 568.2 654.1 567.3 653.8 568.3 652.9 567.9 652.8 569.8 651.8 569.2 651.3 570 650.3 569.3 649.9 571 649 570.5 648.4 571.7 647.5 570.6 646.8 571 646 570 645.2 571.8 644.5 570.4"/>
<path d="M656.3 538.1 657.8 537.1 657.1 539 658.1 538.7 658.7 539 659.3 539.3 658.9 540.6 660.3 540.2 660.3 541 660.7 541.5 661 542 662 542.1 661.7 543.1 662.2 543.5 662.6 544 663.8 544.1 663.3 545.1 663.6 545.7 663.5 546.4 664 546.9 663.9 547.6 663.8 548.3 664.3 548.8 665.3 549.2 663.7 550.2 664.7 550.7 663.8 551.4 664.7 551.9 662.9 552.6 665.3 553.2 663.1 553.7 663.8 554.4 662.6 554.9 663.6 555.6 663.5 556.2 663 556.7 662 557 663.6 558.1 661.8 558.1 662.1 558.9 661.9 559.4 662.5 560.3 661.3 560.4 662.1 561.6 660.2 561.1 661.7 562.8 660.5 562.7 660 563.1 659.1 563.1 659.9 564.5 658.9 564.4 658.9 565.3 657.7 564.9 658.2 566.4 657 565.8 657.6 567.6 656.8 567.7 656.2 567.9 655.6 568.1 655.7 569.5 654.3 568.3 654.7 570.4 653.8 570.1 653.2 570.5 652.4 570 652.3 571.8 651.3 570.6 650.8 571.5 650.2 571.7 649.6 572.5 648.7 571.1"/>
<path d="M634.7 564.5 633.3 565.1 633.4 564.3 633.2 563.8 633.2 563.2 632 563.5 632.5 562.5 631.3 562.7 632.1 561.6 630.7 561.8 630.9 561.1 630.6 560.7 630.8 560 628.8 560.4 629.5 559.5 628.4 559.3 629.3 558.4 628.2 558.2 628.7 557.5 627.9 557.2 629.7 556.2 628.1 556 629.3 555.3 628 554.9 629.3 554.3 628.3 553.8"/>
<path d="M631 558.9 629.5 558.8 629.5 558.1 629.3 557.5 630.2 556.6 629.1 556.2 629.6 555.4 629.4 554.8 630.1 554.1 629.3 553.6 629.8 552.9 628.9 552.3 629.8 551.7 629.2 551 630.1 550.5 628.9 549.7 629.3 549.1 629.1 548.3 630 547.9 629.4 547.1 630.8 546.9 629.7 545.8 630.9 545.6 630.5 544.6 631.3 544.3 631.2 543.5"/>
<path d="M655.7 558.7 653.2 558.6 655.2 560.1 652.7 560 654.8 561.5 652.3 561.4 654.3 562.9"/>
<path d="M656.2 560.9 653.7 560.9 655.9 562.2 653.4 562.2 655.6 563.4 653.1 563.5 655.3 564.7"/>
<path d="M645.4 563.9 645 561.4 643.9 563.7 643.5 561.2 642.5 563.5 642.1 561.1 641.1 563.4"/>
<path d="M659.3 560.3 656.8 560.3 658.7 561.9 656.2 561.9 658.2 563.6 655.6 563.6 657.6 565.2"/>
<path d="M655.9 556.2 653.5 555.2 655 557.3 652.7 556.3 654.1 558.4 651.8 557.4 653.2 559.5"/>
<path d="M463.3 450.6 463.6 452.3 462 453.5 462.2 455.3 461 456.3 460.7 458.2 459.1 458.8 458.1 460.5 456.3 460.5 454.8 461.1 453.1 460.7 451.4 461.1 450 460.1 448.5 459.7 447.2 458.7 445.6 458.1 444.8 456.7 444 455.2 443.2 453.8 443 452.2 442.7 450.6 442.5 448.9 443.6 447.5 443.3 445.6 445.1 444.8 445.8 443.3 447.3 442.6 448.3 441.2 450.1 441.3 451.5 440.5 453.1 440.8 454.8 440.2 456.3 440.8 457.9 441.2 459 442.5 460.7 443 461.1 444.8 462.3 445.9 462.7 447.5 463.7 448.9z"/>
<path d="M458 443 458.9 443.5 460 444 460.8 444.9 461.4 445.8 462.6 446.6 462.5 447.9 462.4 449.1 462 450.2 463.2 451.4 461.1 452.2 461.5 453.4 461 454.3 461 455.6 460.2 456.3 459.8 457.5 458.3 457.4 458.1 459.1 456.5 458.4 455.8 459.5 454.6 459.3 453.6 459.8 452.5 459.2 451.3 460.2 450.4 459 448.8 460 448.2 458.6 447 458.4 447 456.7 445.5 456.5 445.5 455.2"/>
<path d="M452.4 450.3 451.7 450.6 449.4 450 447.7 450.6 445.7 449.6 444.5 448 445.2 446.1 447.8 445.9 448.6 447.3 450.5 448.6 452 450z"/>
<path d="M453.1 450.6 445.2 447.1"/>
<path d="M453 449.8 452.2 448.7 451.5 447.3 450.2 445.4 450 444.1 450 442.4 453.1 441 453.8 443.6 453.7 445.3 453 446.8 453.4 448.9z"/>
<path d="M453.1 450.6 451.6 442.1"/>
<path d="M453.8 450.1 454.1 449.3 455.5 447.6 456.6 446.3 458.3 445 459.7 443.9 461.1 447 459.7 447.9 458.1 449.1 456.9 449.6 455.1 449.4z"/>
<path d="M453.1 450.6 460.3 445.7"/>
<path d="M453.9 450.8 455.2 450.5 457 450.1 458.2 449.6 460 450.4 462.4 450.7 461.7 453.6 459.2 454.3 458 453.7 456.3 452.4 454.6 450.8z"/>
<path d="M453.1 450.6 461.6 452.2"/>
<path d="M453.1 451.4 453.7 452.2 454.4 454.5 454.5 456 455.3 457.7 454.7 459.4 451.2 459.8 450.6 457.4 451.6 455.8 452.3 453.8 452.4 452.3z"/>
<path d="M453.1 450.6 452.8 459.3"/>
<path d="M452.5 451.2 452.5 451.9 451.4 453.4 450.7 455.4 449.5 456.6 447.4 458.4 445.5 455.7 446.4 454 447.9 452.6 450.1 452.2 451.3 451.9z"/>
<path d="M453.1 450.6 447 456.8"/>
<path d="M492.9 447.2 492.9 448.9 492.3 450.4 492.5 452.3 490.7 453.1 490.3 455 488 454.7 487.2 456.5 485.4 456 484 456.8 482.5 456.8 480.9 457.2 479.3 457 477.7 456.6 476.3 455.8 474.8 454.9 474.4 453.1 473.2 452 472.8 450.4 472.3 448.8 472.3 447.2 472.8 445.7 473.5 444.3 473.5 442.6 475 441.7 474.9 439.6 476.6 439.1 477.4 437.3 479.3 437.2 480.8 436.6 482.5 437.3 484.1 437.3 485.4 438.4 487.3 437.8 488 439.6 489.9 439.8 490 441.7 491.8 442.5 491.7 444.2 492.9 445.6z"/>
<path d="M486.9 440.3 488.3 440.2 489.1 440.9 490.3 441.4 490.5 442.6 491.7 443.3 490.6 444.9 491.7 445.7 490.9 446.9 492.4 448 491.6 449 491.6 450.2 490.6 451 490.9 452.5 489.7 453 489 453.9 488.1 454.6 487.2 455.2 486 455.3 485.1 455.8 483.9 455.3 483 457.2 481.9 456.2 480.7 456.8 480 455 478.8 455.4 478.1 454.4 476.8 454.4 476.5 453.2 475.2 452.9 475.6 451.4"/>
<path d="M482.2 447.9 481.7 449.3 482 451 481.6 452.6 481.5 454.3 479.5 456.4 477.6 454.6 477.2 453.1 478.8 450.8 479.8 449.6 481.8 448.4z"/>
<path d="M482.5 447.2 478.8 455.1"/>
<path d="M481.7 447.2 480.9 447 479.1 448 477.5 449.1 475.2 448.6 473.9 448.4 473.9 445.7 475.7 445.4 477.4 445.3 478.5 446.3 480.6 446.9z"/>
<path d="M482.5 447.2 473.8 447"/>
<path d="M482.1 446.5 481 446 479.5 444.8 478.8 443.2 477.4 442.4 477.1 440 479.2 438.1 480.8 439.9 481.2 441.6 481.3 443.8 482.1 445.2z"/>
<path d="M482.5 447.2 478.4 439.6"/>
<path d="M482.7 446.4 482.7 445.3 482.9 443.4 482.1 442.1 482.2 439.9 483.4 438.4 486.4 439.1 486 441.1 485.7 442.6 484.7 444.4 482.9 445.3z"/>
<path d="M482.5 447.2 484.9 438.9"/>
<path d="M483.3 447 483.9 446.1 485.5 445.2 487.5 444.4 488.6 443.7 491.1 443.8 491.3 446.4 489.3 448.3 488.2 447.5 486.4 448 484.4 446.7z"/>
<path d="M482.5 447.2 491 445.5"/>
<path d="M483 447.8 483.8 448.1 485.5 448.9 487.5 450.4 488.6 451.9 489.4 453.1 486.7 454.9 484.8 454.3 484.7 452.2 483.6 450.7 483.7 449.2z"/>
<path d="M482.5 447.2 487.9 454"/>
<path d="M519.8 436.8 519.8 438.4 519 439.7 519.2 441.5 517.9 442.5 517.8 444.6 515.9 444.9 514.8 446.2 513.3 446.8 511.7 447.7 510 447.2 508.3 447.3 506.9 446.2 505.3 446.1 504.5 444.4 502.8 444 502.3 442.4 500.7 441.5 500.3 439.9 499.8 438.4 499.7 436.8 499.8 435.2 500.5 433.7 500.1 431.8 502.3 431.2 503 429.8 504.4 429.1 505.6 428.1 507 427.5 508.5 427.2 510 426.5 511.7 425.8 513.3 426.6 515 427 516 428.6 517.7 429.1 518 431 519.1 432.2 518.9 433.9 519.9 435.2z"/>
<path d="M514.5 429.7 515.6 430.1 515.6 431.5 516.7 431.8 517 432.8 518.4 433.2 518.9 434.2 519.9 435.2 519.3 436.4 520.2 437.6 519.3 438.7 519.3 439.9 518.4 440.8 517.7 441.6 517.1 442.6 516.8 443.8 515.2 443.7 514.9 445.2 513.8 445.4 512.7 445.9 511.5 445.6 510.5 446.1 509.4 445.4 508.1 446.8 507.4 444.9 506 445.5 505 444.9 503.9 444.6 503.9 442.9 502.2 442.9 502.7 441.2"/>
<path d="M509.3 436.4 508.3 436.3 506.3 435.7 504.2 436.4 502.8 435 501.6 433.7 502.2 431.4 504.4 431.8 506.2 432.6 507.4 433.9 508.5 435.8z"/>
<path d="M510 436.8 502.3 432.9"/>
<path d="M509.8 436 509.3 434.6 508.3 433.9 507.4 432.2 507 429.8 507.4 428.4 509.4 428 510.6 429.2 511.2 431.4 510.6 432.8 510.2 434.5z"/>
<path d="M510 436.8 508.4 428.3"/>
<path d="M510.7 436.3 511.1 435 512.3 433.6 512.9 432.5 514.4 431.3 516.5 430.5 518.2 432.9 517.2 433.8 515.5 434.9 513.7 435.7 511.9 435.6z"/>
<path d="M510 436.8 516.9 431.6"/>
<path d="M510.7 437.2 512 437.8 513.8 437 515.6 437.1 517.3 438.4 518.4 439.9 517.7 441.8 515.2 441.7 514.3 440.7 512.3 438.8 511.1 438.2z"/>
<path d="M510 436.8 517.8 440.6"/>
<path d="M510.1 437.6 510.6 438.3 511.7 440 512.1 442.1 513 443.7 513.1 446 509.4 445.8 508.7 444.1 509.4 442.5 509 440.1 510.3 438.8z"/>
<path d="M510 436.8 511.2 445.4"/>
<path d="M509.3 437.3 508.6 437.7 508 439.5 507 441.2 504.8 442.2 503 443.4 501.7 440.1 502.7 438.9 504.7 438.3 506.4 437.8 507.8 437.6z"/>
<path d="M510 436.8 502.8 441.6"/>
<path d="M650.9 415.5 651.1 417.1 650.3 418.6 650.5 420.5 648.9 421.4 648.5 423.2 646.8 423.7 645.8 425.4 644 425.4 642.3 425.3 640.8 425.2 639.2 425.8 637.7 425 636 424.9 635 423.5 633.3 423 632.9 421.3 631.5 420.2 631 418.7 630 417.2 630.4 415.5 630.3 413.8 631.6 412.5 631.2 410.6 632.6 409.5 633.3 408 634.8 407.3 636 406.1 637.7 405.8 639.1 405 640.8 405.9 642.4 405.2 643.8 406.2 645.7 405.8 646.5 407.7 647.9 408.4 648.3 410.1 649.6 411 649.8 412.6 650.7 413.9z"/>
<path d="M645.3 408.5 646.5 408.6 646.9 409.7 648.2 410 648.8 410.9 649.8 411.7 650.1 412.8 650.4 414 650.4 415.1 650.6 416.3 648.9 417.1 649.3 418.3 648.6 419.2 649.1 420.7 647.2 420.7 647.5 422.4 646 422.4 645.9 424.2 644.2 423.3 643.6 424.9 642.4 424.9 641.3 424.9 640.2 424.1 639.1 424.3 638.3 423.5 637 423.9 636 423.3 635 422.8 634.6 421.7 633.5 421.2 633.2 420.1"/>
<path d="M641.4 414.9 641.6 414.2 643 412.4 642.8 410.9 644.7 408.9 645.7 407.7 648.2 410.4 647.3 412.3 645.4 412.8 644.2 413.8 642.2 414.6z"/>
<path d="M640.8 415.5 646.9 409.3"/>
<path d="M641.6 415.6 642.2 415.4 644 415.1 646 414.4 648.2 414.1 649.9 414.7 650 418.1 648 417.9 645.9 418.1 644 416.5 642.2 415.7z"/>
<path d="M640.8 415.5 649.4 416.6"/>
<path d="M641 416.3 641.1 417.5 642.5 418.8 643.8 420.3 644.5 422 644.1 424.2 641.2 424.9 640.7 423.1 640.1 421.3 641.1 419.1 640.7 417.4z"/>
<path d="M640.8 415.5 642.7 423.9"/>
<path d="M640.2 416 639.2 416.4 638.7 418.7 638.1 420 637.1 421.2 634.9 421.9 632.4 419.7 633.6 418.4 635.7 417.1 637.9 416.8 638.9 416.1z"/>
<path d="M640.8 415.5 634.1 421"/>
<path d="M640 415.3 639.4 414.9 636.7 415.7 635 416.2 633.5 415.6 631.5 414.7 632.5 411.4 635 411.2 636.5 411.9 637.8 413.4 639.5 414.3z"/>
<path d="M640.8 415.5 632.5 413.1"/>
<path d="M640.6 414.7 639.9 414.3 639.2 412.6 637.3 410.8 636.5 409.3 636.4 407 639.7 406.6 640.4 408.7 640.6 410.1 640.3 412.2 640.9 413.5z"/>
<path d="M640.8 415.5 638.2 407.2"/>
<path d="M642 442.6 643.2 444.2 642.4 445.7 642.3 447.4 641 448.5 640.6 450.3 638.6 450.4 637.9 452.4 636 452.1 634.7 453.7 632.9 453.5 631.2 453.3 629.6 452.8 627.8 452.6 627.3 450.3 626.1 449.4 625.6 447.9 623.5 447.4 624.4 445.4 622.5 444.2 623.8 442.6 622.7 441 624.2 439.8 624 438.1 624.7 436.6 625.5 435.2 626.8 434.2 627.6 432.2 629.6 432.4 631.1 431.4 632.9 432 634.5 432.7 635.9 433.5 637.8 433 638.8 434.4 640 435.5 640.8 436.9 641.7 438.1 641.8 439.7 642.4 441.1z"/>
<path d="M637.4 435.5 638.9 435.3 638.9 436.9 640.7 436.8 640.1 438.5 641.9 438.8 641.3 440.2 641.7 441.2 641.4 442.3 642.3 443.4 642 444.4 641.8 445.5 640.6 446.2 641.6 448 640.3 448.5 639.9 449.8 638.2 449.5 637.6 450.6 636.3 450.5 635.5 451.2 634.3 450.6 633.4 452 632.3 451.1 631.1 451.9 630.3 450.7 629.2 450.6 628.2 450.3 626.9 450.2 626.6 448.9 625.3 448.5 625.1 447.3"/>
<path d="M633.7 442.6 634.9 442.3 636.3 441.6 638.7 440.9 639.9 440.8 641.7 442 641.4 444.5 640.3 444.6 638.2 444.4 636.1 443.4 634.3 443.3z"/>
<path d="M632.9 442.6 641.6 442.9"/>
<path d="M633.3 443.3 634.5 443.6 635.7 445 637.2 446.3 638 448.2 638.2 450 636.5 451.2 634.8 450.2 633.8 448.1 634 446 633.8 444.2z"/>
<path d="M632.9 442.6 637.2 450.1"/>
<path d="M632.6 443.3 632.5 444.6 632.2 446.4 632.4 447.8 632 449.6 630.9 451.4 628.1 450.3 628.2 448 628.8 447.1 630.6 445.4 631.9 444.4z"/>
<path d="M632.9 442.6 629.4 450.5"/>
<path d="M632.1 442.8 630.9 443.6 629.6 444.5 628.5 445.8 626.8 445.6 624.3 446.3 624.1 442.8 625.2 441.9 627 441.9 629.5 442.4 631 442.3z"/>
<path d="M632.9 442.6 624.4 444.5"/>
<path d="M632.4 442 632 441.6 629.8 440.5 628.6 439.9 626.5 438.5 625.9 436.5 628.1 434.5 629.9 435.7 630.5 437.1 631.5 438.8 631.7 441.2z"/>
<path d="M632.9 442.6 627.5 435.9"/>
<path d="M633.2 441.8 633 440.5 633.4 438.5 633 437.5 632.9 435.2 634.7 433.7 637 434 637 436.4 636.4 438 634.9 439.7 634.1 440.8z"/>
<path d="M632.9 442.6 635.6 434.4"/>
<path d="M636.2 473.8 637 475.5 635.8 476.8 635.7 478.5 634.9 479.9 633.8 481.1 632.1 481.5 630.9 482.5 629.4 482.8 628.1 483.8 626.5 483.1 624.8 484.7 623.2 484 621.3 484 620 482.7 618.8 481.5 618.5 479.6 616.9 478.7 617.3 476.8 616.3 475.4 616.8 473.8 616.1 472.2 617.4 470.8 617.5 469.2 619.1 468.4 619.7 467 620.5 465.6 621.4 463.9 623.1 463.4 624.7 462.4 626.5 463.9 628.1 463.8 629.3 465.2 631.2 464.6 631.9 466.4 633.6 466.7 634.9 467.7 636.2 468.8 635.7 470.8 637.1 472.1z"/>
<path d="M631.7 465.7 633 465.9 633.5 467.1 634.2 468.1 634.4 469.3 635.7 469.9 634.7 471.4 636.7 472.1 635 473.5 635.5 474.5 634.6 475.4 634.9 476.6 634.6 477.6 634.4 478.7 633.2 479.2 632.9 480.4 631.4 480.2 631.1 481.6 630.1 482 629.3 483 628 482.6 627 482.8 625.9 482.1 624.8 482.7 623.7 482.5 622.4 482.7 621.7 481.7 620.3 481.6 619.9 480.4 618.9 479.8 618.4 478.7"/>
<path d="M626.6 474.6 627.1 475.1 627.8 477.2 628.9 478.8 629.3 480.3 629.6 482.3 626.6 483.3 625.6 481 626 479.2 626.4 477 626.4 475.8z"/>
<path d="M626.5 473.8 627.8 482.4"/>
<path d="M626.1 474.5 626.2 475.1 625.6 477 625.6 479.2 624.8 480.9 623.2 482.5 620.3 480.5 621.4 478.4 622.7 477 623.4 475.9 625.6 475.6z"/>
<path d="M626.5 473.8 621.9 481.2"/>
<path d="M625.7 473.7 624.8 473.5 623.3 474.4 620.7 474.1 619.4 474.1 617.7 473.4 617.6 470.9 619.7 470.6 621.3 471.6 623 472.5 624.4 473.5z"/>
<path d="M626.5 473.8 618 472.3"/>
<path d="M626.4 473 625.9 471.6 625 470.6 623.9 468.9 623.2 467 624.2 464.9 627 464.2 628 466.2 628 468.9 627.5 470.2 626.4 471.8z"/>
<path d="M626.5 473.8 625.5 465.2"/>
<path d="M627.1 473.3 627.6 472.8 628 470.7 629.6 469.1 630.4 467.2 631.9 466.4 634.6 469.1 632.8 471 631.1 471.7 630.3 472 628.5 473z"/>
<path d="M626.5 473.8 632.9 468"/>
<path d="M627.3 473.8 628.2 473.5 629.8 473.1 631.5 472.5 633.4 471.6 635.7 472.2 635.6 475.8 633.6 476 631.2 475.7 629.6 475.1 627.9 474.2z"/>
<path d="M626.5 473.8 635.2 474.1"/>
<path d="M642.5 506.1 643.6 507.9 642.6 509.4 642 511 640.1 511.7 639.4 513.1 638.2 514 636.7 514.6 635.3 515 634 516.1 632.4 515.3 630.8 516.4 629.4 515.3 627.5 515.7 626.4 514.4 624.8 513.7 624.3 512 622.8 511 623 509.1 622.3 507.7 622.9 506.1 621.9 504.4 623.3 503.1 623 501.3 625 500.7 624.7 498.4 626.5 498 627.4 496.3 629.3 496.5 630.7 495.5 632.4 496.5 634.1 495.6 635.3 497.2 637 497.1 637.8 498.6 639.7 498.8 640.4 500.3 641.6 501.4 642.4 502.9 642.7 504.5z"/>
<path d="M637.2 498.7 638.8 498.4 639.4 499.5 639.6 500.7 640.1 501.7 641.2 502.4 641.1 503.6 641.5 504.6 641.7 505.7 642.1 506.9 641.9 508 641.3 509 641.2 510.2 640.6 511.2 639.2 511.6 638.7 512.6 637.5 512.8 637.4 514.6 636 514.4 635 514.9 633.9 514.6 632.9 515.1 631.8 514.3 630.8 514.7 630 513.7 628.5 514.7 627.8 513.6 626.6 513.5 626.4 512.1 624.8 512 624.2 511"/>
<path d="M633.1 505.7 634 504.7 635.2 503.9 636.5 501.7 638 500.9 639.4 501.1 641.3 503.5 639.2 505 638.3 505.6 636.2 505.7 634.4 505.6z"/>
<path d="M632.4 506.1 640.1 502.1"/>
<path d="M633.1 506.4 634.5 506.9 636.4 506.5 638.3 506.8 640.1 506.9 641.7 508.9 639.7 511.6 637.7 510.6 636.3 509.6 635.2 508.9 634.1 507.3z"/>
<path d="M632.4 506.1 640.2 509.8"/>
<path d="M632.5 506.9 633.2 508.2 633.9 510 635 511 634.7 513.1 635.1 514.8 631.9 515.6 631.4 512.8 631.2 511 631.4 510 632.2 508z"/>
<path d="M632.4 506.1 633.3 514.7"/>
<path d="M631.7 506.6 630.9 507.1 629.9 509.3 629.2 510.3 627.3 511.5 625.9 512.3 624.2 510.3 625.1 508.6 626.6 507.9 628.6 507 631.2 506.7z"/>
<path d="M632.4 506.1 625.2 511"/>
<path d="M631.6 505.8 631 505.9 629.1 505.7 626.9 506.4 625.1 506 623.1 504.6 624.1 501.6 626 501.4 628.6 502.6 629.8 503.7 630.7 504.8z"/>
<path d="M632.4 506.1 624.3 503.1"/>
<path d="M632.4 505.3 632.4 504.3 631.1 503 630.9 501.1 629.7 499.2 630.6 497.6 633.4 497.2 634.3 498.8 634 501 633.7 502.5 632.5 504.8z"/>
<path d="M632.4 506.1 632.1 497.4"/>
<path d="M538.5 543.5 538.7 545.1 537.8 546.5 537.2 548 536.3 549.2 535.7 550.7 534.6 551.9 533.5 553.3 531.5 552.7 530.2 554.2 528.5 553.8 526.9 553.8 525.4 553.1 523.6 553.1 522.7 551.4 521.6 550.4 520.7 549.1 519.7 548 519.3 546.5 518.1 545.1 517.8 543.5 517.6 541.8 518.5 540.2 518.8 538.6 520.5 537.7 520.7 535.7 522.6 535.3 523.6 534 525.5 534.4 526.9 533.6 528.5 533.8 530.1 533.1 531.6 534.1 533.2 534.3 534.2 535.6 536.2 535.8 537.2 537.2 537.9 538.7 538.3 540.3 538.4 541.9z"/>
<path d="M533.1 536.4 534.5 536.2 535.4 536.9 535.9 538 535.8 539.3 537 539.9 536.2 541.3 537.4 542.1 537.2 543.2 538.1 544.3 538.1 545.4 537.7 546.6 536.5 547.3 537.3 549 535.3 549 535.3 550.5 533.8 550.4 533.4 551.8 531.8 551.2 531.1 552.2 530.1 552.7 529 553.4 527.9 552.8 526.6 553.4 525.7 552.3 524.7 551.8 524.2 550.5 522.5 551 522.6 549.4 521.4 549 520.9 548.1"/>
<path d="M528.4 544.3 528 545.7 529 547 529.8 548.7 529 550.4 528.5 552.9 525.7 552.1 525.6 549.7 525.7 548.5 527.4 546.9 528.1 545.5z"/>
<path d="M528.5 543.5 527 552"/>
<path d="M527.8 543.9 527.5 544.9 525.7 546 525.1 547.4 523 549.1 521.3 549.2 520 547 521 545 522.7 544.4 524.9 544.7 526.9 544.2z"/>
<path d="M528.5 543.5 520.9 547.7"/>
<path d="M527.8 543.1 526.9 542.6 525.3 542.8 523.5 541.9 521.6 541.8 520 540.4 521.9 537.8 523.8 538.3 525.3 538.9 526.2 541 527.2 542.1z"/>
<path d="M528.5 543.5 521.1 539"/>
<path d="M528.4 542.7 528.1 542.1 526.9 539.8 525.9 538.1 525.9 537.2 526.3 534.5 529.1 533.9 530 536.1 529.1 538.2 528.7 539.7 528.1 541.6z"/>
<path d="M528.5 543.5 527.5 534.9"/>
<path d="M529.2 543.2 530.3 542 531.6 540.7 532.2 539.8 533.9 538.5 536.1 538 537.6 540.7 536.1 542.6 534 542.4 532.4 542.4 530.3 542.9z"/>
<path d="M528.5 543.5 536.3 539.8"/>
<path d="M529.2 543.8 530.4 544.2 532.2 543.9 534 544.1 535.5 544.8 537.9 546.1 536.7 548.3 534.7 547.7 532.6 546.8 531.3 546 530.3 544.4z"/>
<path d="M528.5 543.5 536.5 546.9"/>
<path d="M516.9 563.4 517.3 565.1 516.1 566.4 516.4 568.4 514.5 569.1 513.9 570.6 512.4 571.3 511.4 572.7 509.8 573 508.3 573.8 506.7 573.6 505 574.2 503.6 573.1 501.8 573 501.1 571.1 499.5 570.6 499.2 568.9 497.1 568.3 497.1 566.5 496.2 565.1 497 563.4 496.4 561.8 497.5 560.4 497.1 558.5 498.2 557.2 499.3 556 501 555.6 502 554.2 503.7 554 505 552.7 506.7 553.4 508.3 553.5 509.5 554.8 511.1 554.8 512.1 555.9 514.2 555.9 514.7 557.6 516.7 558.3 516.8 560.1 517.7 561.7z"/>
<path d="M511.1 556.5 512.4 556.5 512.4 558 514.6 557.5 514.5 559 515.9 559.5 515.7 560.8 515.9 561.9 515.6 563 515.8 564.1 515.4 565.2 515.9 566.5 514.1 566.9 514.2 568.1 513.4 568.8 513.6 570.5 512.2 570.6 511.4 571.4 510.5 572.1 509.6 573.1 508.2 572.1 507.2 572.3 506.1 572.7 504.9 572.9 504.1 571.4 502.7 572.1 501.9 571.3 500.3 571.4 500.4 569.6 499.1 569.3 499.7 567.6"/>
<path d="M506.6 564.2 506.7 564.8 507.4 566.7 507.5 568.8 507.9 570.8 507.3 572.5 503.7 572.4 503.4 570.1 504.3 568.6 505.5 566.5 506.3 565.4z"/>
<path d="M506.7 563.4 505.7 572"/>
<path d="M506 563.8 505 565 504.4 565.7 503 568.2 501.6 568.8 500.2 569.9 498.4 567.4 499.2 565.2 501.8 565.1 502.7 564 504.8 564.6z"/>
<path d="M506.7 563.4 499.4 568.1"/>
<path d="M505.9 563.1 505.1 563.4 503.2 563.5 501 562.8 498.9 563 497.3 562 499 558.5 501.1 558.6 502.5 559.5 504.1 561.6 505.5 562z"/>
<path d="M506.7 563.4 498.6 560.3"/>
<path d="M506.8 562.6 506.6 561.9 506 559.9 505.6 558.3 505 555.7 506.2 554 508.9 554 509.6 556.1 509.3 558.7 508 559.6 507.3 561.3z"/>
<path d="M506.7 563.4 507.6 554.8"/>
<path d="M507.4 562.9 507.6 562.6 509.1 560.4 509.7 559.3 511.8 558.1 513 557 514.8 559.8 513.3 561.2 512.5 562.2 509.7 561.8 508 562.8z"/>
<path d="M506.7 563.4 513.9 558.5"/>
<path d="M507.4 563.8 508.4 564 510.2 564.4 512.2 564.9 514.1 565.5 515.7 567 514 568.7 512 569 510.3 567.9 508.9 566.5 508.1 564.8z"/>
<path d="M506.7 563.4 514.2 567.7"/>
<path d="M504 589.6 504 591.3 503.2 592.8 502.9 594.5 501.5 595.5 500.9 597.2 499.1 597.6 497.9 598.5 496.2 598.6 494.9 599.7 493.3 598.9 491.7 599.7 490.1 599.5 488.3 599.5 487.5 597.6 485.6 597.3 485 595.6 483.6 594.6 483.6 592.7 482.9 591.2 483.8 589.6 482.6 587.9 484 586.6 483.7 584.7 485.3 583.8 485.8 582.1 487.2 581.2 488.7 580.6 490.3 580.2 491.7 579.2 493.3 579.9 495 579 496.3 580.5 498.2 580.1 499.1 581.6 501 581.9 501.1 584 502.6 584.9 502.8 586.5 504.4 587.8z"/>
<path d="M498.1 582 499.4 582.2 499.7 583.5 501 583.9 500.4 585.5 501.6 586.1 501 587.4 502.9 588.1 501.7 589.3 502.6 590.3 502.7 591.5 502.7 592.7 501.6 593.5 501.8 594.9 500.5 595.4 500.3 596.8 498.6 596.6 497.9 597.4 496.6 597.1 495.8 598 494.7 597.8 493.7 598.3 492.8 597.5 491.6 598.6 490.5 598.3 489.3 598.4 488.8 596.9 487.1 597.5 487.1 595.7 485.9 595.4 485.7 594.2"/>
<path d="M492.6 590 491.8 591 490.3 592.6 489.4 594 487.6 595.1 485.8 595.6 484.9 592.8 485.9 590.7 487.6 591 489.4 590.6 491.7 590.4z"/>
<path d="M493.3 589.6 485.7 593.7"/>
<path d="M492.5 589.3 491.1 588.9 490.1 589.2 487.9 589.5 485.7 588.7 483.8 588.3 484.9 585.6 487.2 585.5 488.6 586.5 490.1 587.3 491.7 588.3z"/>
<path d="M493.3 589.6 485.1 586.7"/>
<path d="M493.2 588.8 493 587.6 491.7 586.5 490.5 584.4 490 582.8 490.4 581 493.4 580.8 493.8 582.5 494.6 583.9 493.3 585.9 492.9 587.7z"/>
<path d="M493.3 589.6 492 581"/>
<path d="M494 589.2 494.4 588.1 495.9 586.7 496.8 585.6 498.2 584.1 500.5 584 502.4 586.7 500.1 587.8 499 588.7 497.3 589.3 495.4 588.6z"/>
<path d="M493.3 589.6 501 585.5"/>
<path d="M493.9 590.1 494.9 590.2 496.4 591.3 498.2 591 499.9 592.7 501.4 594.2 499.2 596.2 497.5 595.2 496.6 594 495.1 593 494.5 590.6z"/>
<path d="M493.3 589.6 500.2 594.9"/>
<path d="M493.5 590.4 494.2 591.3 494.7 592.8 496.5 594.3 496.7 596 497 598.2 493.7 599.1 493.5 597.2 493.2 595 493.6 593 493.2 591.5z"/>
<path d="M493.3 589.6 495.4 598"/>
</g>
<g stroke="#a00000" fill="none" stroke-width="1"><circle cx="439.4" cy="538.4" r="5.3"/><path d="M419 538.4H459.7M439.4 518.9V558.7"/></g>
</svg>
<svg class="a" style="left:95px;top:132px;overflow:hidden" width="1043" height="23" viewBox="95 132 1043 23">
<path stroke="#5e5e5e" stroke-width="1" d="M96.5 148V155M108.5 152V155M120.5 148V155M132.5 152V155M145.5 148V155M157.5 152V155M169.5 148V155M181.5 152V155M194.5 148V155M206.5 152V155M218.5 148V155M231.5 152V155M243.5 148V155M255.5 152V155M267.5 148V155M280.5 152V155M292.5 148V155M304.5 152V155M316.5 148V155M329.5 152V155M341.5 148V155M353.5 152V155M365.5 148V155M378.5 152V155M390.5 148V155M402.5 152V155M415.5 148V155M427.5 152V155M439.5 148V155M451.5 152V155M464.5 148V155M476.5 152V155M488.5 148V155M500.5 152V155M513.5 148V155M525.5 152V155M537.5 148V155M550.5 152V155M562.5 148V155M574.5 152V155M586.5 148V155M599.5 152V155M611.5 148V155M623.5 152V155M635.5 148V155M648.5 152V155M660.5 148V155M672.5 152V155M684.5 148V155M697.5 152V155M709.5 148V155M721.5 152V155M734.5 148V155M746.5 152V155M758.5 148V155M770.5 152V155M783.5 148V155M795.5 152V155M807.5 148V155M819.5 152V155M832.5 148V155M844.5 152V155M856.5 148V155M868.5 152V155M881.5 148V155M893.5 152V155M905.5 148V155M918.5 152V155M930.5 148V155M942.5 152V155M954.5 148V155M967.5 152V155M979.5 148V155M991.5 152V155M1003.5 148V155M1016.5 152V155M1028.5 148V155M1040.5 152V155M1052.5 148V155M1065.5 152V155M1077.5 148V155M1089.5 152V155M1102.5 148V155M1114.5 152V155M1126.5 148V155"/>
<g font-family="Liberation Sans" font-size="9.4" text-anchor="middle" fill="#1e1e1e"><text x="96.5" y="141">-28</text><text x="120.5" y="141">-26</text><text x="145.5" y="141">-24</text><text x="169.5" y="141">-22</text><text x="194.5" y="141">-20</text><text x="218.5" y="141">-18</text><text x="243.5" y="141">-16</text><text x="267.5" y="141">-14</text><text x="292.5" y="141">-12</text><text x="316.5" y="141">-10</text><text x="341.5" y="141">-8</text><text x="365.5" y="141">-6</text><text x="390.5" y="141">-4</text><text x="415.5" y="141">-2</text><text x="439.5" y="141">0</text><text x="464.5" y="141">2</text><text x="488.5" y="141">4</text><text x="513.5" y="141">6</text><text x="537.5" y="141">8</text><text x="562.5" y="141">10</text><text x="586.5" y="141">12</text><text x="611.5" y="141">14</text><text x="635.5" y="141">16</text><text x="660.5" y="141">18</text><text x="684.5" y="141">20</text><text x="709.5" y="141">22</text><text x="734.5" y="141">24</text><text x="758.5" y="141">26</text><text x="783.5" y="141">28</text><text x="807.5" y="141">30</text><text x="832.5" y="141">32</text><text x="856.5" y="141">34</text><text x="881.5" y="141">36</text><text x="905.5" y="141">38</text><text x="930.5" y="141">40</text><text x="954.5" y="141">42</text><text x="979.5" y="141">44</text><text x="1003.5" y="141">46</text><text x="1028.5" y="141">48</text><text x="1052.5" y="141">50</text><text x="1077.5" y="141">52</text><text x="1102.5" y="141">54</text><text x="1126.5" y="141">56</text></g>
<path d="M1011.6 145.2H1023L1017.3 151z" fill="#000"/>
</svg>
<svg class="a" style="left:72px;top:155px;overflow:hidden" width="23" height="577" viewBox="72 155 23 577">
<path stroke="#5e5e5e" stroke-width="1" d="M88 735.5H95M92 722.5H95M88 710.5H95M92 698.5H95M88 686.5H95M92 673.5H95M88 661.5H95M92 649.5H95M88 637.5H95M92 624.5H95M88 612.5H95M92 600.5H95M88 588.5H95M92 575.5H95M88 563.5H95M92 551.5H95M88 538.5H95M92 526.5H95M88 514.5H95M92 502.5H95M88 489.5H95M92 477.5H95M88 465.5H95M92 453.5H95M88 440.5H95M92 428.5H95M88 416.5H95M92 404.5H95M88 391.5H95M92 379.5H95M88 367.5H95M92 354.5H95M88 342.5H95M92 330.5H95M88 318.5H95M92 305.5H95M88 293.5H95M92 281.5H95M88 269.5H95M92 256.5H95M88 244.5H95M92 232.5H95M88 220.5H95M92 207.5H95M88 195.5H95M92 183.5H95M88 170.5H95M92 158.5H95"/>
<g font-family="Liberation Sans" font-size="9.4" text-anchor="middle" fill="#1e1e1e"><text transform="translate(81 735.5) rotate(-90)" x="0" y="0">-16</text><text transform="translate(81 710.5) rotate(-90)" x="0" y="0">-14</text><text transform="translate(81 686.5) rotate(-90)" x="0" y="0">-12</text><text transform="translate(81 661.5) rotate(-90)" x="0" y="0">-10</text><text transform="translate(81 637.5) rotate(-90)" x="0" y="0">-8</text><text transform="translate(81 612.5) rotate(-90)" x="0" y="0">-6</text><text transform="translate(81 588.5) rotate(-90)" x="0" y="0">-4</text><text transform="translate(81 563.5) rotate(-90)" x="0" y="0">-2</text><text transform="translate(81 538.5) rotate(-90)" x="0" y="0">0</text><text transform="translate(81 514.5) rotate(-90)" x="0" y="0">2</text><text transform="translate(81 489.5) rotate(-90)" x="0" y="0">4</text><text transform="translate(81 465.5) rotate(-90)" x="0" y="0">6</text><text transform="translate(81 440.5) rotate(-90)" x="0" y="0">8</text><text transform="translate(81 416.5) rotate(-90)" x="0" y="0">10</text><text transform="translate(81 391.5) rotate(-90)" x="0" y="0">12</text><text transform="translate(81 367.5) rotate(-90)" x="0" y="0">14</text><text transform="translate(81 342.5) rotate(-90)" x="0" y="0">16</text><text transform="translate(81 318.5) rotate(-90)" x="0" y="0">18</text><text transform="translate(81 293.5) rotate(-90)" x="0" y="0">20</text><text transform="translate(81 269.5) rotate(-90)" x="0" y="0">22</text><text transform="translate(81 244.5) rotate(-90)" x="0" y="0">24</text><text transform="translate(81 220.5) rotate(-90)" x="0" y="0">26</text><text transform="translate(81 195.5) rotate(-90)" x="0" y="0">28</text><text transform="translate(81 170.5) rotate(-90)" x="0" y="0">30</text></g>
<path d="M85 376.1V387.7L91 381.9z" fill="#000"/>
</svg>
<div class="a" style="left:72px;top:748px;width:1083px;height:2px;background:#c8c8c8"></div>
<div class="a" style="left:72px;top:750px;width:1082px;height:21px;background:#fff"></div>
<div class="a" style="left:72px;top:770px;width:1082px;height:1px;background:#c4c4c4"></div>
<div class="a" style="left:72px;top:771px;width:1083px;height:27px;background:#ececec"></div>
<div class="a" style="left:138px;top:776px;width:989px;height:18px;background:#fff"></div>
<div class="a" style="left:1153px;top:108px;width:2px;height:690px;background:#d0d0d0"></div>
<div class="a layers"></div>
<div class="a" style="left:1155px;top:108px;width:300px;height:23px;background:linear-gradient(#ececec,#e2e2e2)"></div>
<div class="a" style="left:1155px;top:107px;width:300px;height:1px;background:#c8c8c8"></div>
<div class="a" style="left:1284px;top:112px;font-size:12px;line-height:14px;color:#333;white-space:nowrap">Lista de capas</div>
<svg class="a" style="left:1155px;top:108px" width="40" height="22"><circle cx="8.8" cy="10.4" r="6.6" fill="#6e6e6e"/><path d="M6 7.6l5.6 5.6M11.6 7.6L6 13.2" stroke="#e8e8e8" stroke-width="1.8"/><circle cx="27" cy="10.4" r="6.6" fill="#6e6e6e"/><rect x="23.3" y="9.3" width="5.5" height="4.5" fill="none" stroke="#e8e8e8" stroke-width="1.1"/><path d="M25.3 9.3V7.3H30.8V11.8H28.8" fill="none" stroke="#e8e8e8" stroke-width="1.1"/></svg>
<div class="a" style="left:1155px;top:131px;width:61px;height:25px;border:1px solid #b4b4b4;background:linear-gradient(#fbfbfb,#ededed)"></div>
<div class="a" style="left:1215px;top:131px;width:61px;height:25px;border:1px solid #b4b4b4;background:linear-gradient(#fbfbfb,#ededed)"></div>
<div class="a" style="left:1275px;top:131px;width:61px;height:25px;border:1px solid #b4b4b4;background:linear-gradient(#fbfbfb,#ededed)"></div>
<div class="a" style="left:1335px;top:131px;width:61px;height:25px;border:1px solid #b4b4b4;background:linear-gradient(#fbfbfb,#ededed)"></div>
<div class="a" style="left:1395px;top:131px;width:60px;height:25px;border:1px solid #b4b4b4;background:linear-gradient(#fbfbfb,#ededed)"></div>
<svg class="a" style="left:1155px;top:131px" width="300" height="25"><g transform="translate(30 11.5)"><path d="M-8 0.2C-6.5 -6.3 6.5 -6.3 8 0.2C6.5 6.5 -6.5 6.5 -8 0.2z" fill="#000"/><path d="M-5.3 1C-3.8 -2.6 3.8 -2.6 5.3 1C3.8 3.7 -3.8 3.7 -5.3 1z" fill="#fff"/><circle cx="0" cy="-0.3" r="3" fill="#000"/><circle cx="-0.7" cy="-1.2" r="0.8" fill="#fff"/></g><g transform="translate(90 11.5)"><path d="M-8 0.2C-6.5 -6.3 6.5 -6.3 8 0.2C6.5 6.5 -6.5 6.5 -8 0.2z" fill="#b8b8b8"/><path d="M-5.3 1C-3.8 -2.6 3.8 -2.6 5.3 1C3.8 3.7 -3.8 3.7 -5.3 1z" fill="#fff"/><circle cx="0" cy="-0.3" r="3" fill="#b8b8b8"/><circle cx="-0.7" cy="-1.2" r="0.8" fill="#fff"/></g><path d="M150 5.5V17.5M144 11.5H156" stroke="#e00000" stroke-width="3"/><path d="M204 11.5H216" stroke="#e00000" stroke-width="3"/><path d="M263.5 18.5L265 14.5L274.5 4.5L276.5 6.5L267 16.5z" fill="#f0b030" stroke="#a06010" stroke-width="0.7"/><path d="M274.5 4.5L276.5 6.5L277.5 5.5L275.5 3.5z" fill="#e04040"/></svg>
<div class="a" style="left:1161px;top:163px;width:16px;height:9px;background:#ffffff;border:1px solid #222"></div>
<div class="a" style="left:1183px;top:159px;font-size:13px;line-height:16px;color:#111;white-space:nowrap">0</div>
<div class="a" style="left:1161px;top:183px;width:16px;height:9px;background:#d4aa62;border:1px solid #222"></div>
<div class="a" style="left:1183px;top:179px;font-size:13px;line-height:16px;color:#111;white-space:nowrap">Caminos</div>
<div class="a" style="left:1161px;top:203px;width:16px;height:9px;background:#c4c4c4;border:1px solid #222"></div>
<div class="a" style="left:1183px;top:199px;font-size:13px;line-height:16px;color:#111;white-space:nowrap">Instalaciones</div>
<div class="a" style="left:1161px;top:223px;width:16px;height:9px;background:#5e9c2e;border:1px solid #222"></div>
<div class="a" style="left:1183px;top:219px;font-size:13px;line-height:16px;color:#111;white-space:nowrap">Plantas</div>
<svg class="a" style="left:1400px;top:150px" width="60" height="90"><g transform="translate(22.7 17)"><path d="M-8 0.2C-6.5 -6.3 6.5 -6.3 8 0.2C6.5 6.5 -6.5 6.5 -8 0.2z" fill="#000"/><path d="M-5.3 1C-3.8 -2.6 3.8 -2.6 5.3 1C3.8 3.7 -3.8 3.7 -5.3 1z" fill="#fff"/><circle cx="0" cy="-0.3" r="3" fill="#000"/><circle cx="-0.7" cy="-1.2" r="0.8" fill="#fff"/></g><g transform="translate(45 17)" fill="none"><path d="M-3.3 -0.5V-3A3.3 3.3 0 0 1 3.3 -3V-0.5" stroke="#b8b8b8" stroke-width="1.6"/><rect x="-4.6" y="-0.8" width="9.2" height="7.5" fill="#b8b8b8"/></g><g transform="translate(22.7 37)"><path d="M-8 0.2C-6.5 -6.3 6.5 -6.3 8 0.2C6.5 6.5 -6.5 6.5 -8 0.2z" fill="#000"/><path d="M-5.3 1C-3.8 -2.6 3.8 -2.6 5.3 1C3.8 3.7 -3.8 3.7 -5.3 1z" fill="#fff"/><circle cx="0" cy="-0.3" r="3" fill="#000"/><circle cx="-0.7" cy="-1.2" r="0.8" fill="#fff"/></g><g transform="translate(45 37)" fill="none"><path d="M-3.3 -0.5V-3A3.3 3.3 0 0 1 3.3 -3V-0.5" stroke="#b8b8b8" stroke-width="1.6"/><rect x="-4.6" y="-0.8" width="9.2" height="7.5" fill="#b8b8b8"/></g><g transform="translate(22.7 57)"><path d="M-8 0.2C-6.5 -6.3 6.5 -6.3 8 0.2C6.5 6.5 -6.5 6.5 -8 0.2z" fill="#000"/><path d="M-5.3 1C-3.8 -2.6 3.8 -2.6 5.3 1C3.8 3.7 -3.8 3.7 -5.3 1z" fill="#fff"/><circle cx="0" cy="-0.3" r="3" fill="#000"/><circle cx="-0.7" cy="-1.2" r="0.8" fill="#fff"/></g><g transform="translate(45 57)" fill="none"><path d="M-3.3 -0.5V-3A3.3 3.3 0 0 1 3.3 -3V-0.5" stroke="#b8b8b8" stroke-width="1.6"/><rect x="-4.6" y="-0.8" width="9.2" height="7.5" fill="#b8b8b8"/></g><g transform="translate(22.7 77)"><path d="M-8 0.2C-6.5 -6.3 6.5 -6.3 8 0.2C6.5 6.5 -6.5 6.5 -8 0.2z" fill="#000"/><path d="M-5.3 1C-3.8 -2.6 3.8 -2.6 5.3 1C3.8 3.7 -3.8 3.7 -5.3 1z" fill="#fff"/><circle cx="0" cy="-0.3" r="3" fill="#000"/><circle cx="-0.7" cy="-1.2" r="0.8" fill="#fff"/></g><g transform="translate(45 77)" fill="none"><path d="M-3.3 -0.5V-3A3.3 3.3 0 0 1 3.3 -3V-0.5" stroke="#b8b8b8" stroke-width="1.6"/><rect x="-4.6" y="-0.8" width="9.2" height="7.5" fill="#b8b8b8"/></g><circle cx="6.5" cy="72.5" r="1.8" fill="#e04040"/></svg>
<div class="a" style="left:1455px;top:108px;width:45px;height:690px;background:linear-gradient(90deg,#f2f2f2,#e4e4e4 40%,#c8c8c8 100%);border-left:1px solid #c4c4c4"></div>
<div class="a" style="left:1461.0px;top:116px;width:2px;height:2px;background:#a8a8a8"></div><div class="a" style="left:1466.5px;top:116px;width:2px;height:2px;background:#a8a8a8"></div><div class="a" style="left:1472.0px;top:116px;width:2px;height:2px;background:#a8a8a8"></div><div class="a" style="left:1477.5px;top:116px;width:2px;height:2px;background:#a8a8a8"></div><div class="a" style="left:1483.0px;top:116px;width:2px;height:2px;background:#a8a8a8"></div><div class="a" style="left:1488.5px;top:116px;width:2px;height:2px;background:#a8a8a8"></div>
<div class="a" style="left:1456px;top:120px;width:43px;height:42px;background:#b4b4b4;border-radius:4px"></div>
<svg class="a" style="left:1463px;top:127px" width="28" height="28"><rect x="0.5" y="0.5" width="27" height="27" fill="#fff" stroke="#555"/><rect x="0.5" y="0.5" width="27" height="4.5" fill="#000"/><rect x="1.5" y="1.2" width="3" height="3" fill="#fff"/><path d="M6 12l6-3v12l-6 3z" fill="#888" stroke="#444" stroke-width="0.6"/><path d="M9 10.5l9-4.5v12l-9 4.5z" fill="#d8d8d8" stroke="#444" stroke-width="0.6"/><path d="M12 9l9-4.5v12l-9 4.5z" fill="#fff" stroke="#444" stroke-width="0.6"/><path d="M14 17l5-7l1 6z" fill="none" stroke="#e04040" stroke-width="0.7"/></svg>
<div class="a" style="left:1456px;top:166px;width:43px;height:43px;background:#f0c4c4"></div>
<svg class="a" style="left:1463px;top:174px" width="28" height="28"><rect x="0.5" y="0.5" width="27" height="27" fill="#fdd8d8" stroke="#555"/><rect x="0.5" y="0.5" width="27" height="4.5" fill="#000"/><rect x="1.5" y="1.2" width="3" height="3" fill="#fff"/><rect x="7" y="10" width="11" height="7.5" fill="#fad0a8" stroke="#805030" stroke-width="0.8"/><circle cx="16" cy="16.5" r="4.5" fill="#fad0a8" fill-opacity="0.85" stroke="#805030" stroke-width="0.8"/></svg>
<svg class="a" style="left:1463px;top:220px" width="28" height="28"><rect x="0.5" y="0.5" width="27" height="27" fill="#fff" stroke="#555"/><rect x="0.5" y="0.5" width="27" height="4.5" fill="#000"/><rect x="1.5" y="1.2" width="3" height="3" fill="#fff"/></svg>
<div class="a" style="left:1459.0px;top:261px;width:1px;height:1px;background:#888"></div><div class="a" style="left:1463.5px;top:261px;width:1px;height:1px;background:#888"></div><div class="a" style="left:1468.0px;top:261px;width:1px;height:1px;background:#888"></div><div class="a" style="left:1472.5px;top:261px;width:1px;height:1px;background:#888"></div><div class="a" style="left:1477.0px;top:261px;width:1px;height:1px;background:#888"></div><div class="a" style="left:1481.5px;top:261px;width:1px;height:1px;background:#888"></div><div class="a" style="left:1486.0px;top:261px;width:1px;height:1px;background:#888"></div><div class="a" style="left:1490.5px;top:261px;width:1px;height:1px;background:#888"></div><div class="a" style="left:1495.0px;top:261px;width:1px;height:1px;background:#888"></div>
<svg class="a" style="left:1463px;top:276px" width="28" height="28"><rect x="0.5" y="0.5" width="27" height="27" fill="#fff" stroke="#555"/><rect x="0.5" y="0.5" width="27" height="4.5" fill="#000"/><rect x="1.5" y="1.2" width="3" height="3" fill="#fff"/><path d="M4 9h3v2.5h-3zM4 14h3v2.5h-3zM4 19h3v2.5h-3z" fill="#000"/><path d="M9.5 9.3h15v2h-15zM9.5 14.3h15v2h-15zM9.5 19.3h15v2h-15z" fill="none" stroke="#333" stroke-width="0.6"/></svg>
<svg class="a" style="left:1463px;top:322px" width="28" height="28"><rect x="0.5" y="0.5" width="27" height="27" fill="#fff" stroke="#555"/><rect x="0.5" y="0.5" width="27" height="4.5" fill="#000"/><rect x="1.5" y="1.2" width="3" height="3" fill="#fff"/><path d="M7.5 8.5H21L16 15.5V22L12.5 20.5V15.5z" fill="#a8a8a8" stroke="#555" stroke-width="0.7"/><ellipse cx="14.2" cy="9" rx="6.7" ry="1.6" fill="#d8d8d8" stroke="#555" stroke-width="0.6"/></svg>
<svg class="a" style="left:1463px;top:368px" width="28" height="28"><rect x="0.5" y="0.5" width="27" height="27" fill="#fff" stroke="#555"/><rect x="0.5" y="0.5" width="27" height="4.5" fill="#000"/><rect x="1.5" y="1.2" width="3" height="3" fill="#fff"/><path d="M2.5 15h23" stroke="#f08080" stroke-width="0.7"/><path d="M6 8L11.5 12V18L6 22z" fill="#fff" stroke="#444" stroke-width="0.7"/><rect x="11.5" y="11" width="9" height="8" rx="1" fill="#a0a0a0" stroke="#444" stroke-width="0.6"/></svg>
<div class="a" style="left:1459.0px;top:409px;width:1px;height:1px;background:#888"></div><div class="a" style="left:1463.5px;top:409px;width:1px;height:1px;background:#888"></div><div class="a" style="left:1468.0px;top:409px;width:1px;height:1px;background:#888"></div><div class="a" style="left:1472.5px;top:409px;width:1px;height:1px;background:#888"></div><div class="a" style="left:1477.0px;top:409px;width:1px;height:1px;background:#888"></div><div class="a" style="left:1481.5px;top:409px;width:1px;height:1px;background:#888"></div><div class="a" style="left:1486.0px;top:409px;width:1px;height:1px;background:#888"></div><div class="a" style="left:1490.5px;top:409px;width:1px;height:1px;background:#888"></div><div class="a" style="left:1495.0px;top:409px;width:1px;height:1px;background:#888"></div>
<div class="a" style="left:1456px;top:417px;width:44px;height:43px;background:#b4b4b4;border-radius:4px"></div>
<svg class="a" style="left:1463px;top:424px" width="28" height="28"><rect x="0.5" y="0.5" width="27" height="27" fill="#fff" stroke="#555"/><rect x="0.5" y="0.5" width="27" height="4.5" fill="#000"/><rect x="1.5" y="1.2" width="3" height="3" fill="#fff"/><path d="M3 9.5h10M3 12.5h11M3 15.5h10M3 18.5h11" stroke="#888" stroke-width="0.6"/><path d="M0.5 22.5h27" stroke="#333" stroke-width="0.7"/><path d="M4 25h2M9 25h14" stroke="#555" stroke-width="0.8"/></svg>
<svg class="a" style="left:1463px;top:471px" width="28" height="28"><rect x="0.5" y="0.5" width="27" height="27" fill="#fff" stroke="#555"/><rect x="0.5" y="0.5" width="27" height="4.5" fill="#000"/><rect x="1.5" y="1.2" width="3" height="3" fill="#fff"/><rect x="8" y="8.5" width="12.5" height="16" rx="1" fill="#c98a2a" stroke="#7a5010" stroke-width="0.6"/><rect x="9.5" y="10.5" width="9.5" height="12" fill="#f4f4f4"/><rect x="11" y="7" width="6.5" height="3" rx="0.8" fill="#888"/><path d="M10.5 13h7M10.5 15h7M10.5 17h7" stroke="#bbb" stroke-width="0.6"/></svg>
<div class="a status"></div>
<svg class="a" style="left:95px;top:111px" width="16" height="16"><circle cx="7" cy="7.5" r="5.8" fill="#e8ecf4" stroke="#2a3a8a" stroke-width="1.6"/><path d="M4.5 7.5l3-3M5 10l4-1" stroke="#c04040" stroke-width="0.6"/><path d="M7 8l5.5 5" stroke="#e8b020" stroke-width="1.8"/><circle cx="13" cy="13.5" r="1.2" fill="#e05050"/></svg>
<div class="a" style="left:612px;top:113px;font-size:12px;line-height:14px;color:#222">park.dxf</div>
<div class="a" style="left:168px;top:737px;width:858px;height:8px;background:#808080;border-radius:4px"></div>
<div class="a" style="left:1143px;top:303px;width:8px;height:280px;background:#808080;border-radius:4px"></div>
<div class="a" style="left:1118px;top:733px;font-size:13px;line-height:15px;color:#111;white-space:nowrap">1 &lt; 10</div>
<div class="a" style="left:77px;top:751px;font-size:13px;line-height:15px;color:#1414d0;white-space:nowrap"><i>Comando:</i> new</div>
<div class="a" style="left:73px;top:778px;font-size:13px;line-height:15px;color:#111;white-space:nowrap">Comando:</div>
<div class="a" style="left:1127px;top:772px;width:26px;height:26px;border:1px solid #b0b0b0;background:linear-gradient(#f8f8f8,#e8e8e8)"></div>
<svg class="a" style="left:1132px;top:779px" width="16" height="12"><rect x="0.5" y="0.5" width="14" height="10" fill="#fff" stroke="#222"/><rect x="0.5" y="0.5" width="14" height="2.5" fill="#222"/><rect x="11.5" y="1" width="1" height="1" fill="#fff"/></svg>
<div class="st" style="left:2px;top:807px">47.0937,12.7851</div>
<div class="st" style="left:2px;top:827px">@47.0937,12.7851</div>
<div class="a" style="left:253px;top:802px;width:1px;height:40px;background:#777"></div>
<div class="st" style="left:256px;top:807px">48.7984&lt;15°</div>
<div class="st" style="left:256px;top:827px">@48.7984&lt;15°</div>
<div class="a" style="left:506px;top:819px;width:6px;height:6px;border-radius:3px;background:#c8c8c8"></div>
<div class="st" style="left:569px;top:816px;letter-spacing:0.1px">Seleccionar entidad o región</div>
<svg class="a" style="left:716px;top:805px" width="20" height="32"><path d="M9.3 1C4 1 1 5 1 10V21C1 27 4.5 30.5 9.3 30.5C14 30.5 17.8 27 17.8 21V10C17.8 5 14.5 1 9.3 1z" fill="#fff" stroke="#333" stroke-width="0.9"/><path d="M1 12.5Q9.3 9.5 17.8 12.5M9.3 1V11" fill="none" stroke="#333" stroke-width="0.9"/><rect x="7.6" y="3.5" width="3.4" height="6.5" rx="1.7" fill="#fff" stroke="#333" stroke-width="0.8"/></svg>
<div class="a" style="left:940px;top:819px;width:6px;height:6px;border-radius:3px;background:#c8c8c8"></div>
<div class="st" style="left:949px;top:816px;letter-spacing:0.07px">No hay entidades seleccionadas.</div>
<div class="a" style="left:1269px;top:819px;width:6px;height:6px;border-radius:3px;background:#c8c8c8"></div>
<div class="a" style="left:1447px;top:166px;width:53px;height:1.5px;background:rgba(240,70,70,0.6)"></div>
<div class="a" style="left:1447px;top:208px;width:53px;height:1.5px;background:rgba(240,70,70,0.6)"></div>
<div class="a" style="left:1456px;top:158px;width:1.5px;height:57px;background:rgba(240,70,70,0.6)"></div>
<div class="a" style="left:1497px;top:158px;width:1.5px;height:57px;background:rgba(240,70,70,0.6)"></div>
<div class="a" style="left:1448px;top:159px;width:74px;height:74px;border-radius:37px;border:4px solid rgba(130,165,210,0.28);filter:blur(1.2px)"></div>
<div class="a" style="left:1279px;top:223px;width:215px;height:25px;border:1px solid #c8ccd4;border-radius:2px;background:linear-gradient(#f6f8fb,#e4e8ee);box-shadow:0 1px 2px rgba(0,0,0,0.35)"></div>
<div class="a" style="left:1284px;top:227px;font-size:14px;line-height:17px;color:#111;white-space:nowrap">Mostrar / Ocultar lista de bloques</div>
<svg class="a" style="left:1485px;top:196px" width="20" height="32"><path d="M0 0L0 21L5 16.5L8.8 25L12.2 23.5L8.5 15.3L15.2 15.3z" transform="translate(2.2 2.2)" fill="#fff" stroke="#000" stroke-width="1.4" stroke-linejoin="round"/></svg>
</body></html>
